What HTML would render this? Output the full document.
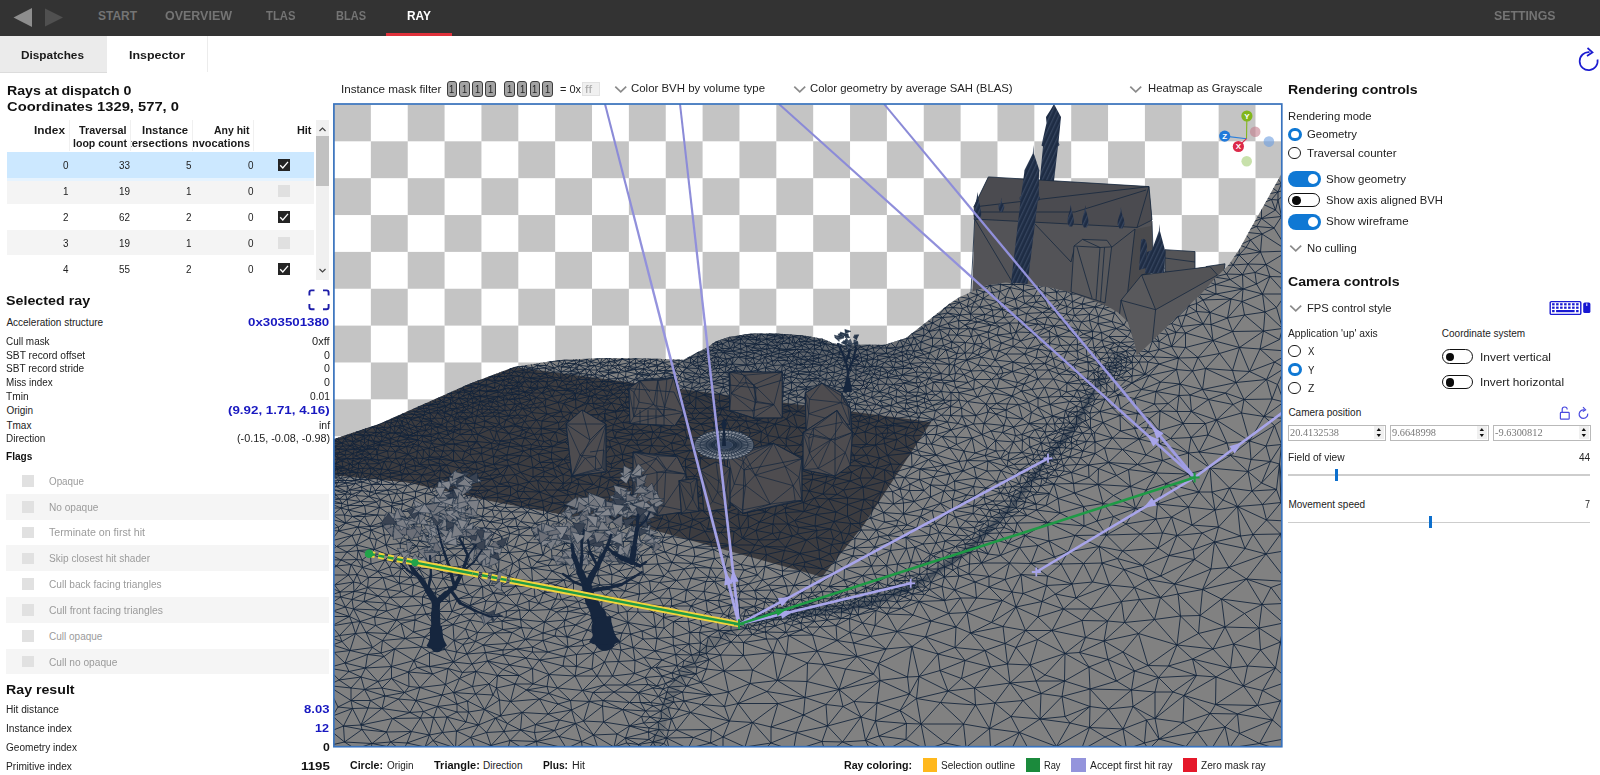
<!DOCTYPE html>
<html><head><meta charset="utf-8"><title>Radeon Raytracing Analyzer</title>
<style>
html,body{margin:0;padding:0;background:#fff;}
body{width:1600px;height:775px;position:relative;overflow:hidden;font-family:"Liberation Sans",sans-serif;}
.t{position:absolute;white-space:pre;line-height:1;transform-origin:0 50%;}
.r{position:absolute;}
</style></head><body>
<div class="r" style="left:0px;top:0px;width:1600px;height:35.5px;background:#333333;"></div>
<svg class="r" style="left:0;top:0" width="80" height="36"><polygon points="13.5,17.5 32,8 32,27" fill="#8e8e8e"/><polygon points="63,17.5 45,8.5 45,26.5" fill="#505050"/></svg>
<span class="t" style="left:98.0px;top:10px;font-size:12px;color:#747474;font-weight:bold;">START</span>
<span class="t" style="left:164.5px;top:10px;font-size:12px;color:#747474;transform:scaleX(1.0393);font-weight:bold;">OVERVIEW</span>
<span class="t" style="left:265.6px;top:10px;font-size:12px;color:#747474;transform:scaleX(0.9380);font-weight:bold;">TLAS</span>
<span class="t" style="left:336.0px;top:10px;font-size:12px;color:#747474;transform:scaleX(0.9182);font-weight:bold;">BLAS</span>
<span class="t" style="left:406.6px;top:10px;font-size:12px;color:#ffffff;transform:scaleX(0.9903);font-weight:bold;">RAY</span>
<span class="t" style="left:1493.5px;top:10px;font-size:12px;color:#747474;transform:scaleX(1.0247);font-weight:bold;">SETTINGS</span>
<div class="r" style="left:386px;top:32.5px;width:66px;height:3.0px;background:#e0313b;"></div>
<div class="r" style="left:0px;top:36px;width:107px;height:36px;background:#ebebeb;"></div>
<div class="r" style="left:0px;top:71.5px;width:107px;height:1.0px;background:#dcdcdc;"></div>
<div class="r" style="left:207px;top:36px;width:1px;height:36px;background:#ececec;"></div>
<span class="t" style="left:21.0px;top:50px;font-size:11.5px;color:#1a1a1a;transform:scaleX(1.0267);font-weight:bold;">Dispatches</span>
<span class="t" style="left:128.5px;top:50px;font-size:11.5px;color:#1a1a1a;transform:scaleX(1.0818);font-weight:bold;">Inspector</span>
<svg class="r" style="left:1576px;top:44px" width="24" height="30" viewBox="0 0 24 30"><path d="M13.5 8.2 A9 9 0 1 0 21.5 15.5" fill="none" stroke="#1c1cd0" stroke-width="1.7"/><path d="M11.5 4 L16.5 8.3 L11 12" fill="none" stroke="#1c1cd0" stroke-width="1.7" stroke-linejoin="miter"/></svg>
<span class="t" style="left:7.0px;top:84px;font-size:13.5px;color:#111;transform:scaleX(1.0502);font-weight:bold;">Rays at dispatch 0</span>
<span class="t" style="left:7.0px;top:100px;font-size:13.5px;color:#111;transform:scaleX(1.0915);font-weight:bold;">Coordinates 1329, 577, 0</span>
<span class="t" style="left:34.0px;top:126px;font-size:10px;color:#1a1a1a;transform:scaleX(1.1866);font-weight:bold;">Index</span>
<span class="t" style="left:79.0px;top:126px;font-size:10px;color:#1a1a1a;transform:scaleX(1.0811);font-weight:bold;">Traversal</span>
<span class="t" style="left:72.5px;top:139px;font-size:10px;color:#1a1a1a;transform:scaleX(1.0566);font-weight:bold;">loop count</span>
<span class="t" style="left:142.0px;top:126px;font-size:10px;color:#1a1a1a;transform:scaleX(1.1336);font-weight:bold;">Instance</span>
<div class="r" style="left:130.5px;top:138px;width:58.5px;height:12px;overflow:hidden"><span class="t" style="left:-12.5px;top:1px;font-size:10px;color:#1a1a1a;transform:scaleX(1.1245);font-weight:bold;">intersections</span></div>
<span class="t" style="left:214.0px;top:126px;font-size:10px;color:#1a1a1a;transform:scaleX(1.0475);font-weight:bold;">Any hit</span>
<div class="r" style="left:193px;top:138px;width:57px;height:12px;overflow:hidden"><span class="t" style="left:-4.5px;top:1px;font-size:10px;color:#1a1a1a;transform:scaleX(1.0976);font-weight:bold;">invocations</span></div>
<span class="t" style="left:296.5px;top:126px;font-size:10px;color:#1a1a1a;transform:scaleX(1.0867);font-weight:bold;">Hit</span>
<div class="r" style="left:68.6px;top:120px;width:1.0px;height:31px;background:#f0f0f0;"></div>
<div class="r" style="left:129.6px;top:120px;width:1.0px;height:31px;background:#f0f0f0;"></div>
<div class="r" style="left:191.5px;top:120px;width:1.0px;height:31px;background:#f0f0f0;"></div>
<div class="r" style="left:252.6px;top:120px;width:1.0px;height:31px;background:#f0f0f0;"></div>
<div class="r" style="left:6.5px;top:152.1px;width:307.5px;height:25.849999999999994px;background:#cce8ff;"></div>
<span class="t" style="left:62.9px;top:161px;font-size:10px;color:#222;transform:scaleX(0.9888);">0</span>
<span class="t" style="left:118.8px;top:161px;font-size:10px;color:#222;transform:scaleX(0.9888);">33</span>
<span class="t" style="left:186.0px;top:161px;font-size:10px;color:#222;transform:scaleX(0.9888);">5</span>
<span class="t" style="left:247.5px;top:161px;font-size:10px;color:#222;transform:scaleX(0.9888);">0</span>
<svg class="r" style="left:278px;top:159.1px" width="12" height="12"><rect width="12" height="12" fill="#242424"/><path d="M2.2 6.3 L4.8 9 L10 2.8" fill="none" stroke="#fff" stroke-width="1.3"/></svg>
<div class="r" style="left:6.5px;top:177.95px;width:307.5px;height:25.850000000000023px;background:#f4f4f4;"></div>
<div class="r" style="left:6.5px;top:177.95px;width:307.5px;height:2.5999999999999943px;background:#e6f3fe;"></div>
<span class="t" style="left:62.9px;top:187px;font-size:10px;color:#222;transform:scaleX(0.9888);">1</span>
<span class="t" style="left:118.8px;top:187px;font-size:10px;color:#222;transform:scaleX(0.9888);">19</span>
<span class="t" style="left:186.0px;top:187px;font-size:10px;color:#222;transform:scaleX(0.9888);">1</span>
<span class="t" style="left:247.5px;top:187px;font-size:10px;color:#222;transform:scaleX(0.9888);">0</span>
<div class="r" style="left:278px;top:184.95px;width:12px;height:12.0px;background:#e0e0e0;"></div>
<div class="r" style="left:6.5px;top:203.8px;width:307.5px;height:25.849999999999994px;background:#ffffff;"></div>
<span class="t" style="left:62.9px;top:213px;font-size:10px;color:#222;transform:scaleX(0.9888);">2</span>
<span class="t" style="left:118.8px;top:213px;font-size:10px;color:#222;transform:scaleX(0.9888);">62</span>
<span class="t" style="left:186.0px;top:213px;font-size:10px;color:#222;transform:scaleX(0.9888);">2</span>
<span class="t" style="left:247.5px;top:213px;font-size:10px;color:#222;transform:scaleX(0.9888);">0</span>
<svg class="r" style="left:278px;top:210.8px" width="12" height="12"><rect width="12" height="12" fill="#242424"/><path d="M2.2 6.3 L4.8 9 L10 2.8" fill="none" stroke="#fff" stroke-width="1.3"/></svg>
<div class="r" style="left:6.5px;top:229.65px;width:307.5px;height:25.849999999999994px;background:#f4f4f4;"></div>
<span class="t" style="left:62.9px;top:239px;font-size:10px;color:#222;transform:scaleX(0.9888);">3</span>
<span class="t" style="left:118.8px;top:239px;font-size:10px;color:#222;transform:scaleX(0.9888);">19</span>
<span class="t" style="left:186.0px;top:239px;font-size:10px;color:#222;transform:scaleX(0.9888);">1</span>
<span class="t" style="left:247.5px;top:239px;font-size:10px;color:#222;transform:scaleX(0.9888);">0</span>
<div class="r" style="left:278px;top:236.65px;width:12px;height:12.0px;background:#e0e0e0;"></div>
<div class="r" style="left:6.5px;top:255.5px;width:307.5px;height:24.5px;background:#ffffff;"></div>
<span class="t" style="left:62.9px;top:265px;font-size:10px;color:#222;transform:scaleX(0.9888);">4</span>
<span class="t" style="left:118.8px;top:265px;font-size:10px;color:#222;transform:scaleX(0.9888);">55</span>
<span class="t" style="left:186.0px;top:265px;font-size:10px;color:#222;transform:scaleX(0.9888);">2</span>
<span class="t" style="left:247.5px;top:265px;font-size:10px;color:#222;transform:scaleX(0.9888);">0</span>
<svg class="r" style="left:278px;top:262.5px" width="12" height="12"><rect width="12" height="12" fill="#242424"/><path d="M2.2 6.3 L4.8 9 L10 2.8" fill="none" stroke="#fff" stroke-width="1.3"/></svg>
<div class="r" style="left:316px;top:120px;width:13px;height:160px;background:#f0f0f0;"></div>
<div class="r" style="left:316px;top:135.5px;width:13px;height:50.19999999999999px;background:#c1c1c1;"></div>
<svg class="r" style="left:316px;top:120px" width="13" height="160"><path d="M3.5 11 L6.5 8 L9.5 11" fill="none" stroke="#444" stroke-width="1.2"/><path d="M3.5 149 L6.5 152 L9.5 149" fill="none" stroke="#444" stroke-width="1.2"/></svg>
<span class="t" style="left:6.4px;top:294px;font-size:13.5px;color:#111;transform:scaleX(1.0570);font-weight:bold;">Selected ray</span>
<svg class="r" style="left:307px;top:288px" width="24" height="24" viewBox="0 0 24 24"><g fill="none" stroke="#1d1da8" stroke-width="1.9"><path d="M2.4 7.5 V4.4 Q2.4 2.4 4.4 2.4 H7.5"/><path d="M16 2.4 H19.6 Q21.6 2.4 21.6 4.4 V7.5"/><path d="M2.4 16 V19.2 Q2.4 21.2 4.4 21.2 H7.5"/><path d="M16 21.2 H19.6 Q21.6 21.2 21.6 19.2 V16"/></g></svg>
<span class="t" style="left:6.4px;top:318px;font-size:10px;color:#222;">Acceleration structure</span>
<span class="t" style="left:248.4px;top:317px;font-size:11px;color:#1818c0;transform:scaleX(1.2066);font-weight:bold;">0x303501380</span>
<span class="t" style="left:6.4px;top:337px;font-size:10px;color:#222;transform:scaleX(0.9930);">Cull mask</span>
<span class="t" style="left:312.0px;top:337px;font-size:10px;color:#222;transform:scaleX(1.1043);">0xff</span>
<span class="t" style="left:6.4px;top:351px;font-size:10px;color:#222;transform:scaleX(1.0226);">SBT record offset</span>
<span class="t" style="left:323.7px;top:351px;font-size:10px;color:#222;transform:scaleX(1.0607);">0</span>
<span class="t" style="left:6.4px;top:364px;font-size:10px;color:#222;transform:scaleX(1.0074);">SBT record stride</span>
<span class="t" style="left:323.7px;top:364px;font-size:10px;color:#222;transform:scaleX(1.0607);">0</span>
<span class="t" style="left:6.4px;top:378px;font-size:10px;color:#222;transform:scaleX(0.9862);">Miss index</span>
<span class="t" style="left:323.7px;top:378px;font-size:10px;color:#222;transform:scaleX(1.0607);">0</span>
<span class="t" style="left:6.4px;top:392px;font-size:10px;color:#222;transform:scaleX(1.0164);">Tmin</span>
<span class="t" style="left:309.7px;top:392px;font-size:10px;color:#222;transform:scaleX(1.0222);">0.01</span>
<span class="t" style="left:6.4px;top:406px;font-size:10px;color:#222;">Origin</span>
<span class="t" style="left:228.0px;top:405px;font-size:11px;color:#1818c0;transform:scaleX(1.2127);font-weight:bold;">(9.92, 1.71, 4.16)</span>
<span class="t" style="left:6.4px;top:421px;font-size:10px;color:#222;">Tmax</span>
<span class="t" style="left:318.5px;top:421px;font-size:10px;color:#222;transform:scaleX(1.0509);">inf</span>
<span class="t" style="left:6.4px;top:434px;font-size:10px;color:#222;transform:scaleX(0.9957);">Direction</span>
<span class="t" style="left:236.5px;top:434px;font-size:10px;color:#222;transform:scaleX(1.0806);">(-0.15, -0.08, -0.98)</span>
<span class="t" style="left:6.4px;top:452px;font-size:10px;color:#111;transform:scaleX(1.0067);font-weight:bold;">Flags</span>
<div class="r" style="left:22px;top:475.2px;width:12px;height:11.600000000000023px;background:#e1e1e1;"></div>
<span class="t" style="left:49.0px;top:477px;font-size:10px;color:#9b9b9b;transform:scaleX(0.9833);">Opaque</span>
<div class="r" style="left:6.4px;top:493.8px;width:323.1px;height:25.80000000000001px;background:#f5f5f5;"></div>
<div class="r" style="left:22px;top:501.0px;width:12px;height:11.600000000000023px;background:#e1e1e1;"></div>
<span class="t" style="left:49.0px;top:503px;font-size:10px;color:#9b9b9b;transform:scaleX(1.0095);">No opaque</span>
<div class="r" style="left:22px;top:526.8px;width:12px;height:11.600000000000023px;background:#e1e1e1;"></div>
<span class="t" style="left:49.0px;top:528px;font-size:10px;color:#9b9b9b;transform:scaleX(1.0661);">Terminate on first hit</span>
<div class="r" style="left:6.4px;top:545.4px;width:323.1px;height:25.800000000000068px;background:#f5f5f5;"></div>
<div class="r" style="left:22px;top:552.6px;width:12px;height:11.600000000000023px;background:#e1e1e1;"></div>
<span class="t" style="left:49.0px;top:554px;font-size:10px;color:#9b9b9b;transform:scaleX(1.0094);">Skip closest hit shader</span>
<div class="r" style="left:22px;top:578.4px;width:12px;height:11.600000000000023px;background:#e1e1e1;"></div>
<span class="t" style="left:49.0px;top:580px;font-size:10px;color:#9b9b9b;transform:scaleX(1.0137);">Cull back facing triangles</span>
<div class="r" style="left:6.4px;top:597.0px;width:323.1px;height:25.799999999999955px;background:#f5f5f5;"></div>
<div class="r" style="left:22px;top:604.2px;width:12px;height:11.599999999999909px;background:#e1e1e1;"></div>
<span class="t" style="left:49.0px;top:606px;font-size:10px;color:#9b9b9b;transform:scaleX(1.0358);">Cull front facing triangles</span>
<div class="r" style="left:22px;top:630.0px;width:12px;height:11.600000000000023px;background:#e1e1e1;"></div>
<span class="t" style="left:49.0px;top:632px;font-size:10px;color:#9b9b9b;">Cull opaque</span>
<div class="r" style="left:6.4px;top:648.6px;width:323.1px;height:25.799999999999955px;background:#f5f5f5;"></div>
<div class="r" style="left:22px;top:655.8px;width:12px;height:11.600000000000023px;background:#e1e1e1;"></div>
<span class="t" style="left:49.0px;top:658px;font-size:10px;color:#9b9b9b;transform:scaleX(1.0166);">Cull no opaque</span>
<span class="t" style="left:6.4px;top:683px;font-size:13.5px;color:#111;transform:scaleX(1.0508);font-weight:bold;">Ray result</span>
<span class="t" style="left:6.4px;top:705px;font-size:10px;color:#222;transform:scaleX(1.0144);">Hit distance</span>
<span class="t" style="left:304.0px;top:704px;font-size:11px;color:#1818c0;transform:scaleX(1.1857);font-weight:bold;">8.03</span>
<span class="t" style="left:6.4px;top:724px;font-size:10px;color:#222;transform:scaleX(1.0217);">Instance index</span>
<span class="t" style="left:315.4px;top:723px;font-size:11px;color:#1818c0;transform:scaleX(1.1429);font-weight:bold;">12</span>
<span class="t" style="left:6.4px;top:743px;font-size:10px;color:#222;transform:scaleX(1.0058);">Geometry index</span>
<span class="t" style="left:322.6px;top:742px;font-size:11px;color:#111;transform:scaleX(1.1102);font-weight:bold;">0</span>
<span class="t" style="left:6.4px;top:762px;font-size:10px;color:#222;transform:scaleX(1.0134);">Primitive index</span>
<span class="t" style="left:300.5px;top:761px;font-size:11px;color:#111;transform:scaleX(1.2105);font-weight:bold;">1195</span>
<span class="t" style="left:340.5px;top:84px;font-size:11px;color:#222;transform:scaleX(1.0605);">Instance mask filter</span>
<div class="r" style="left:446.6px;top:81px;width:8.9px;height:14.2px;background:#a3a3a3;border:1px solid #3c3c3c;border-radius:3px"></div>
<span class="t" style="left:449.4px;top:85px;font-size:10px;color:#222;transform:scaleX(0.9348);">1</span>
<div class="r" style="left:459.4px;top:81px;width:8.9px;height:14.2px;background:#a3a3a3;border:1px solid #3c3c3c;border-radius:3px"></div>
<span class="t" style="left:462.2px;top:85px;font-size:10px;color:#222;transform:scaleX(0.9348);">1</span>
<div class="r" style="left:472px;top:81px;width:8.8px;height:14.2px;background:#a3a3a3;border:1px solid #3c3c3c;border-radius:3px"></div>
<span class="t" style="left:474.8px;top:85px;font-size:10px;color:#222;transform:scaleX(0.9348);">1</span>
<div class="r" style="left:484.9px;top:81px;width:9.1px;height:14.2px;background:#a3a3a3;border:1px solid #3c3c3c;border-radius:3px"></div>
<span class="t" style="left:487.8px;top:85px;font-size:10px;color:#222;transform:scaleX(0.9348);">1</span>
<div class="r" style="left:504px;top:81px;width:8.7px;height:14.2px;background:#a3a3a3;border:1px solid #3c3c3c;border-radius:3px"></div>
<span class="t" style="left:506.8px;top:85px;font-size:10px;color:#222;transform:scaleX(0.9348);">1</span>
<div class="r" style="left:516.8px;top:81px;width:8.6px;height:14.2px;background:#a3a3a3;border:1px solid #3c3c3c;border-radius:3px"></div>
<span class="t" style="left:519.5px;top:85px;font-size:10px;color:#222;transform:scaleX(0.9348);">1</span>
<div class="r" style="left:529.5px;top:81px;width:8.9px;height:14.2px;background:#a3a3a3;border:1px solid #3c3c3c;border-radius:3px"></div>
<span class="t" style="left:532.4px;top:85px;font-size:10px;color:#222;transform:scaleX(0.9348);">1</span>
<div class="r" style="left:542.3px;top:81px;width:9.2px;height:14.2px;background:#a3a3a3;border:1px solid #3c3c3c;border-radius:3px"></div>
<span class="t" style="left:545.3px;top:85px;font-size:10px;color:#222;transform:scaleX(0.9348);">1</span>
<span class="t" style="left:559.6px;top:84px;font-size:11px;color:#222;transform:scaleX(0.9948);">= 0x</span>
<div class="r" style="left:582px;top:82.2px;width:18px;height:14.099999999999994px;background:#f0f0f0;border:1px solid #e2e2e2;box-sizing:border-box;"></div>
<span class="t" style="left:584.5px;top:84px;font-size:11px;color:#aaa;transform:scaleX(1.1821);">ff</span>
<svg class="r" style="left:613.5px;top:84.5px" width="13.5" height="9.2"><path d="M1.3 1.6 L6.75 6.8 L12.2 1.6" fill="none" stroke="#8a8a8a" stroke-width="1.7"/></svg>
<span class="t" style="left:631.4px;top:83px;font-size:11px;color:#222;transform:scaleX(1.0388);">Color BVH by volume type</span>
<svg class="r" style="left:792.5px;top:84.5px" width="13.5" height="9.2"><path d="M1.3 1.6 L6.75 6.8 L12.2 1.6" fill="none" stroke="#8a8a8a" stroke-width="1.7"/></svg>
<span class="t" style="left:810.4px;top:83px;font-size:11px;color:#222;transform:scaleX(1.0291);">Color geometry by average SAH (BLAS)</span>
<svg class="r" style="left:1128.7px;top:84.5px" width="13.5" height="9.2"><path d="M1.3 1.6 L6.75 6.8 L12.2 1.6" fill="none" stroke="#8a8a8a" stroke-width="1.7"/></svg>
<span class="t" style="left:1147.5px;top:83px;font-size:11px;color:#222;transform:scaleX(1.0233);">Heatmap as Grayscale</span>
<span class="t" style="left:350.0px;top:761px;font-size:10px;color:#111;transform:scaleX(1.0602);font-weight:bold;">Circle:</span>
<span class="t" style="left:386.5px;top:761px;font-size:10px;color:#222;transform:scaleX(0.9930);">Origin</span>
<span class="t" style="left:433.7px;top:761px;font-size:10px;color:#111;transform:scaleX(1.1010);font-weight:bold;">Triangle:</span>
<span class="t" style="left:483.0px;top:761px;font-size:10px;color:#222;">Direction</span>
<span class="t" style="left:543.0px;top:761px;font-size:10px;color:#111;transform:scaleX(1.0224);font-weight:bold;">Plus:</span>
<span class="t" style="left:571.5px;top:761px;font-size:10px;color:#222;transform:scaleX(1.0626);">Hit</span>
<span class="t" style="left:844.0px;top:761px;font-size:10px;color:#111;transform:scaleX(1.0641);font-weight:bold;">Ray coloring:</span>
<div class="r" style="left:922.6px;top:757.8px;width:14.899999999999977px;height:13.800000000000068px;background:#ffb81c;"></div>
<span class="t" style="left:941.0px;top:761px;font-size:10px;color:#222;transform:scaleX(1.0083);">Selection outline</span>
<div class="r" style="left:1025.5px;top:757.8px;width:14.5px;height:13.800000000000068px;background:#1b8a3c;"></div>
<span class="t" style="left:1044.0px;top:761px;font-size:10px;color:#222;transform:scaleX(0.9271);">Ray</span>
<div class="r" style="left:1070.7px;top:757.8px;width:14.899999999999864px;height:13.800000000000068px;background:#9494dc;"></div>
<span class="t" style="left:1089.5px;top:761px;font-size:10px;color:#222;transform:scaleX(1.0381);">Accept first hit ray</span>
<div class="r" style="left:1182.5px;top:757.8px;width:14.5px;height:13.800000000000068px;background:#e5182a;"></div>
<span class="t" style="left:1201.0px;top:761px;font-size:10px;color:#222;transform:scaleX(1.0109);">Zero mask ray</span>
<span class="t" style="left:1288.4px;top:83px;font-size:13.5px;color:#111;transform:scaleX(1.0471);font-weight:bold;">Rendering controls</span>
<span class="t" style="left:1288.4px;top:111px;font-size:11px;color:#222;transform:scaleX(1.0277);">Rendering mode</span>
<div class="r" style="left:1288.3px;top:127.49999999999999px;width:7.4px;height:7.4px;border:3px solid #0f78d4;border-radius:50%;background:#fff"></div>
<span class="t" style="left:1307.0px;top:129px;font-size:11px;color:#222;transform:scaleX(1.0353);">Geometry</span>
<div class="r" style="left:1288.3px;top:146.5px;width:10.8px;height:10.8px;border:1.3px solid #1a1a1a;border-radius:50%;background:#fff"></div>
<span class="t" style="left:1307.0px;top:148px;font-size:11px;color:#222;transform:scaleX(1.0506);">Traversal counter</span>
<div class="r" style="left:1288.4px;top:171.2px;width:32.2px;height:15.4px;border-radius:8px;background:#0f78d4"></div><div class="r" style="left:1307.7px;top:173.89999999999998px;width:10px;height:10px;border-radius:50%;background:#fff"></div>
<span class="t" style="left:1326.0px;top:174px;font-size:11px;color:#222;transform:scaleX(1.0466);">Show geometry</span>
<div class="r" style="left:1288.4px;top:193px;width:29.4px;height:12.4px;border-radius:8px;background:#fff;border:1.5px solid #111"></div><div class="r" style="left:1292.1000000000001px;top:196.4px;width:8.6px;height:8.6px;border-radius:50%;background:#0a0a0a"></div>
<span class="t" style="left:1326.0px;top:195px;font-size:11px;color:#222;transform:scaleX(1.0232);">Show axis aligned BVH</span>
<div class="r" style="left:1288.4px;top:214.4px;width:32.2px;height:15.4px;border-radius:8px;background:#0f78d4"></div><div class="r" style="left:1307.7px;top:217.1px;width:10px;height:10px;border-radius:50%;background:#fff"></div>
<span class="t" style="left:1326.0px;top:216px;font-size:11px;color:#222;transform:scaleX(1.0474);">Show wireframe</span>
<svg class="r" style="left:1289px;top:244px" width="13.5" height="9.2"><path d="M1.3 1.6 L6.75 6.8 L12.2 1.6" fill="none" stroke="#8a8a8a" stroke-width="1.7"/></svg>
<span class="t" style="left:1307.0px;top:243px;font-size:11px;color:#222;transform:scaleX(1.0287);">No culling</span>
<span class="t" style="left:1288.4px;top:275px;font-size:13.5px;color:#111;transform:scaleX(1.0474);font-weight:bold;">Camera controls</span>
<svg class="r" style="left:1289px;top:304px" width="13.5" height="9.2"><path d="M1.3 1.6 L6.75 6.8 L12.2 1.6" fill="none" stroke="#8a8a8a" stroke-width="1.7"/></svg>
<span class="t" style="left:1307.0px;top:303px;font-size:11px;color:#222;transform:scaleX(1.0164);">FPS control style</span>
<svg class="r" style="left:1549px;top:300px" width="44" height="17" viewBox="0 0 44 17"><rect x="1.2" y="1.6" width="30.6" height="12.8" rx="1.2" fill="#fff" stroke="#1818d2" stroke-width="1.4"/><rect x="3.1" y="3.2" width="2.5" height="2.2" fill="#1818d2"/><rect x="7.1" y="3.2" width="2.5" height="2.2" fill="#1818d2"/><rect x="11.1" y="3.2" width="2.5" height="2.2" fill="#1818d2"/><rect x="15.1" y="3.2" width="2.5" height="2.2" fill="#1818d2"/><rect x="19.1" y="3.2" width="2.5" height="2.2" fill="#1818d2"/><rect x="23.1" y="3.2" width="2.5" height="2.2" fill="#1818d2"/><rect x="27.1" y="3.2" width="2.5" height="2.2" fill="#1818d2"/><rect x="3.1" y="6.6" width="2.5" height="2.2" fill="#1818d2"/><rect x="7.1" y="6.6" width="2.5" height="2.2" fill="#1818d2"/><rect x="11.1" y="6.6" width="2.5" height="2.2" fill="#1818d2"/><rect x="15.1" y="6.6" width="2.5" height="2.2" fill="#1818d2"/><rect x="19.1" y="6.6" width="2.5" height="2.2" fill="#1818d2"/><rect x="23.1" y="6.6" width="2.5" height="2.2" fill="#1818d2"/><rect x="27.1" y="6.6" width="2.5" height="2.2" fill="#1818d2"/><rect x="3.1" y="10" width="2.5" height="2.2" fill="#1818d2"/><rect x="7.1" y="10" width="18.5" height="2.2" fill="#1818d2"/><rect x="27.1" y="10" width="2.5" height="2.2" fill="#1818d2"/><rect x="34.2" y="2.4" width="7.2" height="10.6" rx="1.6" fill="#1818d2"/><rect x="37.3" y="3.4" width="1" height="2.6" fill="#fff"/></svg>
<span class="t" style="left:1288.4px;top:329px;font-size:10px;color:#222;transform:scaleX(1.0275);">Application 'up' axis</span>
<span class="t" style="left:1441.8px;top:329px;font-size:10px;color:#222;">Coordinate system</span>
<div class="r" style="left:1288.3px;top:344.7px;width:10.8px;height:10.8px;border:1.3px solid #1a1a1a;border-radius:50%;background:#fff"></div>
<span class="t" style="left:1307.6px;top:347px;font-size:10px;color:#222;transform:scaleX(0.9593);">X</span>
<div class="r" style="left:1288.3px;top:362.90000000000003px;width:7.4px;height:7.4px;border:3px solid #0f78d4;border-radius:50%;background:#fff"></div>
<span class="t" style="left:1307.6px;top:366px;font-size:10px;color:#222;transform:scaleX(0.9593);">Y</span>
<div class="r" style="left:1288.3px;top:381.5px;width:10.8px;height:10.8px;border:1.3px solid #1a1a1a;border-radius:50%;background:#fff"></div>
<span class="t" style="left:1307.6px;top:384px;font-size:10px;color:#222;transform:scaleX(1.0476);">Z</span>
<div class="r" style="left:1441.8px;top:349.4px;width:29.4px;height:12.4px;border-radius:8px;background:#fff;border:1.5px solid #111"></div><div class="r" style="left:1445.5px;top:352.79999999999995px;width:8.6px;height:8.6px;border-radius:50%;background:#0a0a0a"></div>
<span class="t" style="left:1480.0px;top:352px;font-size:11px;color:#222;transform:scaleX(1.0853);">Invert vertical</span>
<div class="r" style="left:1441.8px;top:375px;width:29.4px;height:12.4px;border-radius:8px;background:#fff;border:1.5px solid #111"></div><div class="r" style="left:1445.5px;top:378.4px;width:8.6px;height:8.6px;border-radius:50%;background:#0a0a0a"></div>
<span class="t" style="left:1480.0px;top:377px;font-size:11px;color:#222;transform:scaleX(1.0733);">Invert horizontal</span>
<span class="t" style="left:1288.4px;top:408px;font-size:10px;color:#222;">Camera position</span>
<svg class="r" style="left:1558px;top:405px" width="34" height="17" viewBox="0 0 34 17"><g fill="none" stroke="#4b4be0" stroke-width="1.2"><rect x="2.4" y="7.4" width="8.8" height="6.8" rx="0.8"/><path d="M4.2 7.2 V4.6 A2.5 2.5 0 0 1 9.2 4.4"/><path d="M26.3 4.9 A4.3 4.3 0 1 0 29.7 8.6"/><path d="M25 2.2 L27.6 4.8 L24.8 6.6"/></g></svg>
<div class="r" style="left:1288px;top:425.3px;width:95.6px;height:13.4px;border:1px solid #b9b9b9;background:#fff"></div>
<div class="r" style="left:1374.0px;top:426.3px;width:9.599999999999909px;height:12.399999999999977px;background:#f0f0f0;"></div>
<svg class="r" style="left:1374.0px;top:426.3px" width="10" height="13"><polygon points="2.6,5 4.8,2 7,5" fill="#111"/><polygon points="2.6,8 4.8,11 7,8" fill="#111"/></svg>
<span class="t" style="left:1290.0px;top:427px;font-size:11px;color:#777;transform:scaleX(0.9378);font-family:'Liberation Serif',serif;">20.4132538</span>
<div class="r" style="left:1390.2px;top:425.3px;width:96.5px;height:13.4px;border:1px solid #b9b9b9;background:#fff"></div>
<div class="r" style="left:1477.1000000000001px;top:426.3px;width:9.599999999999909px;height:12.399999999999977px;background:#f0f0f0;"></div>
<svg class="r" style="left:1477.1000000000001px;top:426.3px" width="10" height="13"><polygon points="2.6,5 4.8,2 7,5" fill="#111"/><polygon points="2.6,8 4.8,11 7,8" fill="#111"/></svg>
<span class="t" style="left:1392.0px;top:427px;font-size:11px;color:#777;transform:scaleX(0.9412);font-family:'Liberation Serif',serif;">9.6648998</span>
<div class="r" style="left:1493.3px;top:425.3px;width:95.7px;height:13.4px;border:1px solid #b9b9b9;background:#fff"></div>
<div class="r" style="left:1579.4px;top:426.3px;width:9.599999999999909px;height:12.399999999999977px;background:#f0f0f0;"></div>
<svg class="r" style="left:1579.4px;top:426.3px" width="10" height="13"><polygon points="2.6,5 4.8,2 7,5" fill="#111"/><polygon points="2.6,8 4.8,11 7,8" fill="#111"/></svg>
<span class="t" style="left:1495.4px;top:427px;font-size:11px;color:#777;transform:scaleX(0.9440);font-family:'Liberation Serif',serif;">-9.6300812</span>
<span class="t" style="left:1288.4px;top:453px;font-size:10px;color:#222;transform:scaleX(1.0184);">Field of view</span>
<span class="t" style="left:1578.8px;top:453px;font-size:10px;color:#222;transform:scaleX(1.0067);">44</span>
<div class="r" style="left:1288px;top:474.2px;width:302px;height:1.400000000000034px;background:#cdcdcd;"></div>
<div class="r" style="left:1334.5px;top:469px;width:3.5px;height:12px;background:#0d6fcd;"></div>
<span class="t" style="left:1288.4px;top:500px;font-size:10px;color:#222;">Movement speed</span>
<span class="t" style="left:1585.0px;top:500px;font-size:10px;color:#222;transform:scaleX(0.8989);">7</span>
<div class="r" style="left:1288px;top:521.7px;width:302px;height:1.3999999999999773px;background:#cdcdcd;"></div>
<div class="r" style="left:1429px;top:516px;width:3.400000000000091px;height:12px;background:#0d6fcd;"></div>
<svg class="r" style="left:333px;top:103px" width="950" height="645" viewBox="333 103 950 645">
<defs><pattern id="ck" x="334" y="104.45" width="73.72" height="73.72" patternUnits="userSpaceOnUse"><rect width="73.72" height="73.72" fill="#fff"/><rect width="36.86" height="36.86" fill="#c4c4c4"/><rect x="36.86" y="36.86" width="36.86" height="36.86" fill="#c4c4c4"/></pattern>
<clipPath id="cT"><polygon points="500.0,378.0 514.0,367.0 559.0,360.0 604.0,358.0 649.0,358.5 683.5,359.8 696.0,353.0 708.0,347.0 715.6,341.6 728.8,336.9 751.0,333.5 777.0,333.4 803.8,335.4 822.5,338.8 833.8,343.4 842.6,344.8 885.0,344.8 906.0,338.0 927.7,321.0 949.0,304.0 958.8,297.5 971.0,292.0 986.9,285.3 1005.6,282.5 1030.0,284.4 1052.5,288.0 1071.0,292.8 1090.0,299.4 1108.8,306.9 1118.0,312.5 1128.0,322.0 1135.0,345.0 1140.0,375.0 1110.0,400.0 1080.0,440.0 1048.0,458.0 1013.0,505.0 970.0,548.0 928.0,578.0 885.0,599.0 842.0,610.0 800.0,612.0 740.0,624.0 600.0,560.0 500.0,440.0"/><polygon points="334.0,439.0 379.0,424.0 424.0,404.0 469.0,384.0 514.0,367.0 931.2,422.0 863.7,525.0 822.0,577.0 648.0,528.4 568.0,516.0 484.0,500.0 409.0,483.0 334.0,475.6"/><polygon points="1283.0,170.0 1281.3,174.0 1263.9,205.3 1250.0,229.7 1239.5,248.9 1229.0,264.6 1215.0,278.5 1201.0,294.0 1183.7,310.0 1166.0,327.4 1145.0,348.0 1121.0,369.0 1098.0,386.0 1072.5,429.0 1047.0,458.0 1013.0,505.0 970.0,547.7 931.2,423.0 863.7,525.0 822.0,577.0 648.0,528.4 568.0,516.0 484.0,500.0 409.0,483.0 334.0,475.6 334.0,748.0 1283.0,748.0"/></clipPath>
<clipPath id="cV"><rect x="334" y="104" width="948" height="643"/></clipPath></defs>
<g clip-path="url(#cV)">
<rect x="333" y="103" width="950" height="645" fill="url(#ck)"/>
<defs><pattern id="ht" width="4" height="4" patternUnits="userSpaceOnUse" patternTransform="rotate(-65)"><rect width="4" height="4" fill="#1e2c44"/><rect width="4" height="1.3" fill="#35445e"/></pattern></defs>
<polygon points="1054.0,104.0 1050.5,110.0 1046.0,117.0 1046.5,123.0 1042.2,142.2 1041.5,145.5 1043.0,146.5 1039.4,184.0 1053.4,186.0 1058.0,146.5 1059.5,145.0 1058.5,142.2 1061.0,117.0 1057.2,110.0" fill="url(#ht)"/>
<polygon points="1128.0,228.5 1152.0,221.0 1153.0,250.0 1150.0,276.0 1150.0,335.0 1118.0,335.0" fill="#4a4a4d"/>
<path d="M1152 221L1153 250L1150 276" stroke="#15273d" stroke-width="0.7" fill="none"/>
<polygon points="988.4,176.9 1022.5,180.6 1149.0,186.6 1152.0,220.0 1151.0,226.0 1135.0,229.0 1127.5,294.0 1127.0,330.0 971.0,330.0 974.7,218.8 973.8,207.0" fill="#535357"/>
<polygon points="988.4,176.9 1149.0,186.6 1152.0,220.0 1137.0,227.5 973.8,219.0 973.8,207.0" fill="#4b4b50"/>
<path d="M988.4 176.9L1149 186.6L1152 220L1137 227.5L973.75 219M973.75 207L988.4 176.9M1149 186.6L1137 227.5M973.75 207L1149 186.6M980 212L1075 212L1146 190M974.7 219L971 292M1135 229L1127.5 294M974.7 219L1017 290M1033 222L1071 262M1071 262L1075 246M1135 229L1112 247" stroke="#15273d" stroke-width="0.8" fill="none"/>
<polygon points="1074.0,246.0 1082.5,239.4 1106.9,240.3 1111.6,246.9 1105.0,303.0 1071.0,292.0" fill="#59595c" stroke="#15273d" stroke-width="0.8"/>
<path d="M1074 246L1100 247.5L1111.6 246.9M1100 247.5L1082.5 239.4M1100 247.5L1096 300M1104.5 247.5L1100.5 302M1077 247L1092 298" stroke="#15273d" stroke-width="0.8" fill="none"/>
<path d="M977.5 192L978.3 198Q981.7 212 981.3000000000001 216L979.0 220L976.0 220L973.6999999999999 216Q973.3 212 976.7 198Z" fill="url(#ht)"/>
<path d="M1001.3 197.5L1002.0999999999999 203.5Q1004.5999999999999 204 1004.1999999999999 208L1002.8 212L999.8 212L998.4 208Q998.0 204 1000.5 203.5Z" fill="url(#ht)"/>
<path d="M1070.7 204L1071.5 210Q1074.3 218.5 1073.8999999999999 222.5L1072.2 226.5L1069.2 226.5L1067.5000000000002 222.5Q1067.1000000000001 218.5 1069.9 210Z" fill="url(#ht)"/>
<path d="M1085.3 205L1086.1 211Q1088.8999999999999 219.4 1088.4999999999998 223.4L1086.8 227.4L1083.8 227.4L1082.1000000000001 223.4Q1081.7 219.4 1084.5 211Z" fill="url(#ht)"/>
<path d="M1121 207L1121.8 213Q1124.8 220.4 1124.3999999999999 224.4L1122.5 228.4L1119.5 228.4L1117.6000000000001 224.4Q1117.2 220.4 1120.2 213Z" fill="url(#ht)"/>
<polygon points="1033.5,145.0 1033.8,153.4 1039.4,170.3 1039.0,173.0 1038.8,196.0 1040.0,197.5 1039.6,200.0 1037.8,201.0 1027.5,284.0 1011.0,283.0 1020.5,200.5 1019.4,199.5 1019.8,197.0 1021.0,196.0 1024.2,173.0 1024.4,170.3 1032.8,153.4" fill="url(#ht)"/>
<polygon points="1165.0,249.7 1195.0,251.6 1195.0,270.3 1165.0,272.0" fill="#545457" stroke="#15273d" stroke-width="0.8"/>
<polygon points="1206.0,266.6 1225.0,263.8 1222.0,285.0 1206.0,290.0" fill="#545457" stroke="#15273d" stroke-width="0.8"/>
<polygon points="1141.6,275.0 1210.0,266.6 1217.5,275.0 1230.0,290.0 1200.0,340.0 1152.0,365.0 1116.0,368.0 1121.0,300.3" fill="#59595c"/>
<polygon points="1141.6,275.0 1210.0,266.6 1217.5,275.0 1155.6,309.7" fill="#535356"/>
<path d="M1121 300.3L1141.6 275L1210 266.6L1217.5 275L1155.6 309.7L1141.6 275M1121 300.3L1116 348M1155.6 309.7L1152 345M1121 300.3L1155.6 309.7M1121 300.3L1133 340M1165 258L1195 262M1141.6 275L1165 268" stroke="#15273d" stroke-width="0.8" fill="none"/>
<polygon points="1159.6,224.0 1159.9,231.0 1165.5,252.0 1164.0,273.0 1145.0,273.0 1147.0,252.0 1152.0,250.0 1158.9,231.0" fill="url(#ht)"/>
<path d="M1141 240Q1146 236 1147 246L1146 268L1139 270Z" fill="url(#ht)"/>
<polygon points="500.0,378.0 514.0,367.0 559.0,360.0 604.0,358.0 649.0,358.5 683.5,359.8 696.0,353.0 708.0,347.0 715.6,341.6 728.8,336.9 751.0,333.5 777.0,333.4 803.8,335.4 822.5,338.8 833.8,343.4 842.6,344.8 885.0,344.8 906.0,338.0 927.7,321.0 949.0,304.0 958.8,297.5 971.0,292.0 986.9,285.3 1005.6,282.5 1030.0,284.4 1052.5,288.0 1071.0,292.8 1090.0,299.4 1108.8,306.9 1118.0,312.5 1128.0,322.0 1135.0,345.0 1140.0,375.0 1110.0,400.0 1080.0,440.0 1048.0,458.0 1013.0,505.0 970.0,548.0 928.0,578.0 885.0,599.0 842.0,610.0 800.0,612.0 740.0,624.0 600.0,560.0 500.0,440.0" fill="#818181"/>
<polygon points="1283.0,170.0 1281.3,174.0 1263.9,205.3 1250.0,229.7 1239.5,248.9 1229.0,264.6 1215.0,278.5 1201.0,294.0 1183.7,310.0 1166.0,327.4 1145.0,348.0 1121.0,369.0 1098.0,386.0 1072.5,429.0 1047.0,458.0 1013.0,505.0 970.0,547.7 931.2,423.0 863.7,525.0 822.0,577.0 648.0,528.4 568.0,516.0 484.0,500.0 409.0,483.0 334.0,475.6 334.0,748.0 1283.0,748.0" fill="#818181"/>
<polygon points="334.0,439.0 379.0,424.0 424.0,404.0 469.0,384.0 514.0,367.0 931.2,422.0 863.7,525.0 822.0,577.0 648.0,528.4 568.0,516.0 484.0,500.0 409.0,483.0 334.0,475.6" fill="#3d3c3f"/>
<g clip-path="url(#cT)"><path transform="scale(.5)" d="M1854 817l-5-12 16 6-11 6-19-5-14 4 12 10-14 7-30 4-8-15 1-11 3-14-25 5 22 9-16 1-6-10-17-7 16-11 13-16 8 6-21 10-14-1-18 7 16 5 2-12-13-7-5 14-8-11-16-8 8-11 7-6 19-6 7 6-1 11 14-7-13-4 4-6-11 0-10 14 17-8-8 11 7 0-11 11-13 3-9 5 17 6 4 12 12-7 24-3-8-8 17 3 9 10 8 9-11 5-17 4 1-3-13-3 7-7 7-10 18 5 7-4 18-1 22 0 21-4-16-14 6-10-8-11-3-9-7-7-17-4-4-10 2-12-20-2 17-5 3 7 7-3-10-4 11-3 8-11-7-13-15 2-14-5-5 11-8 11 0 11 13 2 6-10-19-3-12 0 12 11-18 4-8 7-4 13 9 2 17-8 12-3 6 13-18-10-6 9-3 8 1 9-13-3 12-6-9-3-3 9 9 10 15 10 15 1-7 5 14 5 16 13 5-7 17 7 4-8 17 4 11-6 3-18 21 2 24 9 24-10 13-6-2 20 8 15 17 14 21-1 31-15 7-18-32-17 7-11-12 3 5 8 36 8-4 9-38 4 6-21-16 2-34 0 17-18 28 8-11 10-17-18-24 1 7 17 18 13-12 22-20 9 37 5-20 23 16 16-4 22-20 7-16 26-29-6 19 27 8 19 22-8 26 8 2-20 38 11 16 18 9 17 15-4 9-3 7-5 9-5 18-5-6-9 12-4-4-12-17-2-16 1-8 8-19 12-25-7-13-16-9-15-17-5-11-28-31-17 11 24 31 21-5 14 22-9 18-1 8 5-17 11-25 5-28 12 5 22-27-14-37-12-20 4-29 4-1 21-19 9-20 10-15 5 2 25-31-3 11 20 2 19-16 16-30 0-26 8-10 18 22 10 40-2 32 7-8 30 22-3 27-3 8-31 16-6 26-2 18-4 36-2 17-1 12 6 10-1 26-4 10 31 38-16 23 32 60 1-13-14-11-32-3-37 55 26-52 11-48-11 45-26 73 7-18 19 48 22 47 9 40 29 31-35-71 6-10 15 50 14 53-20 51 8 40-35 52-12-44-18-7-34-6-36 35-8-39-40 41-25 38-29-16-56 5-27-37-13-34 13-37-9-22 1-22 16-27 1-34 19-35 4 1 31-35-17-6-22 40 8-34 14 19 31 16-14 28-5-29-26-15-15-25 7-15-12 6-12-6-11-15-7-6-13-10 12 16 1 21-6-6 13 16-1-10 12-13-3 7-8-12 1-3-8 9-9-15-4 11-10 15 1 8-3 4-8 10-9-13-7-7-11-18-8-2-19 16 2 3 8 1 17 9-3-2 14-23-8 16-3M1854 817l17 4-4 18 28 5-20 7-8-12-20 13 5 17-26 3 6 12 20-15 20 0 3-18-23 18 1 19-21-4-22-14 16 2 8-13 18 10 11 19 9-19 30-9-7-16 21 3 17 5-31 8-27-9-28 1-10-7 30-6-29-4-5-9-21-4 9-6-11 2-28-7 13 14-6 12-19-2 5 16-25 2 3 16-20 20-38 1-16-14 15-7 6-11-25 11 4 7-14 7-15 6-36-6 1 17-28 8 8 24-17 4-15 13-9 20 33-3 20 3 18-10 29-6-16-18 25 11 9 10 28 6 26 12-39 6 13-18-35 9 22 9-13 9-17 9-17 16 32 10-15-26 38 11 28 11-28 13 0-24-23 15-4 19-7 15-31-6-41-11 19-18 32-9-11-18 28 2-11-10 19-17 7-15-18-3 9-7 30-15 17-10 30 7 19-12-7 20 17 3-23 17-20 18 2 25-33 10 0-13-38 2M1854 817l-12 9 25 13 16-9 12 14 6-13 15 16-14 13-18 13-12-4M2393 1351l-56-19 17-42-58 41 41 1 48-14 8 33 39 3-47-36-31-28 72 8-41 20 76 18-29 18 55 18 64-36-26 45 54-19-28-26 10-52-43-28-29-29-46-29 50-40 82 5-43-55-39 50-88 21 38 19-43 33-39 1-7 58-45-51-60 6 30-46 30 40 52-7-5-44 44 43 5-52-49 9-7-20 40-49 33 19-17 41 53-44 35 23 49 17 33-12-7-61 5-60-14-114-6 51-28 30-50 4 6 59 25-3 26 39 29-40 12-26-11-37-37 4 8 31 40 2M2393 1351l-25 40 64-37-1 55 44 19 70 12-66 27-4-39-55-1-54 18-48 33-29 8-36 12-43-24-31-19-66 38 49 8 17-46 1-42-50 20-50 5 33 55-74-28 41-27-34-37-56 5-41-30 32-42 34-6 45 2 70-23-1 55-47 25-36 14-24 32 17 32-16 34 37 5 53-11 27-47 39 9 38-37-37-5-40 33-10-13-6-40 56 20 0-35 53-16 30 18 47 4 0 53 8 41 54 15 49 8 38-5 20-29 40 20 26-47 40 35-66 12-60 9 96 2-36-11M2393 1351l-76 4 20-23M2393 1351l-47 33-36 0-44 29 44 24 56 8 2-54 52 36 11-18 56-37 38 9 36 21-16 38-30-29-40 17-25 26-29 47-27-37 26-37 30 27 9 42M2146 617l-1-14 19 5-18 9-13 11-24-4-14 10-25 4 6 10-29 6 15 11 9 9-30 8-15 11 23 15-23 16 21 11 23 5 6 18-12 21 12 17 24 13 22-16-3-14-12-21-31 0-17-8-12-15 14-7-12-20-37 0 14 16 35 4 11-12-23-8 27-10-4 18 24-3 10 4 28-14-13-12-22-4 16-15 24-10-8-12 26 10 6-16 22 19-28-3-18 2 15 13-39-3 6 19 19-1-6 13 23 16 17-6 17-9-19-10-18 8-20 1-33 0-2-16 1-13-29 0 17-17-12-9-14 17-21 17-15-5-23 9 23 7-29 9 6-16-22 13-18-5-18 12-12 14-3-14-11-13-15-9 27 1-12 8-5 14 16-1 1-21 12-12 14-3 19-6 6-14-28-6-12-3-22-11-9 3-15 14 5 10 17 1 19-1 6 16-29-3 23-13 8 1 12 12 8 17-2 7-7 16-23 10-14 17-8 10-13 3 1-21-26-10-17-2-25-3 18 11 7-8 13 10 4-8 7-22-21 9-3 11-8-8-17 5-11 13 5 10-21 13 28-6 18 1 9-10 10-8 30 2 13-11 21 2 30-6 18-15 16 3 15 6 14-15 0-16-32-7 9 16-25-9-21-7-8 18 14 6M2146 617l3 14-16-3 10 13 20 3 16-3 18-8 27 10 5-17-32 7-7-19-26-6 7-19-26 14-17-5 15-10 11-12M2146 617l20 0-2-9 33-7 15 5-22 8 16 3 6-11M2146 617l-12-4-25 11-11-6-26-14-22 3-20-9 17-17-21-12-25 0 19 6 27 6 0-12 12-6 18 13-30 5-1 11 4 15-15 10-5-19-19-4 9-19 6-6 21 0-4-13-17 13-22-14-3 14-21 2-22-9M1087 1059l-25-4 7 17 18-13-17-12-8 8-24 15-25 19 5 16-20 14-1 25-13 13 15 16 32-1 11 15-9 24 26 10-18 18 48 5-30-23 42-2 22-20 34 4-10-12 29-17-10-15 29-8 2-12-31 5 29 7 5 19-24 4 19 0 29 7 26 1 4-15-2-11 35-7 29-21 20 15 32-5 16-11 37 9-4 18 12 9 12 26-33-6-35-3-20-19 15-23 14 19-9 23 21 17 14-14 21-20 4-8-12-19 28 1 29 21-1 14 4 11 33 15 18-1 11-17 34 12 11-21 35-14 22-19-37-5 15 24 15 12 20 4 37 0 17 13-18 2 1-15-8 10 7 5 9 15-3 7-14 0-15 3-14-5-8-1 12-9 16-4 17-6-6 12 15 3 8-5 1-12 20-11 24-11 1 13-13-1 12-12-31-13 7 24 12 1 2 5 11-4 0 11-4 5-4 10 12-1 12-1 21 3 9 13-29 11 20 35 68-21 50 12 29 12 29 35 45 27-5-41-69-21 65-13 4 34-40 14-40 20-54-13-38 45-5 44 9 51-30 31 1-32 29 1 49 38 41 9-80 4-40-20-54-7 55-25-13-26 42 27 10 51 39-13 36-38-85 0 39-43-48-8 63-15-58-29-14-60-52 5-31-25-34 13 65 12-58 15-7-27-33-5-40 21-61 7 4-38 57 31 14 27 66-16-80-11-9-32-48 1-5-6-22-13-4-12-6-8-10-2-3-12-18-5-30 2-23 17-9-4-7-14-3-13 4-12 28 7 12-13 28-2 16-21 5-27-21 1-8-29-36-15-38 9-4-6 42-3 20-13 27-16 5 19 39-1 5-15-15-16-34 13 7-17 13-20 23-21 25-7 27 9-36 11-16-13-26-7-30-8 4-16-20 12-24 3-33 8-23-4-18 11 19 19 29 1-13 13-16-14-18 18-5 15-18-5 23-10 34-4 30 19 30 3-4-28-20-5-23-2-7-8-22 7-24 2 5-21 41 12 0-19 15 7-8 20 23 18 20-11 1-13-21 8-15-22 18-15-6-15-26-18-15 4-22-6-19-18 1 20-28-2 16 17 12-15 18-2 10-14-29-4 19-9 11-9-6-15 29 4 33 7-9 6-16 21-5 15-27-16 12 20 15 8 0-12 24-14-19-1-31-23 23-11 24 13-47-2-1 22 32 1M1087 1059l3 12 28-2 20-13-20-11 0 24 12 18 33-1 5-20 9-17-15-11-6-16-26-11 19 2 7 9 25-7-8-20 18 11-10 9-32-2 0-11 24-7-22-7-14 2-33 3 11-13 22 10-11 15-22-12-19 8 2 14-27 3-17-4-28-12 6-11-25 4 19 7-5 13 33-1 12 10 5-6 27 12-17 17-15-23-14 19 21 12-24 4-24-6 6 14-7 22-10-16 17-6 18 3 31 2-13 13-5 17-33 3-28 0 8 14-11-1 10 26-24 3 11 10-30-6-27 18 11 20-23 9 25 13-36 12-11 18-16-18 27 0 11-25-16 5 5 20 17 6 19-18 26-15-1-23-27 16-41-15-11-17 41 12 38 4 22 13 12-13 19-21-21-8-35-15-28-1-17 6 32 10-15-16 9-16-15-15 19-9 30 6 13 11-26 6-21 1 9-16-5-8-21 1-38-1 4-16 3-17 25-3 16-3 10 10 25-3-26-1-9-6 7-13-25-11-31-4-13-17 21-8 19 7 20-11-9-10-11 21-13-21-6 14-22-4 16-18 9-8-19-4 0-6-25 6-14 2-9 19-16-12-12-11 16-12 11 13-27-1-14 9 26 2 25-7-10-3 14-11-25-2-15 2-1 10-24-6 3-8-6-6-8-17 16 1-8 16 25-10-9-13 16 1 18 0 13 11 15 6-10 15-4 14 18 11-27 8 0 12-27 6-11-14-15 2 7 17 8-19 13-1 25-3 19 4 23 5 1 12-18 13-27 6-27 0-19-11 0 19-17 13 16-2 28 4 11 14 14 11 4 11 18 12 24 17-1 14-18 11-24 2 11 19-22 13-28-3-33-12 7 24 26-12 0-14 22 2-22 12-14-15-19 3-31 20-4 11-27 13-13 15-10-20 23 5 24 4 28 17 15-14 31 8 43-4 32 13-25 5 41 13 28-12 19 11 15 25 18-19-33-6-9 18 24 7 34 1 35-1-9 22-9 13-35 5 35 5 13 20 19 21-43 0-43-8-7 30-38 12 44 3-6-15-26-16-12 28 28 17 16-14 35 2 13 10 22 3 23 22-29 22-24-11-34 14-20-26-23 0-20 10-27 1-8 35-9 24 38 12-22-25-16 13-45 9-24-19-37 3 30 6 7-9 33 2 36 8M1087 1059l12-4 19 14 36 0-16-13 20-4 10 14 27 6 19-10-24-1-22 5-14 3-24 18-7 14-19 18-30 5 12-14 5-18-10-6-30 16 35 8 18 9 26 0-7-18 19-5-12-9-25-4-14 9 12 5 27-10M1087 1059l4-7-21-5-29-4-10-7-17 17-20 6-23-3 9-12 9-10-25-1-21 3-8-17-17 6-22 10-9-14-12 11-12 3-19 11 24 9-12 17-17 10 32 5 17 1 8 10-15 13 28-1 8 24 6 15-37 8-13 21-3 8 29 17-22 20-2-20-30 7 7 18-22 12-37 0-44-6 7-14-49-2-16-4 8 19-42 0M1230 725l14-7-8-8-7 12 1 3-6 7 6 3-13 6-20 2 20 2 0-4-2-10-9-1-6-3 13-10 3-8 3 7-6 1-8-2 11-6M1230 725l6 5-6 5 12 5 10 3-1 11 18 5 4-1 2-10-6 11-4 10-5 1-7 9 23 1 6-4 4-6 12-1-3 6-13 1 8 7-14-3 9 9 16-1-2 12 1 8 2 18-5 12 3 11-31-1 12 12-16 9-3 10-32-3 35-7-15-11 19-10 2-6 29 7-19 11 25 4 10 11-14 3 4-14-6-15 7-14-10 3-20-9 25-3 11-9-13-9-5-2 4-6 12 1-11 7-19 11 21 7 5 9 22 6 12-15 26 5 6 13 29 4 7 14-24-4-12-14 15-6 14 10 18-12-32 2-21-7 1-15 23 1 1-22 36 14 11-7 23-6-23-8 0 14 2 15-13-8-14 7-23 1 9 9-12 12-5-11-15-11-8-10 5-8-17 3 12 5-22 3-19-11-3-9-15-1 7-8 8 9-5 12 8-3 19-4-3-11 13-2 6-7 15 0 16-9 3-5-16-2 13 7 14 2-11-7-3-7-13 5-13-6 6-8 8-8 8-10 7-4 8-9 0-9 18 0 8-3 7-5-18-3-2-3 16-3 4 9 8 4-15 1-11-8 3 11 3 5 5-8 10 5 15-1 19 10-6 3 5 10 1-13 5-6-6-7 4-8 13 4-17 4-18 3 24 4 6 5-11 1-14 3 8 0-7 10 12 0 28 2 17-2-4-12 18-6-3-9-18 0-10-9-11 6 0 8-11 3M1230 725l-12-2-5-6M2241 862l37 16-33 21 30 30 50-8 52 27-45 19-40 13 23 28 17-41-20-21-20 34-21 37 41 21-60 10-25-15-21-26 21-16-31-22 10 38 65 10-19 31 29 20 31-30 3-30-44 9-44-26 34-18 31 7M2185 1164l34 6-37 48-55 0-23 43 26 46-55-28 29-18-53 0-41 26 22 8-17 33 5 38 26 35M2185 1164l-41 4-22-40 45-1 18 37-33 32 67-26 29-31 37-8 11 28-48-20-13-22-37-24-31 34-23 41-51 3-47 16-4-38 20-22 47-13 27-10-38-22-22 9-14 36-43-1-41 27-40-5-23-13 8-22-19 15 11 7 24-7-1 20 25-22 15 27 32 6 32-10 51 22-9 32-38-16-14 27 19 47-45-8-23-8-42 21-31 29-34 13-52-15-30-30-22 35-15 29-43-14-23 25-43-9 30 50-26 30 3 43 30 32-41-1-57 18-45-15 0-32-37-9-59 29 13-32-78-17 42 34 23 15 44 20 15-49-46-3-36 17-2 27 25-12 0 23 44-3 52-8-37-41 51-38-14 47 51 11-6 36M2185 1164l19-38 15 44 50 5 10 24 42-4 40 37 36 35-43 23-77-23-28-22-34-3-33-24-18 23-60 20-28-27 51-16 37 23 51 1-7 40 41-37-6-42-24-33M1228 1384l-42 1-21-4-24 20-25 7 27 12-2-19 38 2 26 9 40 7 14 33-52-8 38-25 46 3-32-17-31-21-20-14-22 15-7 18-14-22-15-29 34-14 25-14 28-1 5-23-21-3 16 26-12 29-16-28 12-27-16-22 5-15 46-15 5 23-22 17 3 15 28 21 33 15 21-16-36-5 15 21 9-1 32 11 3 12 4 2-14 14 28 10 58 6 34-6 43-17 34 16 21-22-55 6-52-25-30-23-29 8-24 7 27 14-31 3-17-5 10-15 11 3 3-13 21 6-6-17-32-1-27 11-12 15 42-4-30-11-14-18-22 13-18 6-33 2 32 24 34-11-13 19 6 14 18 3-24-17-39 15-23 14 49 1 19-16-45 1-26-18-17 18-43 11-50-5 26 25-43-14 18 21-37-10-58 5-28-27 6 24-30 19 22 17-18 29-16-15-44 12-19-28-19-21-8 22-26 1 18 34-45 16-9 17-31-10-34 16 4-22-55-3 22 14 33-11 29-23 8 20 42-21 36 7 7 11 45 15-23 10M1228 1384l-22 17 39 18 14-14 22 0 10 17 15-10 21-3 21-5 20-2 55-12-20 19 56 33 17-35 24-40 5-27 41-35 27 4-18 52-9-56-59 6-39 31 9 42 19 23 58-24 22 24 54-12 42 14-45 21-65 24M1142 747l3 3-3 13-10 6 2 9 0 3-17-7 17 4 17-8-19-1-15 5-5-14-18 4-15-6 18-3 15 5-7-6-15-6 9-8 9-4 7-3 7 11-14-8-8-13-15-1-11 1-13 2-8-3-9 11-8 0 0-11 8 11 3 8-11-8-15 5-3 9-7 6 11-2-4-4 10-4 8-10-14-1-1 6-3-8 4 2M1142 747l16-2-13 5-10 6 7-9 0-5-20 2 1-10-8-1-15-10 9-4-19-4 10 8-7 8-8-9-11 9 0-8M1142 747l-15 3-5-6-1 12-9 4-16 11 21 3-7 7 24 0 17 6 0 12 1 18-10 8-6 16 21 12 11 16 0 15-28-10 28-5-21-2 10-14-39 5 29 9-7 7-22-16 18-17-19 4-13-13-10-4-31-3-8 6-20-1 8 6 12-5-6 12-6-7-13 13-23 6 23-3 16 8-7 12 10 4-6 16 18 6 16 10 26-3 24 14 20-11 12-9 25-2 37-3-26-8-27-2 17-18-17 3 8-11-19-5 19-5-9-16 30-3-8-12-14-10-23 10 13 13-23-5-20-2-18 9-20 10 10-14-21 12-10-15-3-9-8-5 15-3 5-13-14-6 5-3 9 9 20 3 12-5 6-12-16-5 5 6 5 11 12 12 6 18-28 5-4-15 32 10 5-16 25 10 18-11-19-7 9-11-9-1 13-6-4 7 18 5-27 6-15-2 15-10-5 10 5 2-24 8 15 18-15 9-23-2M1512 811l-13-9-5-8 22 0 15-3 3-10-12 5 9 5-3 10-12-7-17 8-14 3-2 13 9 4 13 3 17 5 13 1 2 14-7 12 5 14 23 4 23-22 14 2 38 0 16-18-22-1-32 19-23 22-14-2 15 17 14 16 14-18 14 10 23 18 0 17-21-2-22-1 3 7-20-3-15-18-17-13-18-1 10-17 8 18-7 14-11-15-7-20 14-13 3 16 20-12-8-27 31 5-9 24 1 15 28-2 13-7 42-14-6 20 17 7 28-6-1-21-19 0-19 0 9 14 30 7 28 5 10-6-3-25 20-11 7-11-18-7 5-14 21-6 16 7-24 7-18 6-1 12 12 6 14 14-11 2-23-5-20 4 23 21 18 1 2-21 15 8 8-11-12 1 4 10 26 2-6 20 35 7-23 23-13 16-18-6 19 17 12 22 9-23 11 13 28 13-9-22 28-5 26 17 16-9 17-20-26 6-7 23 17 10 24 9-10 14-19-5 29-9 16 2-26 12-19 16-9 7-32-6-23 12-27 17-21 2-24-8-28-8-18-16 5-21 18 16-23 5-4 27 4 13 14 20 12 14-13 16-30 2 3-16 27 14 19 3 26-12 14 27-2 20-20-17-24 17 7 16 19 7 17 0 11-6-1 9 13 8 10 6 4-12-14 6 1 3 9 3-17 6-14 10 28-4 3-12 13 15 24 39-11 32 25 34 4 33-42 12-23 1 9-61-67 34 58 27 4 34 19-35M1512 811l15 4-9-10-6 6 3 7 7 12-5 11 18-10 24-2-22 16 13 3-20 9-7 6-22 3-4-10-17-5-20 7-25-4 17-14 8 18-12 13 9 12-4 14 4 15 35 0-24-20-11-9 22-7-31-5-13-17-7 2-26-8-17 10-11 18-5 15-23 11-14-9-16-18 27 11 3 16 4 7-32 12-21-9-15-10-30-11 10-12 13 11 27-12 1 13-6 21 18 15-1 13-30 5-8-13-23 6 31 7-29 9-2-16-36 6-15 9-15 16-11-20-36-9-7-14 21-4-7-14-2-9 14 0 8-10 1-5M1512 811l-19 0-10 7-20-7-19 7-4 11 12 11-25 5 8 9M1626 786l7-8-20 0 13 8 27-2 1 8 0 7-17 3 8 18 4 17 17-5 17-8 14-7-17-5 3 12 3 18-20-10 14-20 8-12 17-2-5 6-3 13 14 1-13 10-1-11 14-9-6-10-7-6-10 8-7-7 6-10-1-7 17-5-1 7 17 1 8-8-24 0-6-6-16 1 14-11 7-15-17-1 2-7 15 8 10 0 0-8 18 2 6 3 4-4 3-2 13-11-9-2-12 0-12-3-9 5-14-4-16-12 7-6 6-4 0-13-17 11 4 12-4 0-14-7-16-10-6 13 9 11-14-2 5-9-15-2 0-8-16-7-14 0 0-6 14 6 3-6 13-7 9 10 7 4 5 3 7-6-12 3 0-8 0-8M1626 786l10 8 1 8-8 17-2 17 6 19 35-10-19-8M1626 786l-17 10 28 6-25 5 17 12 16 1 35-8 20-8-12-4-15 2 7 10M2575 1163l-8 83-49 10-68-2-7-56 81 11-31-51M2575 1163l-9 44-24-32-18 34-6 47-51 32-41 10 24-44-50-23-3 36 29 31 35 38 26 36 8-40 56 4-30-36-3-44M2179 1455l67 3 43 28 4-46 25 38-21 21-8-13M1059 1221l-1-19-16-15 26-13-3-12-25-24-22 14-34 5-7 13 22 3 32-15 34 4-34 10 37 2 31-8 29-6-24-18-12 16-27 4-2-26-23 2-3-18-19-15-14-12-14 12-3 13-23-7 13-17-25 2-24 1-2-8-34-17 35 3 20 13-11-21 10-8-1-4 19-15-28 9-17-1-24 7-10-14-10-9-8 9-4-6-24-7 17-11-4-8-23 14-6-8-21 8 12 14-4 9-17 11-11 12-10 21-23 9-33 2 8 19 1 15-23-6-5 21 10 14 15 3 13 8 38 4 7 16-9 11-43-3 3-17 25 6 17-13 30 4-4-16M1059 1221l-20-1 2 19 25 18 23-13 24 14 17-18 43-12-37-5-6 17-41 4 12-25 11-21 11 1-6-17-5 16-25-12 30-4 30 9-24 8 12 14 22-10 32 10 15-11 31 1-25-12-6 11-1 15 32-14 40 4 52 5 16 0 32 17-28 14 33 22-34 9 1-31-20-8 0-23-20 13-32-18 44-11 8 16 16-15 30-17-35-4-19 20 24 1 0 15-16 23 48-6 7-17-39 0 27-8 3-24 39-17 17 0 26-3 22 12 20-4 28-8 40-8 0-10-2-19-33 10 35 9 35 0 23 15 46-11-11 27 29 10-10 11 1 11 8 5 9 9-12 5-1 13-28 3-14 14 34 27 40 32 33 35-56-10-13 41 30 24 46 3-32 28-37 50 60 25-14-28-46 3-33 25-8-26 11-31-62 13 51 18M1059 1221l19-14 23 12 12 5 17 16 21 10 22-22 16 6 14-17 19 17 34 11-2-22-19-20 2 23 19 19 55 9-4-29 20 10-16 19 3 23 32-3 1 17 4 18 3 22 14-10-17-12 12-10-16-8-33-14-28 1-25-10-17-2 12-21 20-21-1-17-21 16-17 3-34-9-14-4-16 15-12-11-4-14 16-8 31 7M731 864l9 6-3 10-8 7 7 5 1-12 10 2-7-12-12 2-19-3-6 2-13 6-6 9 2 6-9 6-14 6 11 4-5 2-6-6 17 1-3-7 16 0-7-6 14 0-16-6-13-4-5-10 9 7 9 7 8-4-2-5-11-7 16-7 8 8 8 8-2-10-5-8-1 10 3 12-16-6-15 2 4-9-11 0 7 9-4 3-10 2 4 3 19-1-17 7 19-1M731 864l0-7 1-8 14 5-15 10 21 1-12 5 11 2 8-6 5 7-1 10-5 2-11-3 16 1-12-11 13 1 12-6-7-7-16-4 4-7-4-5-7 10 7 2 15-1 1 5-6 4-4 2-7-1 1-9 10 8 1 9 6 2 12 2 18-5 1-5 3-3 5-5 11-2 16 6-9 4-9 4-14-7-6-9-9-3-7-6-9-3-16 6 11 6 5-12 1-9 10 0 11 2 9 6-3 9-12 1-8 2-12 6 11 5-4 2 6 10-1 10 18 6 9-7 7-8 21 2 1 11-13 4 11 7-19 7-16-10-1-6-18 0-6 9-19-2-4-2-20 1-12 1-3-4-10-9-1-4 5-4 17-7-7 9 8 6 0-10 11-7-13 0 4-6-18 0-4 5 18 1 1 2 1 5 8 3 13 7 8-2 1 5 16 12-21 7-10 8-5 2 20 8 9-4 9-7-2-14 16 1 9-4 13-6-5-7 13-2 15-4-8 8-4 7-8 14-24 8-8 7 17 6 7-12 8-9 10 9 5 14 23 3 14 8-24 7 10 12 4 13 5 10 26-11 12 8-28 10-21 17 22-5 23 4-2-12M731 864l-4-5 4-2-7-4 3 6-12-5-2 10-9-3-9 2-1 7-15 0M1640 1014l-8 15-2 23 38-9 14 22-21-7-28 17 5 25-25-20-18-12 39-7 27-3 6 20 20 8-5-21-15 13-34-3-20 5-42 14-15-15-27 14-28 12-46 8-28-14-40-4-32-5-25 14-28-10-20 17-6 8-25-10-21 11-32-5-1 24 21-9 12-10 3-16-30-5-5 16-20-11-15-18 28 2 12 11-25 5 13-16 4-16-5-11-13-12-19 3 4-14-31-3 7 21M1640 1014l-23-5-10-4 1 18-37-7 9-20-22-14-4-13-14-6-37 9-2-25 38-2 24 4-9-15-19-6 4 17-31-6-7 8-14-6-36-1-3-22 16-1-7-5 11-20-15 5-29 8 20-13 13-9 22 6 0-13-14-13-5-5 13-17-21-1 4-8-12-14-16 9-8 9 20-7-12-2-14-11-22-21 1-13-10-5-14-3-14-6-10-4 2-14-15-6-3 2 1 7 17-3-18-4-17 2-13 3-14-2 1-4-8 1 7 3-10-1-23-5-3-9-7 6-5 5-7-10M1551 771l-2 6-15 4 13 5-16 5 16 3 21-2-2-8 12 3-10 5-21-6 19-2-17-7 18-4-16-2 5-7 14-8 13 9 9-9 4-8-11-4-5-10 11 3-6 7-13-5 8-5-15-4-10-9 2-6 19-1 9 9-11-2-19 0-10 1 12-7 1-8-17 5 16 3 17 6 2-7 11-1-2 10 10 6-15 5-2-7 7-4 7-4 10-1 15 1 8-7 14-3-3 7 17-5-1 11-9 8 10 6 16 9-4 10-14 4 4-14 10 10 18-6 2-10-16 6-14 0-2-9 15-5 17 8-7-11 9 4 3-12-16 1 4-6 22 1-10 4-12-5 0-7 6-4 13-1-6-5-11-6 0 12-2 4 22 8 2 11-15 5 18-1-3 9-19 9-14-4-1-14 6-10-10-5-11-5 5-7-14-4-3-8-12-2-1-8 10-2 7-4 12 5 15-2-6 11-16-3-9 5-12 6 10 11-12-2-2 5 11 4 16 6 12-6 14-1-12-7-13 3M1551 771l-11-3-6 13-6-3-6 8-6 8-2-14-20 14-7 7 12 1 19 3-2-11M1551 771l15-4 4-11-2-6 17-6 13-2-2 6 22 2 0 7 6 4-20 5-12-10-11-2 4-10M1862 1242l-36-12-32 33-53 10-16-27-9-16 25-12-23-4-1-13 13-7-18-8-4-20-13 7-7-13-30 13-13 10-7-14-14 16 21-2 1 14 3 10-12-7-17 7 13 6-3 5-12 2-3-8-7 3 0-5 12-3-18-8 6 11-19 0 13-11-16 0-9-7-1 12-5 9-17 4-6-11-16-9-23-16 34-1 13 19 21-7 27-6 20-1-3-14 2-14M1862 1242l35-15-8-26-5-28 5-19-16-9-19 3-15 1-19 2-10 2-17-5 23-8 6-15 18 6-1 18-23-9-21-12 18-31 9 28 22-2-14-29-18-19 34 13 15 21-31-15-17 3-32 4 3-19-35 12 9-21-5-13 40-8-17 19-23-11-12-24 26-11 20-17 20-2 21-3 33-9 20 13-17 14-18-3 15-24-13-13-20 22-21 25 7 22-11 11-10-9 3-11-27 3M1638 935l-13 14 0 10-7 23-11 23 22-9 17-8 28 1-9-18-14-6-26-6-45-3-26 13 34 11 19 25M1638 935l23-10-23-7-21 15-19 6 27 10-8-16-14-20 12-13 30 8 5-19-16 5-19 6M1638 935l27-2-2 13 40-2-3 18 20-6 6 18 37 10 24 24 20 20 0-22-2-9-18 11M1118 1473l-45 10-53-2-6 23-32-13 38-10 21-21-26-13-14-15-2-32M1118 1473l-9-12-38-12-27-24 35-27-26-18-32 23 9-35-35-17-2 25-7 14-17 29-12 31-16 25-30 21 2-34 28 13 32-10 9 26-4 13M1118 1473l45 10 3 25 62-14 49 12 0-17 29-5 5-14 7-11 15 17-22-6-14-6-38-12-25 16-27-24-2-32-38 30 40 2-20 26 47-2-6 26-33 0-29 14M1118 1473l33-26 16-5-24-22 36-17-12 39 20 28-24 13 32 11-8-24 41 24 23-18 26 13 19 11 10-16 27-8 5 20-11 9 119-8-25-11-45 11-49 8-14-9 25 0 38 1-43-21 20-16 28-35-38 13 10 22 70-1-36 16 34 11M1118 1473l15 24-60-14 36-22 42-14 12 36-30 14M665 1290l35 11-10 25 41 10 52-3 6-35 21-21-45 4 24 17 54-4-33-17-35-10-10 14-20 14-45 6 11-34 9-24-21-10 5 12 7 22 34 28-10 14-4 27 37-23 15 20 34 11 23 31 25-27-6-15 48-9-48-19 0 28 37 4 11-13 27-16 37-3-4-15 39 10 0 10 46 6-33 14-44-8 20 29 11-12 13-9 46 7-27 14-32-12-31-17-4-17-27 23-37-4 18 21 27-2 23-21 31-12 27-12-27 2M665 1290l19-7 16 18 35 8-45 17-35 10 23 24-23 11 47 30 3 16 17 33 42-33 21 20-63 13-35 2 18-35 31-1 28 1-23-16-39 0 27-22 35-3 6 16-6 25 56 8-35 12-12 27-51-14 14-34-34-15-26 13 29 3-40 15-3 30 27 22-2-32-25 10M665 1290l3 15 32-4M665 1290l-3-14 17-5 32-4 21-2-12-22 29-9-42-16-3-19 4-16-1-19-38 6 28-20-24-18 29-3-20-9-9 12-21 18 45 0 17-1-7 15-27 20 1 10-28-1 27-9-11-14-12 3 23 11 28-1 23 3M1018 1105l11-11 22 8-14 18 19-7-5-11M1018 1105l8 22-29 17M1992 902l-1-21 14-16 22 19-9 22 26-1 16-11 7 15 7-9-14-6 23-8 18 9 13-10 9 3 7-4 6-8-16 7-6 2-15 1 2 9-16 8-11-3 9-14 2 17 12 0 4-8 17 0-4-10-9-5-6 6-6-13 18-11-2-14 8-11-12-5-16 4-13-21 24-6 5 23-29-17 0-19 21-2 3 15 39-6-17-10 26 0 6-13-21 4-11 9-25 1 22-15 14 5 15 9-9 10 14 9 2 11 10-7 20-5-5 15 20-3-19 14 25 8-17 20 36 11 20 23-28 26 58 4-18 10-40-14-27-18-29 9-7 13-11 16 35 10 18 14 65 4 10 44-44 16-33 9 12-35-39 6-51-16-17-10-7 24 24-14 4 29-25 19-41-14-20 15 61-1-22-25-19 11-9-14-13-1-19 10-14-7-7-9-6-8-18-7-18-3 21-16 26 1-4-14-19-21-21 14-44 6 1 19-5 18-24 8 15 20-4 25 27 4 30-1 1 11-31-10-9 14-20 12 21 11 20 4-10 8 2 8 16 15 24-2 38-15 15-24-25-7-19-13 19-10 17-2 4-8 22-1 16 25-11 24-23-8 34-16 26 20 33 23M1036 733l-15-9M945 1373l33-5 17-17M2358 791l25 32-3-33-20-22-2 23-4 32 12 24-48 14-40 17-53-2-16 20 36 3 47 11-17 19 37 17 13-25-6-33-1-27 23 16 25-30 17-24 34-24 16 41-17 30-34 5-16-28-46-25-2 39-23-6-26 2 9 21 41 10 22-11 41-2-5 31-52 15-33-11-14-32 17-23 4-18 19 24M2358 791l-46-8 9-19 32-25-35-11 39-12-14-23 28 2 55-14 39-18 62-1 38-5-12-42-28-27-41 15-22-5-42 27-27-2 13 25 20 33-30 34-25-20-14 21 39-1-11 27-32-3 4-23-39-17 25-6-25-10 0 16-21 5-13 8 12 12 22 4-28 21 6-25-18 0 6-12 24 2 10 14-20 23 23 13-38 15-19-13-35 18 1-24-17 7 16 17 7 6-11 26-15-18-10 25M1638 1100l25-11 24-3-8 18 27 8-35 13-26 13-35-14-2 9-8 9-12 29-23-19 35-10-15-13-22-6-30-14-24 25-27-5 19-24 32 4-3 24 35 19-28 18-12-10-10-10-6-16-21 6-39-3-16 18-16-1-35 3-29 4-17-18 8-18 24 13 24-3-8-8-32-17-22-6-6-20-22 10-21-11-4-21-14 10-16 11-1 19 5 7-18-5-35 11-21-7 1-4-36-8 21-10-9-17 4-17-27-17-1-24-4-6 23-3-19 9-15 21 3 13-19 10-9 16-21 1 12 14 5 24-30 3 18 11 22 7 8 11 27-13-27-10-8 12 35-2-1-10 23-5-30-13-20-4 1 22M1638 1100l1 18 6 20 24 8-31 23-17 2-33 0 16 15-2 13 14-4 4 12-5 5 18 1 8 7 10 0-8 7 7 3 4 10 18 11-32 3-15 16 49 11-2-30 10-14 17 0 26 9-25 19 41 8 9-22 44 12 57 11 61-20-2 41 20 26 51 13-11-33-60-6-59-21-27 19M1638 1100l-38 7-37 16 6-22-40-8-12-13-32-3-5-20-24-17-6 14-9 11 24 25-10 23-6 24 33-8-27-16-26 4-45 10 6-14 37-14 2 18-8 19-29-1 25 19-5 9-4 20 4 18 28 13-25 10 32 4-12 14 27 4 0 15 13 10-13 13-20-8-25-3-4 19-14 12-21-16 2-23 24-13 31-10 21-10 6 14 30 11-30 4-14 5-6 10-13 18-12-21-18-8-19 0 21 21 16-13 20-12 5 15M1638 1100l22 8 11 17 8-21 30-8 28-16 16-20-34-13-24-14-23-9-40 5-43 12-13 7-15 16-16 3 11 12 29-7-24-8M1889 1154l29-2 20-4 12 16 3 32-32 0-32 5-51 2-35 14 19-17-14-6 8-9-17 6-5 13-8-15-13 12-14 14-10-12-6 1-13-10 4-7-2-12-24-9 17-15 24-3 27 4-20 12 13 12-12 1M1889 1154l-13-16-3 7-11 20 27-11 20 26-25-7-22-8-8-17-9 12-6-11-7 6-12-4-4-11 24-9 17-9 4-13 11-23-13-16-13 18M1889 1154l0-20-2-16 12-12 22-1-10-12-12 13 7 10 17-3 17-8-9-8 23-3 1-9 6-13-18 7 7-13-13 6-18-16 12-14 18 13 8-11-11-17-41-7 0-21-17-17 5-11-32-1-22-11-30-4 31-17 27 16 33-6-11-18 29-7 10-21-15-13-14 7-27 14 17 20-14 12-8 12-6 16 0 24 27-12-7 25 24 13 42-8-23-8M1889 1154l17-14 9-5 3 17 32 12 28-11 0 21-25 22 52 5-22 44 49-31-26 39M2089 836l-26-11-18 13-8-29-13-17-40-6 9 21 22 1 9-16-31-14-9 8-29 8-37-9 17 18 17 28-28 1 9 20-21 22 32 2-31 13-29-16 15 23-36-8 9 22 46 13 16-2-8 21M2089 836l5 12 11-16 4 16 18-2-10-9 11-1 8-2 4 12-9 8-4-8 1-10-23-4 26-11-31-12M2089 836l-31 11-13-9-32-3-21-7-24 19 14 15 23 3 3-14-40-4 8-23-4-16 12-22-17-14-20 7-11-14-8-16 21 10M819 948l-8-13 20-3 8-3 20 1-5 5-24 7-11 6-14-1-1 3-22-4 18-3-24-3-12-2 4-15-12-3-12-3-14-3-6-6 0 9-7 9 0 11-15 5 13 3-15 8 0-8 2-3 4-8 11-8 17 2 12 8 13-9-25 1 5-9-9-5-6 3-18 0-13 0-9 5-12 5-15 2M2332 967l26 26-43 15 28 26-31 4 13 28-9 30 22 15 16-40-38 25-35-28-36 34-32-32 39-22M2332 967l66 17 32 36 45-7-16-37 37-33-35-32-7-25-38-16-18 34 63 7 41 8-3-37-66-42 50-14 45 7-40-34 45-40 16-35-50 19-34-2 14-46-53-14-4-32 43 14 14 32 48-33 3-38-5-36 47 0-7 69-35-33-46-21-29 33 10 27 24-33-5-27 2-25 39 10 15-35-30-8-14-17 25-24-20-24-14-16 37 4-3 36 56-2-29-46-25-19 0-30 28 13 5-20 29-25-29 9 0 16 7 33 14 69-45 27-11-25-29-9 9-15 23-12 53 34M1812 1479l-39 21 79-1M766 1155l-10-12-31-8-11 14-12-20 12-10 2-18 25 6 8-8-10-23 14 3-4 20 30 12-38-4-17 13 18 8-17 7-11-16 10 1M766 1155l-29 0-12-20M1276 932l-7-18 28-2-6 20-15 0-31-12-23 8-17-12 16-22 24 15 37-7-13 12-24 6 8 18-29-2-2-8-18 0-16-10-16 10-32 12 4 13 32-4-4-21-18-6-14 18-25-8 18-6-6-7-21 6-26 0-14 10-31-7 27-15 4 22 0 19 9 7 11-8-20 1 23-11-23-8-25 10-6-17-21-8 0-10-27 3-24-6-23 2 11 15 12-17 1-12 19-9-27-17 23-10-11-5 2-12 19-10 9-6-4-6-17-1-13-1-6-9 2-6-4-4-12-2-5-9-13 4 9 6 4-10 3-5 1-8-15-4-1 9 16-5-2-4-13 0-4 6 3 3 15 3 16-2 3 11 13-9 21-2 1 3-22-1-16-2 4-10-4-3 16-9-8-5-15 5-5 2-10 0 7 5-15 5-1-7 16 2 3-5 10 0 10-7 0-5-15 10 5 2 18-2 16 2-1-7 8-2 14 1-4-7-7-5-3 11-7-8 10-3 5-6 16 3 7 5-6 8 16 1 9 2 6-9 13-5-10-3-3 8-6-4 9-4 9-1 1 4 10-3 14 11 7 7-3 9 2 7 14 10-11 1-15 4-12 9-10 5-10 11-7 6 18 8 11-10 20 13M940 1211l27 12 6 23 16 20 26 21-48 3-33 18-8-19 12-13 17-11-4 18-25 6-18-8-30-17 12 35 17 25 6-20 13-15M940 1211l32-9 15-16-21 10 6 6-5 21 28-19 18 18 20-11 25-9 12-8-28-7-29 4 18-19 0-14 9-20-14-11-28-8M940 1211l11 16-11 13-34 9-13-8-22 13-41-14-3 24-17 13 39-3 29-10-7-10-19-26-22 2 0 10-28 7 8 30M940 1211l5-17-7-5M1381 1054l29 9-32 16 3-25-23 7 5-12-26 6 8 18 10 17-3 20 35-15 36-2-1-9 43 6 45 0-9 15M1381 1054l19-9-14-6-30-13 7 23-25-6-10-21 28 4-18 17-1 12 21 6-13 12-21 11 31 6 23-11-33-6-18 2 10-20-23 2-21-8-1-15-31-2-11 11 16-5 26-4-14-18-17 16 5 6 27 11-16 13-13-12-14-7-27-4-3-5-23-11-16-8 27-2-17-7 25-2 27 0 18 4 0-18-18 14 5 11 13 17-20 2-21 0-12-21-11 10 9 23 14-12 7-20 16-10-2-15 20 1 26-7 11-19 1-5 15-19 13 14 17-2-5-6-25-6-23-8-7 13 15 14 28-5 12-8 22-14 10 2 0-16 30-2-20-15 14 0 9-13-35 3-26-5-11 7-29-2 13-16 5-10 18-6 14 9-37 7M2549 724l-29-26 7-36 32 17 6-22M2549 724l37-21-66-5-21 45 34 16 22 10 13 35-24-6-56 1-22 10 17 17M2549 724l21 12-37 23 11 39 11-29 15-33-2 68-40 29-29 49 33 10 9 31-45 20-76-7-43 12-65-2-51 27-4-34 55 7M1788 899l-13 12 25 18 24 5-1-28-48 5-16 5-8-26-28 5 10 15 26 6 23 12 18 1M1788 899l-19-12 25-8 16-9 6-15 18 4 13-7M1788 899l25-5 10 12 19 6 30-2-19-22 10 0 21-15 28 1-10-14M1820 968l-1 13 9 22 18 15-39 10-40-3-21-10 10-10 7-21 22-1-15-20-1-24 13-11 5 17 22 10-21 1-1-11 37-11 16 4 35 4-6-8-12-15-17 19M1884 1173l-25 6 30 22 20-21 44 16-19 29 7 41M940 909l-10-6-23-2 2-13-4-9-14 8 18 1 30 5-9 10-21-15 25-5-29-4-9-9 3-8 11-9 10 6 12-12-1-9-12-5-9 2 4-9 5 7-3 5-6-3-1 6 1 12 12-7 10 1 16 9 20-2-12 15-2 14 10 12 20 2 3 16 7-13 20 10 33-8-4-10-23-7-20-3-7-19-14-4 12-6-21-11-2-9 21-1-4-7 13 1 20 6 17-2 10-13 10 14 18 9-24 3 11 13-14 4-3-6 6-11-19 6 0 3 13 2 17 2 13-16 10 17 35 1-7 6-11 16 16 5 24-11-10 10-14 1-5-21 29 10 27 15 17 8 11-11 9-14 26 4 3-12 32 5 23-3 14 12-28 3-12-2-23 8-18 7 10 17-9 17M940 909l2-11 22-3-12-10-13 8-5-10-14-14-15 10-21-3 7 11-2 3 18 11 0 21-11-11 11-10-21 1-17 0-11-5 5-10 26 3 20-2M940 909l-16 11-17-19M1423 1390l-50-18-22-12 10-9-14 7-16 9 20-7M1423 1390l26 23 10 29M1423 1390l-21-25 55 19-8 29-46-4-22 16-13-23-3-18-31 0 3-10 36-2-8 12-19 9 22 9 35 7M2521 504l-43 6-12 20-11-13 23-7 18 18-30 2-25 2 12 16-25 6 32 5 26 19-24 20-56 2 14 25 2 24 33-13 7-38-30-10-34 1 10-11-17 11 7 0 8 11-15-11-14 23 16 11-22 7-15 3-13 14-16 6 29-20 21-21-6 18 35 18 14-23 35 11 34-6 38 32M1931 1097l-1-9 25-3M2481 1072l9 25 42 11-74 27-29-51-25-18 33-12-8 30-7 54 36-3 32-38-61-13-43 15 3 20-68 33-36-21M1750 853l24 3 1-5-18-9 0-13-13-8-7-10-6-9-20 6 0 10 11 13-5 12-8-9-11-6-15-4M932 847l10 13-22-1 0 10 22-9 14 9 33 12 11 1 18-15-11-12-8-6-29-7-17-10 15 1 17-8-8-6-13 8 0-9-8 2 2-11-12 6-13 4-9 3-10 4-9-6-5-3 14 0-4-11 14 1 14 4 8 4 0-9 14-3 17-6 19-4 11 2 3-4 5-5 7-8 15-2 1 6-16-4 5-7-18 0 13 7-12-1-15 4-6-5 1-11 0-4-6-8-10-9M932 847l18 0 20-5M1015 1447l-7 16 12 18 23 14-29 9M1749 1203l-6-10 0 11-15-1-10 11-2 16-17 7-27 14 28 14 7 21M1749 1203l-4 6-4 9 18-3 15 13-24 23-25-5 27-25-11-3-8-6-15 2-11 0 9 16-14-2-19-4 0-8 3-6 2-10 12 10-5 9-12-3-12-3 7-8 10-5-11-6-9 7 3 12-8 6-12 1-1 10-18 0 22 10-25 3-27 3-19 5-11 14-41-1 19-12 19-6 3 19-17 13 18 31 42 17-60 35 59 2 34-34-33-3 19-24M1373 844l-19-3 13-10-17-13 18-2 13-9 10 10-8 10-16 4M1373 844l-3 6 15 8 21 17 3-13 19-6 20 15 17-8 15-12 12-9 5 14 26 7 12 8 15-23 9-19 22-7 6 7 8 26 13 15 6 13 16-22-35-6-22-17 8 15M1104 993l-25-9-29-10-16 9-13 8 0-18-22-5-15-10-24-2-2 6-29-1-16 1-17-7-17 1 2-16-13 3-9-13 19-3 1-9 28 4-14 8-15-3 2 5-12 11 1 7 10 6M1104 993l-14-13 25 0-16-15 15-11-25-11-3 10 28 1-7-17-1-12-3-7-26-10 3 17-18-12 15-5 9-9 17 6 42-6-18 20 27 3 7-11-14-3M1104 993l1 13 25 5-36 14-7-10 0 15-32-6-32 0-13-9-20-3 25-10 28 2 0 10-20 10-18 15-16-5-5-14-20 13 16 11 25-5 0 8 9 6 20 0 28 2M1269 759l-12 6-6-11-5 4 1 9 13 3-3-5-11-7-11-1 16-3 24-6 3-2-8-7 3-4 16-7 11-1 14 3-20 5-5-7-19-1 3 8-7 3-14 5 18-4-4-1-8-5 15 2 14 3 2-10-11-5 14-8 7-7M1269 759l15 7 14 3 7-7-1-5-5-6 0-3-14 1-1 3-11 6 11 8 2 4 9 5 13 5 11-4 6-8 7-9 13 5 9-4 5-8-12-2 3-9-18 3-2-3-1 5-14-5-8 2-13-8 6-8 12-7 2 10 1 2-21 3-7 3 20 5 8-11 11-7-12 5M2525 1009l-21-27-45-6-13 24-16 20-53-6-62-6M1476 1029l16-16 40 11 17 5 6-26-26 8 3 13-36 8-20-3M1314 940l17-15-13-4-3 6-24 5-22-18-24-5 7-18 23-1 7 12 21-11-28-1-1-9-9-12-1-10 5-11-24-3 5 13-17 6-8-4 5 16 9 11 13 4M1794 1204l-13 12-8-15-3-12-9 13-2 13-14-6-2-5-10 8-5-9-11-2-6-3-17-10M1651 759l-11 4-16-2 12-4 15 2-11-7 15-7-15-3 3-12-18-2-18 1 6 6-22 2 7 5 15-7 12-7 13-3 5 5-9 12 6 10 0-10 13-6 6-7 15-8 4 7 12-8 12 7 12-7 9 3 12-5 0-8 12 8 2-12 24 1 19-8 11 5 3-11-6-14-19 6 10 10-18 1-3-6 11-5 7-6 12 0 11 6 4-8 8-10 24-10 11 6-7-12-4 6-23-3-1 13 25 4-6 13-1 16 18 6 14 13 19-19 22 7-2 11 18-12 15 0 11 4 25-11-16-12 13-10 3 22 9 21 36 4-24 10 4 12 19-3 1-19M1651 759l9 11-7 14-20-6 16-6 2-13 12 3 2-7 8 6 8 5 5 10-14 6 15 1 15-5 8 6-12 8-11-9M2465 741l-26-34-13-26-55-15-28 27 9-28-9-18 20 6-7-20M2465 741l-54-4-15-22 43-8 40-12 20 48-27 22-7-24M2233 1362l-17-43 30-15 50 27 21 24-7 29M2233 1362l-55-28-49 28-57 0-12-32-28-35 19-34 25-27 8-31 43 15 25-22 30 22 61-15 36-4M2233 1362l36-20 27-11-19-64-31 37-38-22 8 37-38 15-48-27 41-32-67-14M672 973l-6 6 25 9 3 11 27 4 32 1-24 7-8-8-10-12-17 8 9-10 21-8-13 10-8-2-12-1-12 10 15 1 2 12 25-8 17-10 15 11 8-5 22 13 2-6 19-5 2-15 9-15 15-10M672 973l20-7-13-5-4 4-3 8-8-2 2 8 6 11 19-2 3-4-22-11 23-1-3-6-17-1-14 1 3 5 11-6-15-3 19-1 2-4 19-4 11 6 4-14 5 14 16 0 19-3-13-8-6 11 18 7 1-10 8 4 26 9-26 0-9-3-11 3-7-10-6-5 12-6-18-2-9-1-15 0-11 2 11 6 10 8 10-2 4-13 6 8-10 5-9 0-1 2-18 5 19 1 12 7 1 7-25-1 4 9-9-5-28-5-6 6 4-14M2046 1187l-22-3 18-35-23-23-18-15-25-3 15-28 8-14-8-9-14-4-1-12-19 3 15-12-26-5-15 15 26 2 12 3-20 8 8 6-7 5 11 6 11-5 27-1 17 21 14-23-18-17 12-15 30-1-15-8-7-7-10-14 11 0-1 14 19-12-6 13 27-9 27-21-24-2-15-2-8 13-10-12 1-10 11-10 9 9 12 12-9 5 33-3 9-19 8 29 33-11 57 21M1029 799l1 9 4 3 11 6 15-1 7-8 7 7-14 1M1029 799l9-2-9-1 0 3 13 8-8 4-12 9 8-12-20 2 12 10 8 1 4-10M1029 799l-12 0-10-4 0 5-11-7 14-2 15-2-10-3-12 0 7 5 7 8 13 9 12-1 10 4M1173 995l-4-14 18-12-29-1-7 20 18-7-11-13-3-10 32 11 11 5 21-15 17 11-23 7 6-18-17-6-26-4 28-21-32 0-11-17 27 7-1-5-3-16 21 19-17 2M1173 995l19 0-1 11M2488 799l-16-34-21 21 15 23-49-10-12-20-25 11M1503 972l-35-7 15 19-30-12 15-7-5-13-36 2M1503 972l-23-13 21-12 39 16 23-14 17 7 7 10 1 14-8 16M1503 972l25 7 26-10M1652 1409l34 4 22-10 14 31-67 18-48-22-51-23-80 0 29 38M1477 1172l-24 7-24-16M776 940l-16 9-5 7M1477 778l-4 10-11 8-11-13-12 5-16-9 1-11 22-1 1 7-8 14-30 2 19 19M1477 778l-19-7 15-8 11-5 15-9 17-1-6 9-11-8 3-6 14 5 15 0 9 6-14 5-10-11-1-8-5-12-3 6-14-4 9 13 5-9 8 6 16 8-5 11-16-2-4 4 2 11 6 8 8 6M1477 778l15 3 2 13-10-5-7-11-17 3 2 15-4 8-19-2-30-12-16-8 19-3 11 0-14 11-17 5-14-5-9-16-16 12-18-3-14 0-5 6 16 1-13 8M1477 778l15-7 16 1 11 0-5 8-22 1 16-9 12-8-10-7M1477 778l1-8-5-7 15 3-4-8 22 3-7-12-13-6 7-13-22 3-6-5-5 9 11-4 15 10 16 0 13-3 10-14-15 2 9-8-13-4-13-4-16 2-12 14-13 4-14-2-2-7 10-1-8 8 2 7-5 8-21 1-11 3 7-7 4 4 6-11-6-8-6-5-12-9-1 12-7-3-7-7 0 11-16-3 8 13-17-3 9 11-15-3-8-8 7 1 7-1-6 8 9 11 6-8 8-8-15-8-16 5-16-8-5-9-6 0 6-6 0 6 7-8M2525 588l-12-20-3-23-25 4-19-19-13 18 7 11-29 10-3-15M1292 1034l32 3 4-15-2-12-16-6-27 7-22-3-13 7 30 1-17-8 31-10-31-8-2-16-23-4 1-8-18-3 2-4 32-17M1292 1034l15-14-24-9-5 5 29 4 3-16 2-10 27 3 17-9 40-1-36-18-4 19 25 8 4 6-30 12-27 8-21-2 17 17-31 12-29 1-1 22-29 7-20-17 2 17-21-7-13 9-14-15M749 1099l-36-9 3 11-22 3-21-11 40-3 26-14 3-16-26-6-39 8 0-8 14-8 25 8 24-1 2 7 11 19 19 11 7 21-9 9-29-13 1 21 28-8-14 23-14-15M2416 870l-5-23-45 0M864 857l10-3 18 0 18-1-15-10-3 11 7 8-5-1-20-7-13-3 3 6-12 4-13-2 5-6 8 8-16 2 3-4-9-6-8-14 0-3 7-7 1-6 9-5-3-5 11-2 11 0 0 8 2 7 15 0-1-5-16-2 19-4 14-4-5-7 5-9-7-9 13 1-6 8 10 3-15 6 15 3 9-1-4-3-5-5 0 9-10 4 1 2 8 4 1-10 5-4-1-8-14 0-15-1 8-8M864 857l-3 12 2 4-1 9 1 5-18-4-9-3 8-8 19 1-19-2-8-8-6-10 14 0-2-10 21-1-17-5 15 1 2 4 0 5 11 7 9-4-20-8 6-6-9-10 14-5 3-6-19-4 2-2 11-4-1-10 6-1-4-6M864 857l13 9-3-12M1245 1419l38 14-24 19 28-6 29-2 2 15-20-3-39-4-8 24-17-8M764 1417l33-19 23 27 12-24 8-26 51-6 16 16-23 5-44-15-31 10-45-9 19-19 0-24 45-12 31-16-16-11 47 5-31 6M1447 1228l16-18 16 5 13 4 17-6 5-15-5-17 28-11 6 10 30-8 4 20M2122 1128l14-24 14-33 63-1-45-18-48-26-28-15-20-3-20-12-14 0 4-12-10-4-15 7 8 5 7-12 11-6-4-6-25-9 16-8 9-11 17 5 7-11-5-6 16 0 8-9 3 9 6 9-11 4 17 5-4 11-1 8 16 3-15-11 9-7-5-4 13-6-19-3M2122 1128l-27 24-53-3M863 842l-13 8-6 3M731 1336l-9 18 7 25 12 22-5 15M731 1336l25 27 27-30M731 1336l-33 7-8-17-22-21M702 942l-6-3-14-3-7 2 1 9-11-1 10-8-3-5 10 3 0 6-6 5 1 5 4 5 8-10-13 0-11 6 14 8 12 0 9-8M1789 837l34 8-4-12 19 2-1 10-3 14-24 11 3 24 19-10 3 17-12 5M1789 837l-2 10-12 4 12 0 29 4 7-10 15-10 4-9-9 0 2-14 14-7 0-9 4-8 5 13-9 4-15-2-2-11 17 4 9 5 7 10 24-5 12 7-18 17 18 1 0-18 1-12-13 5-1-6-23 11 6 10 18-15M691 1214l-26-9 16-11 27-11 14-16-8-18 23 6-15 12M691 1214l-25 8 33 11 8-15 13 25-16 2-25 26-16-19 36-19M2217 673l38 0 7-11 11 21-18-10-23-16-15 16 12 13-9 12 7 8-9 9-17 3-10-14 23 2 13 0 3 11 5 7 10-5-15-2-12-2-3 10-16 7 11-1 2 8 2 9-12 0-7-4 4-12-10 8-13-16-2-11-20-11 3 17 19 5-29 5 10-10-32 5 9-21M2217 673l-13 8-16 15-3-20-13 18-17-5-1-14 3-15-14-19-12 9-23 2 7 20 25 18 14-15 31 1 0-13-6-22 17 6 28-4 8 14 30 5 0-38-14 26-24-7M2217 673l24 12 14-12M2217 673l-14-8 29-8 16-7 14 12M1021 991l-26-4 1 8-29 1 1 20-4 17-29-14 33-3 22-4 6-17M1021 991l17 6-23 5M720 900l-5 4 9 4 16 0 4 9M720 900l-11-2-16 0-1 3-15-3-18 0 6-11 6-5-13-4M720 900l8 2-4 6-13 4 13 5 6 3-13 6 9 11-2 9-7-9-2 8M720 900l3-7 6-6M744 1487l-20-28-2-9M1302 1094l10 14 18-4 14 21 40 2M1302 1094l2-23-27-9M1302 1094l-29 13 9 4 30-3 4 20 28-3 8-15 38 3-3-18-9-16-20-18M867 1435l18 30 9-31 38 10-18-20-39-11-43-12-35-3-27-6-29 9M867 1435l-20-12-27 2 21 11-56 1 38 26-9 23M1864 1021l6 26 26-20 15 7 8 22M2129 1362l-5 31-42-6-2 51 60 8M2129 1362l-39-12 40-43 29-2 49-23-37-7 44-33 28-39 26-28-21-36-44-13-6-33-62 11 31 23 37-1 31-9M2129 1362l51 16 83 2 3 33-49 5 46-38 54-25 29 29-36 53 58-46 63 18 84 2 10-30M1928 902l6 19 14 13M1928 902l22 4-6-30M2206 845l-25 12 8 8-5 3-11 15-8-17 19 2-3-11-10-15 10-5 0 20-16 9-16-3-21-3 3-6 18 1 0 8-6 11-7 2 7 10-13-2-10-1 3 5-5 7 4 14-16-1-9-5-6 8-6-8-8 7-10-1-1 11 8 8 11 0 14-7 17 6 11 4 16 14 34-15 40-5-20 12-1 32-49-2-4-22-26 8-9 15 39-1 31-12-1-25-16-14-22-2 15 15 23 1 13-23-24-5 7-19-20-2 12-15-22 8 10 7-10 5 1 11-22 12 17 5-12 17 27-2M1277 1489l21-10 13-9M1277 1489l-24-3 24 20M1919 693l-17 4 2-13-20-7-19-1-23 8 23 9-24 7-7-12 8-4-14-9-13 2-15-11M1289 728l0-6 11 5 1-8 14-3-16-4-7 3-20 2-6-7-5 5 11 2-2 10-10-2-16-7 9-7 8 4-3 4-14-1 7-9M905 879l2-15 13-5 2-13 9-8 13-4 9-2 11-5 21-2 9-5 5-7-14-9 4-6 7-5 0-9-23 8-12 0 1 1-2 10 15 4 10-3 8-1 3-10-23-1 1-9 0-1 21-1 6-12 8 2 10-5 8 5 10-6 10-11 2 9 11 13 14 2-11 8 21 0 20 7 22-4 8-8 12 1-12-4 21-1-4 10-25 2-16-8M1242 1300l24-5-5-27 23-6-28-17M1007 855l-3 2-11 6-2-10-23 1-18-7-19-9-15 0 6 8-13-5 7-3M1007 855l5-15 18 9 13 5M2058 928l-30 1-14 4-12 8-28 1M2058 928l-6-15 15-4-23-4-17-21-17 17-9 16-31-6 6 11-42-1 36-10-20-5 25-9 16-16-27-12 18-7 26-11-16-23-12-12 13-9 19 13 33 18-18 16-22 11 26 6-4 13-36-3-9-19M2099 687l-17 2-11-15 27-12 17 10-15 2-2-12-10-5-26 8-30-1-13-18 15-14 1-15 18 10-19 5-19-7 20-8 29-4-14-6 18-15-21-11M1890 1082l-11-17-7 21 13 15 5-19M1380 1265l-3-22-2-14 24 7 36 6 2 19 25-15 9-5-15-9 23 0 0-17-2-17 4-15 16-15-19-10-23 2-6-23-20-20-39-4M1462 1246l24-2 9 2 21-2-11-6-10 8-3 11-17 14 12 14 59 20 9-27 22-7 26-11-1-14 4-12 23 9 11 11-27 0-11-8-9-8 13-4 8-3-7-6 11-5 5 7-9 4 8 2 7 10 3-13 11-3-2-7-11-2-15-6-7-2-15 5 15 0-8 5-5 4-14-2-4 3-7 8-4-1-9-6-2 9-9 5-13-2-3-8-11-7 8-5 12 6-9 6-18 1 7-8-10-10 21-9 18 2 8 1 15 6 10-6 8 3-3-11-10 5-20 3-2 10 3 9 8-2 1 8-11 3-4-10 6 1M716 1054l-12 17-27-9 14-16-26-16 17-14 14-5 33 0 3 17-27 5-14 13-35-9 21 17-19 6 19 2-15 20 11 11-19 13 28 14 32-1-20-15 19-14-9-19-31 22M716 1054l6 14 17 8M716 1054l5-12-30 4-2-16-24 0M1395 901l21-10 8 14M2049 708l6-11 16-23M1381 1425l-23-6-15 19-27 6-16-10-9-12 31 0 5-13 9 6 7 23-21-16-16-10-25-7-4-20-18 20-53-4-1 11M936 1049l-18-12 25-1 21 4 7 16 18 10 14 7-21 7-5 14-3-16-3-22M2026 569l-7-16M821 1060l-16 15-23-6 18 18-28 3 30 16-23 5 7 12 31-2 19-3 3-16 18-8 14-7 10 24-25 0 1-17-24-2 6-10-22-2 4-20-17-3 6-11-14-17-13 2-1 11 11 15 12 18-5 12 2 19-16 17-16-3 9 14 24 3-4 16-14-1 18-15 14-16 9 16 12 1-17 17 6 15-3 23 21 17-15 20-37 10-18 27-43-2 33 16-3 25 27-8-21 15-33-4 27-3-17-11-13-30 19-14-2-17 24-12-17-2M821 1060l7-11-18-3M821 1060l20 2 3-16 23-5 1 14 8 0 19 0 32 20-7-23 26 7 28 19-27 10M2556 400l-13-1-20 8M1250 1182l29 6-4 19-37-9 12-16-27-13-28-18 29-2-27-10-20-16-11 21 0 15 34 11 24 11-14 10-15-17 5-4 23-1 1 12 14 17-3 5M1250 1182l28-16 9-17 12 13 20 3 34-4-15 15 5 21 27 7 24-7-12 15 17 24 5 16-5 13 2 21-2 18-16 6-5-22-32-14-18-18 19-13 30 0 27 9 33 9 25 0M1534 1383l76 12-55-34-50-21-57 2-7-32-23 9-5 19 35 4-46 23-10-17-9 8-22-5 12 21 10-16 19 9-29 7M2430 1020l-46 30 20 16-50 5-11-37 34-20-19-21 40-9 22-48 4 48-26 0-21-36 0-42 43 30-22-32-16-29 29-28 22-7-50-17-29 0-18-16-16 15-45 5-6 30 30-20-24-10-6-30 14-18 15-28 55-12 7 29-39-4M1409 690l-7 8-6 6-15 11 15-2 6-1-6-8-27 4 12 7-16 8-7-3-8-4-6 7-2 10-11 1-16-2 0 9-3 7-8 9 18-1 7-10M886 1157l-2-13-22-8-12-11-12 13 22 16 26 3 12-9 19-14-28-2-27 4-2 18 13 24 24-4 18 24 30-4 20-21-11-22 19-4-24-3 5 7-31-2 4 20-30 5-27 12 5 17 24 0-2-29M2343 693l-7-24-23-4 5 18-13-1-8 22-15-10 23-12 13 17-10 15-11-10-25-3-20 1 5 12 7 11 2 12-12 5-12 13-12 5 8-9-6-8 1-7-14-3-7 6 7 0 13 4 10-2-9-5 10-3-1 8 12 1-16 9 4 4 22-3 0 14 26-17-24-12-2 15-10-10-5-7 17 2 12-13 12 25 8 2-34 15-28 24 47-11 29 4 24 24M1546 905l22-7 19 10-24 10 32 14 8-19-16-5M2127 1218l-16-30-27 15-52 11-27-13-27-27 32-15 14 25-19 17-71 24-13-29-12-16 9-28-12-12-2-12-17-10-11 6-19-2 10-10 20 6 19-2-2 12-15 6-13-10-9-12-6-3 24-8 14 5M1232 822l-9-16-9-7 12-10 21-4 7 9-4 11 6 11 9 8 12 5-6 13 26-4M1232 822l-19-3 10-13 14-11 17-1 11-3 11-11-2 10 11-1 3 7 11 4-17 5 13 1-19 6-20 4-12-6-12 12-1 2-18-5-24-2-3-10-11 0 3-14 3-11 9-4 8-4-12-10-3 7 7 7-17 0 10-7 15 3 6-11 12 0 2-5-14 5-18 1-12 1-1-6-7-6 7-5 6-8-2-7-20-3-5-3-14 5-6-5-7 1-10 5 4-11-10-3 10-4 0 7-19 1M1232 822l15-1 9-5-10-2-14 8M1759 784l-4-15 17-1 3-13 8-7-5-5 9-8 3 4-7 9 12 4 5 6 18 5 17-10 15-8-13-12-5 11M1759 784l-11-8-3 7M2210 1474l-48 27 91-3-7-40-36 16M1457 883l-30-11-18-10M1303 1336l21 16 20-6 13-5 8-7 29 0 24-15-6-12-13-3 0 6 19 9M1708 1403l52-42-6 45 65-18 14 9-33 24-46-15-3 36 62 5M2060 894l-15-13-18 3M2060 894l-2-20 12-15 13-3 7 8-20-5-26 10-13 2-4-17-19-3 5-16 14 19 17 15 14-22 12 12 10 18 13-4 24-8 11-5 21-5 4-6-13-3-13 0-7 12 11-4M2501 480l-22 10 13 5-14 15-20-8M1717 843l21 4 19-5 13-7 11-13 14 3 24 8-7-11-17 3 15-7-17-12-1-13 2-14-18 8 4-13M1717 843l-1 12-16 3-9-11-5-5-18 3-2-13-21-12-18 16-40-7 9-6 31 13M1717 843l13-5 9-3-17-4-24-3-12 14 11 0 20 1M1071 1449l-30 11 3-35-43 7 20-29M1071 1449l48-9-10 21-40 4 2-16 25-21-52-3M1035 928l-18 3 14 18-16 15-16 4-6 5 28 0 13 10 13 0 3-9-13-5-6-20 10-4 25 9-8 10-27-15-24 2-8 17M1035 928l6-17-27-1-13 7-14-4 0 16 8 9-24-6-16 7-4-15 20 8 16-3 27-9 3 11-22 7 5 10 17-17-30-2-21-6 21-10M2014 933l2-12 2-15M1718 687l3 7 12 6-13 7 3 8 12-5-15-3-5-9 6-4 18-4-21-3-8 7 11 0M1718 687l-8-2 0 9 5 4 18 2 6-10 6-3 13 5-2-12 14 10-12 2 3 4-12 10 6 5 1 9 13 5 10-11 2 8 10 2 13-1 16 4 29-2 10 10 23 12 17-18-2-13 17-9-12-10-10 3-12-3 7-6 17-7 10-14 17 15 18 3-19 18M1718 687l18-5 3 8 7 6 12-4M2212 739l-17 5 3 12-2 4-6-1 12 11 11-3 8-12-7-7 14 3 4-8-11 2-9-6M2240 831l1-14-16-1M1389 1327l5 7-2 14 21-10-19-4M1389 1327l10-17-16 0-20-11 15-11-31 3-37 11 41 7M2173 883l-19 7-1-9M2173 883l17 1 35-8M1516 1244l4 5 6-8-10 3-11 8-10-6 3 11-6 0 13 12-30 2-27-5 14 18 25 27 0-26-25-1-21 26 46 1 18 29M1516 1244l1-6-12 0 3-6 9 6 9 3 7-3 7-6-1-8 12 1-11 7 9 3-3 5-12 5 16 7-20 2 1 10-26 5-18 16 46-7 13 27M1931 582l24 8-6 14 17-7-11-7-3-11-21 3-16 11 24 4-8-15M1216 763l-1 9-17 2 8 6-16-2 0 11-9-7-8-4-9 3-3-13 12-9 4 0 9 5 8-9 10 8 3 5 9-5 12 0-10-5-1-10 0-3 20 0-20-4 7-9-9-1-12 4 14 6M1216 763l13 4-8 13-2 4 7 5-5-9-6-8-9 8 15 0 19 0 7 5 6-6 12 12-18-6-10 10-23 4-18-2-6-8-12 4-8 13 5 1-10 23 2 2 27 13 18-4-12 18 4 13-19-6 15-7 25 1 25-2-23-9-15-8-3-14 4-8-16 10 12-2 0 12 3 2 22-4-25-10 22-3 3 13 11 8 26-3-13-12 7-6 11-12 6-7 6-9 13-8 10 13 2 16 18 2 10 7 13 15-25 0 18 7-8 11-17-6-22-4M1163 1086l19-5 9 7 25-9 18 0 13 4 34 0-18-11-24-9 11-20-9-9 7-19-21-1-11-10-8 9 19 1 14 20-18 5-9 23-8-16-29 3-1-16-20-11-25 13-13 10-23-5-25 7M1602 1246l-15-5-4 10 20 9-31 5M1568 792l9 5 15-3 5-3-5-10 21-3-16 13-19-4 14-6 3-8-12-8 21 1-9 7 18 5-4 18-12-5M1568 792l-12 15 4 9 21 6 15 1 33-4M1041 1239l2 16-19 10 27 14-36 8 18 11 19 18 27 4 16-16 34 9-3 19 24 20-52-3-4 24 21 3 35-24 44 0-10-14 3-32 18-31-41 6-30-7-21-16-3 14-24-6 27-8 15-5 2-13M1041 1239l-37 3-31 4 32 13 19 6M1041 1239l-29-4 1-13-25 8-15 16-22-19-30 2-15 20-28 15M2143 945l-15-3-1-11-4-13-1-9-8 11-15 1-3-4-14 2 9-8 15-3 8 12 2 7-13 6-18-5-5 13-6-13-11 6-24 6-11-11 24-16 14 7 11-10 5 9M753 844l9-4 11 3 10-4-1 7-1 8-8-11M2060 1330l15-51-24-18M2060 1330l-40 36-71 10 2 34-55-28 53-6-26-19 7-36-50 20 16 41-15 23 70 5 39-4-11 51-47 38-5-47 24-38 28 47 60 8 21 39-79-8-49-1M2060 1330l30 20-18 12 10 25-62-21-39-32-58 23-27 25M1118 1069l-13 14-15-12-9 15-25-1-18-15 0-11-18 8-26-8-14-15-16-4 0-7M910 835l-7-4 11-5 0-9 10 5 5-8-5-7-3 3-11-4 8-10 6 11 10-4 1-5 9-1 2 9 10-7 6-6 15 4-4-5-11 1-15 1 14-2-13-5 10-6 16 1 15-6-17-6 2-11 10-6 5 1 1-10-6 9-18 1M991 1436l10-4-32-13-18-31 27-20 8 22M991 1436l17 27 33-3 32 23 4 28M2510 545l22-16 41 25-33-1 32 35-19 27-23 9-41 6M677 898l-10-5-2-6M1937 657l-7-7 24-6-9 14 37-8 8-4 29 0 3 21-28 3-18-6 23-11-17-3-15-9-13 3-5-9-7 6-1-13-21 2 5-13-19-2 14 15-25-4 16 7-26 2 11 12 22 11-4 12-13-13-22 2-21 4 7-17-14 5-6-15 20 10 20-11-19-1-1 12 13 7-20 10 7 13 14-17 5 18 3 14 5 9 5 16-24 3M1933 720l9 22-23-5 9 12-17-2-3 15 28 3M1933 720l23 10 10 11 14-9 14 17 8-15-12-14 7-18M1933 720l-25 10 11 7M1964 869l-17-21 21-1M1297 912l21-7 28-3 35-1-12-10-2-10-24 5 10-18-32-3-15-1-18 2-7-6-17-1-14-1M999 1173l9 13 23-14M2451 786l-46-7-20-37-28-26-49-2-12 10M2030 951l-28-10-26-19M2030 951l13-2 11 15 2-9 7 6 0 12-20 1 17 9-18 1-17 8 13 4-5 6 18 2 1-8 14-6 6 18 1 12 47 6 47-13 1 39 26-10-27-29-18-27 47-17 37-18-16-26-8-29-19 11 0-23-1-19M2062 1127l33 25 49 16 8 28-41-8 33-20M1555 721l-9 10 7 10-7 7-15 0 0-13 22 6 12-11 9-9 4 6-13 3-19 1-1-9-4-10-6-4-14-7 12-3 2-9 15 7 9 1 14 2 20 0 12 0 9 5 11 8-17 1 9 6 11-2-3-5M1512 1061l33 6-28 13-7 10-25-13-17-14-3 27M1512 1061l-15-6-17 2 16-25-4-19-15 3 2-21 4-11 16 4-20 7-20-8-34-4 1 12M1550 1252l10-13-14 1M1184 1338l-31-5-24-20-50 7 47 12-28 17-19-29-14 17-13-21 13-12 30 0-30-10-14-15 35-13 3-22 24-20 23-1 25-6 28-4 0 21 21 26 12-26 15-8M1629 690l-18-2 2-5 15-1-12-5 11-8 2 1 16 6M1629 690l-10 8-14 1-7 5-10 7-1 2-3-5-8 6-7-4-12 5M1629 690l12-4 9 1 9 14-15-1M2318 1478l76-14-28-19M1166 1144l-7-12-28-3 7 23 28-8M943 775l10 1 5 5 13-8 18 3 12-7-11-4-16-6M1904 684l-8-14 5-13-23-4 18-6 21-6-6-8M1712 1186l15-1 5-10 14 6-12 6 9 6-13 1-2 9M1847 657l1 14 10-8M1847 657l-14-12 18 6M910 853l0 6 10 0M1176 1174l-29-9-19-5-36-2-24 16 19 12 12-20-7-8-29-22 41 6 34 10-10 8 5 16-16 6-6-12 17-10M1176 1174l-3 21 37-4 28 7 41-10-1-22-24 1-31 2 29-13-14-14-20-12-20-15-21 8-18 9-21 20 28 7-19 6 0 26 26 4 22-21M1726 974l-31 22-8-16M1726 974l44-11-24-7-19-24-17-11-28-6 5-14 8-11 15-22-16 1M1014 910l4-17 25-1 20-3 18 4-20 5 1 15-15-11 14-4 25 1-5-6 24 0-5-13-18-12 1-11-23-1 8 13 15-12 28 7-29 4-7 12 6 13 7-10 12-3M1658 1173l10 11 19-1-15 7-11 8-4 10 11-7-7-3-15-1-9 3 1 11-18-4M2099 987l-18-15 11-7-8-8 9 0-14-6-8-5-1 10-14-1 0-10 15 1-8-12 17 7-1 10 5 6-21 4 18 11-6 13M1186 1385l20 16-27 2M1282 1111l3 18 2 20 41 3 8-9M2106 717l5 18-14 5-21 18 13 17-13 21-33-14-12-8 17-6 28-10M2106 717l-5-14 20-12M2106 717l19 7-14 11 7 13 30 2-14 16-15 13-30-4-25 4-21 3-19 10 33 13 19-9M2106 717l-16 10 21 8 22 6 15 9 7-4 20 12 2-16-1-18M1814 1050l19 6-21 19 47-5 2-18-20-19-34-5-11 13 18 9M2030 598l-10-23-20 8 1-14-17-8-4 10 5 14-19 12 13 13 6 10-26-6-10-10-10-7 16-7 13-6 17 1 15-2 11 11-1 13 20-9 16-6 22 0 4 12-8 9-11 14 17 11-19 7 25 3 14 1 5-15-10-9 24-1 11-15 8-11 6-15 9 5 2 15-11 10-1 15-13 11-11-15M2532 1108l36-6-7-34-55 1-31-56-38 41-53-4-30 21-29-5 18-32 41 16-7-36 21-30M840 1375l-22-2-1-29 48 4 26 21 5-32-31 11-31-13 25-2-31-12-39-23M1165 1381l29-29 31 0 44-5 1-26-4-26 22 20M1372 954l-11-22-17 20-13 17 29 0 23-7-11-8M1483 818l-5 17 14-13 0 9 13-6 12 16 20 4-25 2 18 10M1483 818l-18 6-21-6-3-1 22-6 22-6 2-4-3-12-11-1-13-7-9 2-4-9-24 5M764 1376l-8-13-27 16 41 13 39-7 23 16 52-11-9 23-28 10-15-22M1889 1201l-40-12-24-1 19-5-15-7 7-2-8-4 1 6-7-3-7 9-4-12-8-5-15-4-13 10 1-19-3-21-18-18-6-19M1223 806l-18 7-16 4-24 13 32-1 12 10-15 6-18 3-26-6-8-17M1223 806l21 4 6-5-13-10-11-6 14-9 13-1 16-5 13 2M1223 806l-14 0 5-7 0-7-24-3 16-9 13 4-5 8 12-3M2579 1362l-18-78 6-38-43-37-35 18-39 27-53 13M2579 1362l-18 40-46 9-28-39M1815 1182l-12-1-1-7-10-3-4-10 5-13-17 4 12 9 22-8 6-13M1298 964l-15-3 1-16M1298 964l12 7 17-17 4 15-2 11 10 17 1 3 16-12-10-7 14-12M702 1401l0-25-47-5 21 43-11 18 22 20 37 7-35 25-36 8 58 6M2499 882l-45 4-21-46 33-31M2499 882l50-31-21-18 16-35M1254 794l14 5-18 6 16 2-10 9M1773 1131l-30 1-18 19-37 9-19-14 2-21-32-7-29 6-25 5 23 4M1630 1052l4 9-21 19-13 27 10 17M1630 1052l-33 3-8-14-18-16 0-9-22 13-3 19-27-4 30-15 27 19 19 20-10 4 28 8M2479 1467l-29-13-56 10-22 29-75 6-44-1M2227 1033l-14 37-15 23M1921 1196l-24 31 15 27 22-29 49 20M2405 1179l-56-11-53-9-27 16 52 20-12 44-32 28-69 15M1203 1099l17-9-29-2M753 1004l6 11 24 16-28-1 11 14-26 9 15-23-23-2-3 5-24 0-8-13-15-4-24-10 26 1 10-8M2214 748l-5 10 4 9-17-7 6 10-1 17-10-12-1-16-11 13 12 3 11-5 12 13 15 1 23-23 12 5M2214 748l7-3-2-6 0-6-9-2 5-6 4 8 11-2 3 5-14 3M2533 759l-61 6-61-28-26 5-25 26 45 11 6-42 28-30M1037 776l6-4 17 4 3-12-14-1 3-4-5-5 14 2-8-11 14 1 23 2-9 5-2 5-18-2 2 8-11-5 9-3 20-3 16 2 8-1 16 2 3 6-12-2M1037 776l12 8-11-2 0 7 0 8 4 10 3 10-15 4 5 9-12 6 20 0M1037 776l-5-3-5-2M887 1021l10-13 17-5 23-1-3-10 13-4 8-7-30 1 1-6 29 5 6 6 6 9 28-9 26-14-6-9 22 5-3 14 4 14 24 0 23 4-6-17-4-23 24 4-13-12M887 1021l22-8 5-10 15 14-11 8-9-12-12-5M887 1021l-21 1-10-5M914 1424l0-16-7-23M1949 604l-15 9-9 4 16 11 18-14 20-4 25 9 31-2-25-10-6 12-19 1 1 12 4 14 9 7 20-7-11-11 26-3 17 13 2-18 32-2-21-12 34 5-7-16-19 2 10-13-5-15 14-6-1 16-13-10-30-7M1949 604l-5 10 15 0 7-17 29 6-10-18M2561 1284l-40 16-54-12-17-34M859 1470l26-5-19 16M1402 848l25-3-7-9-20-10 14-10 27 1-13 10-28-1-17 1M869 902l0-8-6-7 12-10 16 10M869 902l-10 12 20 4 14 12 9 19 24-4 10-10 19 4-7 10 12 7 19-5 16-13-27 6-8 12-22 0-12-11 22 4 20-5-13-5-15 1-14 5-7-9-12-14 23 6 21-4-15 11-17 1-17 13-21-9-1-8 13-2 26 6 11-8 6 7 4 5 8 9-10 7 20 6 26-4 16-10-21 3 5 7 9 15 2 14-18-7-22 1 8-9-5-10-32 14 3-15-19 3 3-2 4-8 9-9M869 902l13 12 25 8 17-2 27 4 15-1-3-16 21-10-1-11-29-3-20 0 11-14-25 0-13-5-8-2 11-3-3 5-11 6-12 6-7-10 19 4-2-9-2-7-9-4 12-7 14-2-6-10-8 12-5-9-15-8 13 0 2 8-4 3 9 6M2164 1241l7 34-12 30 57 14 53 23-23-38M2479 695l41 3 39-19M1000 882l-1 7-16-3 6-5-10-22M1000 882l23-3 16-7 14-8-7-4-28 7 21 5M1221 894l-2-13 11-5M808 886l-14-4 6-10 18-1-17-4-11-1 14-2M1532 1024l-31-17 28-11 0 15-28-4-22-12-38 7-15 12-23-23-7-4-15 9 22-5 22-8 28-11 10-20-12-12 13-23 28-5 21 9 15-17-29-5-7 13 3 10-8 19-24 11 17 7-12 6M2496 943l6-24 30-27 31-3-4 39-18-5 22-34 5-52 0-33M2496 943l27 23 36-38 3 77-9-26-30-13 18-43-39-4M2496 943l8 39 49-3M2012 1047l-5-11 6-10 11 6 10 14-4 18 20 7M2012 1047l-12-2-9 12-20 5 6-9 23-8 8 10-9 11 31-2-22-9M888 1088l0-12 4-4-14-8 17-9M2338 1111l-17 41 28 16-28 27 35-7M2338 1111l48-12 18-33M1236 970l5 19-28-12-21 18 24 9 4-10 23 10M1236 970l20-10-1-6-18 8 19-2 3 14 28 9 25 11 17-14-19-9-23 12-4-22-28-7-34 1-19-2-4 21 15 3 7 17 21-5 18-15 24-13 16-2 11 12 2 23-20 4-9 13M1573 699l6-12-1-11 8-3 16-2-3 6-13-4 16-4 10-5-1 11 2 8M1573 699l17-5 3 5 5 5 16 0-6 9-6 5 13 4 2-3 10 3 9-6-8 1-1 5-2 6-10-6-8 7-12 0 18 6 6 9-1 6 18 7-18 0-10 2-16-3M1573 699l-10-12-9-2 13-2 11-7-12 0-12 9-5-6-16-1 2-8 4-3 14-2 11 5 3-10-14 5-4 5-14 0-14-2 12 10-11 5-11 5-15-10-14 0-14 7 1 9-8 3-16-9-10-4-6-10 9 4 1-6 9 4-10 2 7 10-10 2-6 6M1573 699l1 3-16 5 11 3 5-8 19-3 11-8 1 8M1573 699l-14 1-9-4 4-4 0-7-12-2-9-5 2 11-13-6-6 6-5-1-22-2 7-8 3-4 4-5-14-1-10 2 8-9 2 7 10-7 4 8 10 6 8-7-4-3-14 4M817 1121l-4-12 26-7 17 9-20 7 14 7 30 0 29-15 25 18M817 1121l19 7 2 10M2420 625l-27-18 0 16M1157 853l-7-11-14-1-9-7-5-11M2026 693l29 4-14-15-9-18 15-10 4-9-13 1-19 0M2460 559l25-10 11-21 36 1 8 24-27 15-27 10-55-9-23 9 24 10-26 12-13 7-2-18M2424 984l22 16 29 13 58 27 28 28M2523 437l28-17 12 13-40 4-18-7M2523 437l-27 11 17 5 10-16M2310 1437l-17 3-27-27-20 45-29-40-37-40-2-44-19-29M845 1210l0-16-21-1-22 21-9 26-20-18-2-16-15-14-21-17 2-20 19-12 29 9-6-18-23 9M1396 987l8-9 8-20-29 4 13 25M1205 1275l-30-15 35 0 4 13-9 2-37 16-4-10 11-21-41 14-24-2-24 9 9 23 41-10-7 19 24-4 34-3 34-9 18-12-25-12 7 24M1810 792l4 7-21 7 19 0 9 10M2039 1465l-58 31 42 3M793 987l-18-7 14-11-10-15 25-4-4-7 1-13 10-3-3-9M793 987l2-8 20-8M1542 1486l51-21 14-35 3-35 68-16-64-16-4 32M1542 1486l-26 25M1655 1452l31-39 36 21 9 47 27-9-7-30-29-8M1116 1408l-20 20 47-8 8 27 36 23M1843 764l-11 2-14-3-14-13-4 8-13 11 7 10 21 6 22-11-1 10-21 1-13-13-8 7M1843 764l8 7 2 17 18 2 12-7-16-19 16-4 5 6-5 17 5 17-30 1 13-11 17 10 14 1 0-16-14-19 20-4 4 13 35 4-29 6-6-10-10 10 16 0 0 15 17 3-12 13 29 15 24-7 16 4 20-8 25-11-22-1-3 12 1 15M1843 764l15-7 9 7-16 7-14 3-5-8 3-13-31-3-14-11-12 4-3 2-15-3M1347 1358l-23-6-12-17M1506 716l3-10 12-5-16-6 6-7-18 4-4-6-7-8-18 3 4 4-12-3-11 6-1 9-7 3 10 5 2-3 16 0-4-5 7-12 12 2 2-9-4-3 1-5-6-4-10 2 15 7-14 6-8 1-18-4-3 6-17-5 7 8-14 6-9 5 12 6-12 8 15-3 12 3-8 7-7 8 14 4 10-1 15-2-7-6 6-4-5-13-8 10-3 8-8 2-14 2-17 5-2-7 13-3-6-10 8 4 7-7 4 10-13 3-11 10 13 10 10-7 8-4 3 6-17 9 7 11 14-12 6 7 18 2-4-9 5-8-10 8-15 0-4-8 7-7-10-5 0 6M1506 716l-15 1 2 13-16-16 14 3 2-5 16-6 15 4-5 10 6 6 10 0 10-4-15-8 11-2 4-7 5-9-12 1-3-8 19 3 5 5 4-10 16 0-12-4-4 4-9 5-12-9 7-4 17-3-2-6 5 0-2-10M1506 716l-6 7 10 5M2188 696l20-3 21-7-25-5-19-5-30 13-15 1 14 12 1-13M2148 750l10 10 6 8-30-2-27-8-18 17 8 19M1990 1406l32 27 58 5 44-45 56-15M1990 1406l30-40 52-4M1318 1459l-21 5-46 12 47 3 8 5 22 3 10 9M1318 1459l19 2 6-23-20-1-7 7-18 12-11-10 13-12 22-12 14-7 12-11-2-11-12-9-4 14-3 11-10-16 17-9-8-6 11-4-6-7-17 5-8 4-10-7M1739 835l-9-16 14 2 9-12-10-14M2548 456l15-23M2548 456l-24 12-11-15 35 3M1013 1222l26-2-6-9-38-7-8-18 26 5 20 20M1548 1206l8-7-24-2-2 7-3 14 18 0 3-12M1106 925l9 7 12-13-24-1 0-13 2-12 11-8M1106 925l-21 10-19 0M1011 753l4 5 7-7 4 4 12-3-10-9 19-2-2 5 2 8M1011 753l-14 0-8 1M1011 753l-4 7 2 11 1 6 5 9 9-1 14-3M1654 1240l6-10-9-10 16 5 16-1M957 1450l-25-6 5-20-2-22 34 17-32 5-23-16 21-6M1327 1409l-26-4 5 7M1244 718l-15 4-10-6-1 7-12 7-3 5-6 8-3-3-15 0 11-9-13 2 2-2 2-8-7-4-15-4-15 0-13-2-12 2 10 5 15-5 5 6 10-6 0 7 15-3 10-5 8-4 13 5-10 3-3-8M1244 718l-8 12 13 4 11-9 12-8 3-5 17 3 9 4-2-7M1298 769l-9-11-16 0M1298 769l12 6-15 0 3 9 3 4-11-5-5 6M1480 1057l-12 6-18-9-35 4 5-23-20 10 10 18 31 2-19 19-35 11M1440 1214l23-4 6-14-32 5-25 0 29-12 12-10 28 4M1608 1215l7 4 3 1M1999 757l26-14 22-8M998 826l0 8-9-2 10 17-8 4 13 4-5-8-1-15 20-2 4-12-12 1-12 5M1013 1089l-9 4-27 1M1013 1089l16 5 27-9M1854 1148l0-10-15 11M1555 1003l3-21-29 14-1-17-29 9 2 19-9 6-13-18M804 842l2 10 3 7 9 12 8-4 1 0 7 4 2 9-20-5-16-3 15 6 6 6 7 4 9 3-2 11 12-3 11-2-21-6 10 8-1 18-7 12 17-10 22 8M804 842l7-6 11 3 20 4 4-6 2-7 12-4 1 12-13-8-18-7-22-2 21 8-24-1-7 5-3 3-7-7 10 4-3-10 10 5 17 8-11 0-13-3M804 842l12 5 6-8 16-5 8 3M804 842l-9 0-6 10 1 14 10 6M1073 1483l-4-18-28-5M1073 1483l-30 12M1275 1207l27-22 17 11M1592 781l-9-1 0-15-16 8-1 11 17-4-5 7 14 7 17 2 3 11-16 16-20-12-16 5-26-9-6-6 19-7 0-8 2-9-9-9 0-14 16 10-16 4-14-9-6 5-1 8 21-4-20-4-14-3-18 5 4 5 0 10-8 8-13 7-9 0M1369 774l-4-11 7-5-7-14 0 0M1381 726l4 3-12 7 24 1 6 12 18 8 20-5-13 11-4 5-7-5-18 4-16 10 2-12-20-2-6-11M1140 940l-14 9 18 4 11 5 21-9M1927 1448l52 9 43-24M1927 1448l-46-43M783 1012l13 17 6-6 3-15-22 4-24 3-30-4-32 9 35 8 27-13 2-16 17-10-3-9-12-11-20 0-20 5-24 6 12-13 13-3 12-5M1210 1260l34 6-5 19 27 10 20-17 24 24 4-25 14-21-1-21M2163 644l-14-13-6 10-23-2 11 11M2163 644l16-16 18 5 9-16 23 9 19 24M1094 1373l-41 7-23-12 8-17 28 17 28 5 4 14-19 11 17 30 23 12 24-20M952 1343l-8-15-10-20 17-25 16 7 22-24 16-7 38-4 23 2 20 9 0 15-21 13 0 10 14 16M952 1343l-33 14 6-12 19-17 31-6M952 1343l26 25 15 8 37-8 36 0 32-19 17 27-17 11-45-7 13-12-1-31 33 12M960 803l18-1 7 2-2 10-6 5-10-8-7-8M2161 916l5-14-27 12 5-17 22 5-12-12-10 7-12-1-2-12M1252 743l-15 2 14 9M1252 743l5-5-8-4 9-1 12-6 8-4-6-6-14 2-5-8M1934 990l13-17 6-17 18 20-3 19-21 17-1 15 13-11 13 16 11 2 24 2 17-4 15-9 6-6 28 3 19-9M827 1170l28 8-31 15-44 2 22 19 28 16M827 1170l-24 13 21 10M2371 695l0-29 35-18 16 1M1413 1292l-12-6-23 2M1413 1292l16 2 33-10M1413 1292l-1 15 29 3-12-16-17 13-13 3M1522 830l13-7 0 8 21-8 4-7-25 7-8-8-12 3-23 4 1-11 6-9M1101 1219l34-6 1 10M1074 1124l-11 12-26-16-11 7-8 25 13 6M1318 921l0-16 14-12M2275 827l-34-10 28-20 40 11 11 14 34 1M2155 823l-2 9 18 10-6 2-12 5 0-17-17 2-5-13 22-9 12 4-3-13-14-10 13 3-7-16-20-14-1 18M2155 823l-16 1-3 10 9-7 10-4 15 3 1 16M682 1016l2-9-22-6 17-3-7-8-4 5-6 6M682 1016l7 14 16 3 16 9 19 11-11-20 26-3 4-15M682 1016l-28 0M1291 1422l-8 11 4 13M2101 895l7 4 14 10 10-13-9-8M1672 956l31-12 24-12 13-4 12 8-25-4-34-1-32-6 21-10 11 16 10 13 17 12 7-24M1672 956l-21 9-5 23-28-6 11 14-12 13-9 14 24 6 36 14 27-10 7 14 21 13-13 17-23 9M1820 1151l0 10-10-8 0 8-7 4M1287 1149l-20-14-15 21-28-7 14-7 29-7 9-16-3-12-22 2-1 18-20-7M1747 718l-14 4 10 9M1889 930l-32-11 15-9-37-9 18-13M1122 744l-14 0-9-4-8-4-1 12 18-4-3 10M1122 744l18-9-2-3-15 2 9-7 20 0-3-6-17 6-3-7-4 8-6-6 10-2 2-7M1725 1151l-36-14 17-25 37 20-7-22M2091 570l22 14 15 14-14 3-24-15 23-2 21-1-13-6-8 7-9-16-13 2M1236 710l-9 0-8 6M2093 1171l18 17M2093 1171l2-19M1614 883l20 11 11 14-7 10-35-5M1608 1023l-37 2-22 4M2551 420l-8-21 13-15-35 7 22 8M1803 1217l23 13-52-2 7-12 22 1M1112 1198l-34 9-20-5M773 1464l50-1 18-27 6-13M773 1464l-49-5M729 1379l-27-3 20-22-44 6 24 16M1705 798l12-3 10-5M1341 826l9-8-19 1 7-10-25 8 2 7 26 2M1573 892l-35-5-17-3-24-8 4-10-22-1 18-9 15-9 5-6-25-10-14 4-13-11-2-13-5-7-17 13M1573 892l-5 6-30-11M1173 759l2-9-9 3-11 6 18 0M1774 1228l-22-7-36 9M1668 1043l34 4-20 18 15 3 13 9-1 19M1060 1018l-4-8-13 4M844 950l25 0-15 12 25 0 10 12-19-5-16-7M844 950l-14-8 1-10-20-5 15-9 7-2 6 13M2039 1095l37-4M2039 1095l-20 31-9 33M2076 815l-19-10-20 4 26 16 13-10M1700 858l10 10 6-13 14 9 8-17-22 8-19-13 3 16M2076 1234l-44-20-8-30-46-10-28-10-41 16M919 833l18 1-6 4M919 833l7-8-12 1M1756 1005l-10-4-18-2 35-15 7-21 30 15 19 3 29 0 13-11 27 12 22-1 37-8-38-11-9-14-25-6M2319 888l-27 22M2319 888l58 18-36-29M965 1173l12-3 10 16 21 0 5 5-18 13-7 26-21-7-16 4M1943 1079l-6-7-11 8-16-10-18-18-22-5-9 5-28 4 8-23 5-15 35-11M1943 1079l-13 9-4-8-15 13 19-5 24 6 0 8 9 24 13-18-22-6-14 3 23 21 56 0M1595 1068l2-13 37 6-1 14 30 14 4-11M2035 765l24-15 11-10-9-12 29-1-18-11M2035 765l-10-22 34 7-11 18-13-3M1831 714l-8-4-9-9-1 7 10 2 4-8 4 12-14 5-11-8-14 4-11 7M2095 634l13 18 31 10M2095 634l25 5-12 13-20 5 2-8-20-11 15-13 13-7 22-9-6-8-1-17M1310 1004l-18-6-5-15M1602 718l-6-3-8-4-4-3 9-9M1602 718l0 10 5 1M836 813l-6-3 16-5-10 8 11 4 0-6-1-6 12 6-3 6 3 2-8 5 10 2M836 813l-13 3 7-6M1972 808l8 8-4 8M2556 384l-16-12 23-5-7 17M2252 702l7-8 14-11-32 2-12 1 8 6 15 10-10 5 15 7 9-2-14-10-19 3-6 1 10 6 8 7 7-3 5-2M1841 700l-14 2-13-1-8-8 16-3-11-5-5 8-14 6-1-4 9-16M1841 700l7 9 11-3 6-13 15 4M1920 630l-3 11 1 17 12-8 12-9-25 0 13 9 15 8 31 6 2 13 16-7 5-17 23 14 4 10 6-13-10 3M1159 899l2 12 23-14M911 1496l41 5-11-26 41 16-30 10M911 1496l-26-31 28-3 19-18M1164 1281l-28 13-26-22M1710 921l23-11 7 18M1710 921l-2-10-13-21M1714 720l-7-9 13-4M1714 720l4 8-6 4-7-1 7 9 18-6 10-1 11 6 1-6-12 0-7-11 2-4M1565 1142l20-13 15-22-29-13-42-1 4 16 36-8 2-7 14-22-9-24-30 0-1 19M956 799l-9-5-8-6-9-4-4 8-9-7 10-5 3 4 12-1 11-7 5-8-17 3 2-5 15 2 14 2-10 1 9 2 1-3 18-5 17-5 12 6 5-6-9-2 4 8 18-1 12-2-6 9-1-5 7-4M2012 708l-22 12-27-6-7 16-14 12-14 7-20 13-10-12-16-3-13-20-20-2-12 8-12 4-19 0-19-2 21-2 12-6 17 6 22 2 4 11 19 1 1 13 15-10 10-20 3 17M1818 763l-11 3 30 8M711 1267l-27 16-5-12M1840 1131l14 7 3-16-13 1-4 8M1126 1332l27 1-3 19M2467 1288l28 44-34 4 6-48M1118 858l-1-13-34 12 1-15-11-2M1997 977l4 9 16 1 7-14 19 1M1997 977l12-2 8 12 1 6 4 9-13 0-23 0 15-16-30-10 22-13-40-7M2263 1380l6-38 48 13M1072 795l13 9-18 4-5-8-4-11-6 4-14 4 24 3-20 7M1453 972l-26-6-2 17-21-5-1 13M2229 626l4-15-27 6M2219 733l6-8 10-1-5 7 13 2-2-6-6-3M1633 1213l5-2 11-4 5 5-3 8M2528 833l40 4-19 14-17 41M2164 768l11-2 15-7-3-14-12 13 0 8 4 6M1571 1213l2 4-19 0 11 7 12 1-11 7-6 7 10-6 14-4-7-4-4-8-8 7M1571 1213l11 2 7-5 4 5-12 7 3 7 11-5 12 1-1 9-11-4-2 8-4-4-5-5-4 8-10-4M934 1308l-21-4-23-5-41-25-6 20-15 27-11 23-34 13 26 28-12 13M1160 788l12-1 9-5M1307 1225l-31-1-22-1M2284 712l-18 0 12 12-14 1 2-13 6-11 12 11M2261 973l-28-22 24-12M1979 1457l2 39M1933 852l14-4 5-17M943 1112l-34-2 19-13-32 1 30-9 1-14 9-8-16-15-1-4-34-7-18 0 9 14 9-14 11-6-21-3-9-10-3 13M943 1112l19 17 2-18-12-15M1436 723l-5-9-2-2 10 3 7 7M1167 832l-17 10 15-12M1147 1191l-14-15 14-11-9-13M1043 892l-20-13 26-3 26 4-7-11-19 7 4-12 7-8M1386 1039l-6-16-24 3-1-12 25 9M753 1079l16-9-27-10-20 8-9 22M2178 955l19-18-20-7M1528 801l-10 4 16 2-7 8M742 1060l23-8 1-8M2585 1475l-30 23M1786 709l6 6 12 8 13-4 3 8M1786 709l-7 5-6-7M1718 1214l-9-8 8-5M2229 784l-19 14-25 13-8-4 14-8 19-1 26-8 33 7 43-14-3 25M1678 1379l69-31 13 13-82 18 8 34M875 1413l39-5-30-18 7-21 28-12-23-20 29 8M1671 1125l18 12-20 9M720 1243l31 8 42-11 9 7-27 20-24-16M1353 1460l34 15-54 1 4-15 16-1M1113 1224l22-11 26 4M817 1344l17-9-6-14M1177 733l-6 5 8 2 11 9 7-6 12 9-5 11M1177 733l-5-8 2-6 0-5-15 1M2487 464l26-11M1198 774l9-6 8 4 14-5 18 0-10 7-16 6M1420 1035l36 5 0-16M2032 1016l-13-2-6 12-14 0 0-7-20 1-7 12 4 9 7-7 17 11 7-9-8-10-16 8-4-14 13-10 17-8-8-16-33 9 3 13 15-6M1252 1156l26 10 21-4 29-10-12-24-31 1-9-10-26 8-12 15M1601 890l-29-13 36-7-7 20M746 936l-6 0 2 12 8-7-4-5 18 2-5-11-3-7-17-1-9 1 0-6 10-6 12-10 2 11 2-9 3-10 4-7 18 4 0 6 10 10 1 14-15-1 7 8M1393 782l10-9 21-5 23 6 11-3-12-4 12-6 1-7-9-9-10-8 12-5 8 5 9 5 4-1 13 2-4 9 2 6-20-5-5 1-13 4-5-6 9-7 5 0 9 8 9 10-15-2 0 10 2 10-13-7M1393 782l-15 8-13 8-12-12-5-5-14-6 1 8-3 7 6 4 0 15-27-8M1614 1363l1-37M1496 678l17 2-2 8M1496 678l-10-5-4 5M1392 1348l-35-7 4 10M914 1003l-4-23-21-6M1624 1185l-8 10 21 5-7-9-6-6M2197 633l-1 14 36 10M2383 823l28 24M1916 847l8-15-23-1 22-15-22-3-30 8 12 9M2349 1168l73-30M1050 974l8-10 17-3 15 19-11 4-17 13-15-14 32 1-21-20-21 5-16 4M1737 748l3-7-4-4-11 8 12 3M1633 855l28 5-5 9-26-8 3-6M2368 1391l-22-7M1390 952l-7 10 21 16 23-12M1767 1025l29 16M2475 1013l29-31 19-16M1761 1202l-8-9 17-4 16 0-6-6-10 6-13-1-14 5 10 0M2034 632l4 14 9 8M1654 792l-18 2 17-10 19-2 9 11-8 9-28 18 9-21-18-5-27 2-14 9-3-11M1654 792l8-2-9-6 16-11 12-7M1151 988l-2 14 32 13-5 18 21-10M1151 988l-17-7-19-1 10-4 18-11 1-12-17 14-12 13M2099 886l-16 0 10-13-3-9 21-2 6 3-12 15-12-7M1588 1171l-15 1-8-20M2011 594l-16 9-16 7M1828 1003l-23-6-20-14M1815 1354l-55 7 59 27-19 33-49 21-20 39 42 19-15-28M1178 1104l-25 10 6 18M1315 716l-3 4 9-4 15-3-10 12-14-5-11-1-12 3 3-7M1068 1174l2 20 17-8-9 21-8-13M1638 680l3 6 4-2M1176 848l0 10 9 8 10 20-28 3-37-5 15 15-40-6 25-9M693 898l7-6-8-10 14 1-6 9 7-5 14-6-10-2M1086 1110l17-13 2-14-24 3M2495 1332l26-32M1514 1198l16 6 15 14 9-1-3 8-6-7-6 6M1514 1198l-37 0-8-2-16-17 2-19-22-5M1228 1494l25-8-2-10M1723 895l-15 16-21-10-20-5-2-13 10-14 16-22-23-2-7 15 14 9M2108 968l41 18-2-19-30-14-24 4M2108 968l-27 4-18 1-3 10 6 7M804 1001l1 7 26-13 21 14-29 6 8-20-25-9-11-7-6-10M1535 670l15 3-17 5-14 0 3 5-9-3 0-5 4-10-18-4M1535 670l-3-7 7 4-4-10M1702 740l10 9-1 11-16-5-12-6-10 12 22-6 2 10 14-5 16 2-9-8-6-5 0-9 13 5-7 9M1315 927l16-2 8 21M1478 1158l37-8 15-17M1478 1158l10-18-6-11M839 1102l-6-10-31 14 11 3 23 9 0 10 14-3 6-14 24 14 9 7-5 12 14 4 25 1 26-5 13-15 11 18M1448 871l-21 1 17 20 9 5M1990 646l18-11 7-10-11-6 4 16-22-3 18-13-9-16 15 4M1990 646l-23-5 19-9-16-3 15-9M1010 1015l-9 7-12 12M1132 769l-8-7-7 12M1812 1075l-36-4-18 2-21 7-27-3M1812 1075l-9-14-27 10 8 11 28-7 1 22-29-15-26-9M1493 730l7-7-9-6M2001 917l15 4 12 8M717 926l-13 4-4-2-16-6-3-2-9 7 0 6-8 1 11 4 7 4 7 5-12 5-12 1 0-7-4-6 14-2M717 926l-11-5 18-4M2128 598l6 15-14-4M939 893l3 5 21 9M1741 1036l-22 11-17 0-5 21M1741 1036l5-21 0-14 17-17M964 818l3-7-9-2-12-3-8 5-5 8 11 7 2-11 10 5-3 12-9-6 0 8-7 0 7-8-18-1-2-3M772 1090l-3-20 13-1-17-17 28 5 11 0 1 18 12 5-17 7 33 5-16-12 18-9 21 1 15 15 25 11 13 12-20 22 9 16M829 1023l-15 14-18-8-14 13-17 10-25 1M829 1023l10 5 5 18-16 3-14-12 25-9-11 21 13 13 27-7 10 9-22 8 32 4-17 11M1314 1372l10-20-34 3-21-8-18 23-43 0-14-18 15-28-22-18-34 27 0-24-17-15-2-20 17-24 24 10 14-26 33 0M1314 1372l12 6 5-11-7-15M2567 1246l-1-39-42 2M1183 771l-9-6-1 13-12-10-10 2-9-7-18-1 11-6 7 7 13-4-4 11 4 7 9 4 8 6 1-9M1368 1402l-10 17-10-15-18-6 16-5M1682 1237l20-9-3 9 1 28-26 16M1682 1237l-15-12 16-9-20 3 4 6-7 5 22 7M1353 1161l-25-9-9 13 19 11-36 9-3-23M1276 780l-7-6 17-4M1832 792l-18 7 20 4 15-7M1711 818l19 1 7-8-26-3-11-4M1861 1052l18 13 31 5 27 2M1618 750l8-3 14 5-4 5 4 6 9 9 4 12M1618 750l-10 9 16 2-12 13 21 4 2-7-11-10M1065 1294l-32 4 18-19 15-22M1266 1038l-2 12-25 13-25-1M918 1025l0 12-22-2 23 13-1-11M2064 779l-16-11-5 14 14 23 6 20-5 22 25 9 11-8 15 0 11 10 8 2-1 8 9 8M1126 1005l-21 1-18 9-31-5 29-9 20 5-11 19 21 7 16 3M2154 675l13-7 18-5 11-16 7 18-18-2M1394 1197l18 4-30 11 33 12 20 18M1281 1405l20 0-24-20-26-15M1465 702l17 4-5 8M1564 670l-10 0-1-5M1058 789l-9-5 11-8 10-9-7-3 13-2 3-4M1530 1230l-5 4 1 7 8 4-14 4 10 5 4-9-1-7-8-4-8 4-5-7-4 1 5-7-4-12-32-15-14 12-26-9M1952 579l28-8 20 12-5 20M1952 579l16 5-2 13M2354 1071l32 28M782 846l13-4 6 9 5 1 14 5 10-4 12-10-4-9-16 2M1333 1476l-5 11-15 9-7-12M1202 953l2-25 13 16 7-8 21-16 0-11-6-22-20-6-15-9 21-12 2-11-27 10-6-14 3-16M1810 870l-21-4-13 0-2-10 13-5 0-4 29 8-27 11 5 13 19 15 22 7 7 11-18 22-15 21M1747 1348l10-21 3 34M1302 826l13-2 16-5M873 1178l-18 0 15 8-25 8 30 9M1321 865l1-12 7-12-14-17-8 11 15 18-16 11M1887 1118l-2-17-18 11M1746 956l6-20 30-8-7-17-24-21 17-13 1 10 6 24M1746 956l-26 0M1485 1077l12-22 22-11-23-12 1 23M2070 740l27 0 10 18 11-10 16 18 24-6 17-2M2070 740l20-13 6-14 5-10-25-5 20 15M980 1044l25 3-11 12 9 14 1 20-22-13 7-14-15 12-38-11M1373 736l19 11 11 2-3 5-12 6M1509 1181l-12-13 18-18-27-10M674 908l16 2 2-9-12 4-6 3 3 8-8-6-12-2M1587 829l-14 9-14-9-3-6 25-1-5-11 1-14 1-10M2506 1069l-16 28M2506 1069l27-29 29-35M742 948l18 1 22-3M2077 576l-1-17M2077 576l-9 16 14-1 8-5 1 16-9-11M2313 665l14-12 25 12 19 1-8-13 43-5M2313 665l-8 8 0 9M973 1465l35-2-26 28M1339 859l31 1 15-2M1492 1257l-6-13 19-6-17-6 4-13-13 13 9 0-2 12-7-12-8 9 15 3M1400 938l-10-13-19-7-21-9 11 23 10-14 10-17 23-13-30-12-21-8 14 13 7-5 32-1-2 13 12 3 28 1M1137 990l12 12M1137 990l-3-9 24-13-15-3 12-7M782 877l12 5 5 11-8 10 25 6 17 7 2-14 11 15 10 2 23-1 3-4 14-3-10-9 3-12-20 4 17 8-4 12-23 0-12-15M782 877l-3 2-16 4 7-8 6-8-13-3-11 1-1 7-4 10 3 5-14 5-13 1 9 6 8 9 14 1 23 7 14-13M782 877l8-11-14 1M1080 925l23-7M1080 925l5 10 4 8 18-6 8-5 11 17-12 5 13 13-28-2-9 15M1899 729l9 1 4-12-15-2M1469 694l11-7 2 11 12 6-1-12 12 3-2 6 6 5-15-2 9-3M1022 778l10-5 11-1 6 12 14 2 2-6-5-4 15-2-1 4 10 8 8 12 24 7-26 8 2-15-7 6 5 9-16 2 11-11M1022 778l2 7 1 4 4 7 9-7-13 0-8 10 12-3M1946 1027l-35 7-6-14M1311 1254l-35-30M1311 1254l17 2M1311 1254l-27 8 30 15M673 1132l-16 4M673 1132l-19-13 28 1 12-16-40 2M2143 588l28 1 26 12-7 13-24 3-17 14 30-3 0 13M1703 1203l6 3-9 4 7 4-12 5 7 9 5-14 2-8 2-8 19-4-3-9 7 2M1899 609l-9 7-24 6 0 12-21 2M1899 609l7 6-16 1-3-9 12 2 0-9 16-7 4 12-20 4M1861 1109l-17 14M1424 768l-12 11-3 11M1836 1174l15 0 11-9-17-5 6 14 8 5-10 10-11 14-16-3M1836 1174l-1-12-7 8-8-9-10 0-22 0M1836 1174l8 9 7-9-16-12-15-1-9 9-9 4-11 4 1-7-10 3-7-3-6 5 11 7 2-9 9 4-5 11 13 2 9 3M2184 868l6 16-24 18M1890 616l-12 13 7 6-7 18 1 6 17 11-12 7-19 16 0-17-17-5-20 4-6 15 12-2-7 14-5-12M1890 616l5 10-10 9M1339 997l-13 13-14-16M1339 997l7-16-15-12-21 2M1134 1274l-6-21 23-3 38-16M690 877l4-7 9 1M967 996l23 16-6 8-16-4-10-14 9-6-20-8-22-6-15-2-12-14-2-11 6-6-17-10 8-9M967 996l10-16-16 7-14 1-10 14-2 17 23-17-21 0-8 15 6 2M768 1313l-6-7M763 969l-12 12 24-1-24 7 27 2M763 969l0-9 16-6-19-5-10-8-10-5-16 10M1151 787l-5-5 9-5 6-9 13-3 3-6 17-4-4-6 4-9-4-9-11 0-7-6-15 5-3 9 4 6-16-3 12-3 17-1 2 10 2 2 2 9 7-9-5-10M692 901l14 6 0 10 5-5-5-5-13 10-12 3-4-4 16 1 7 11-14 6-4 2M692 901l17-3-9-6 5-1 2-4 16 6-2-12-15 2M2032 1295l43-16M735 1175l-27 8M1841 1033l29 14 9 18-20 5-26-14-30 5M849 1157l-28-2-18-18-17-14-7 11M849 1157l6 21 5-24-11 3M989 1266l-38 17-13-7-30 5-18 18M1505 1269l28 9-2-14 24 14-22 0M1505 1269l-7-12 7-5 15-3-5 12-10 8M1625 1270l-22-10 10-6 12 16M2220 698l17-6 22 2 23 0-10 7-13-7-18-9-4 7-4 13-13-7-6 8 4 9 7 10 5-8 7-5 5-5 10 9 12 9-10-1-9-5-4 8 13-3-2-8-15-4-4-7 9 2M2220 698l-12-5-17 11M1062 913l-21-2-27 9-13-3-14 12M1755 711l24 3-23 6-4 13 11 1 15 9M2230 760l22 1-10-6M2230 760l-9-5 7-4 2 9M884 1144l-24 10M1535 928l4-9 24-1-9 16 24 2 2 20 18-17M1535 928l-22-7 26-2 15 15-15 11 1 18-12 16 30 3 30-2 30 2-11-13-19 11M1535 928l-27 11-21 2-23-24 31 5 18-1-14-22-31-7 11-3 18-13-18 0 0-11 1-14-7-10 5-6 14 7 0-11M1596 748l-15 6-11 2-8-2-22 0 6-6 16 6-6 10 10 3 17-2-2-11-13-4 4-11-7-9-2 13-10-2M1596 748l23-4-21-2M1596 748l12 11-4 7 8 8 1 4M1066 740l1 6 14 7M2099 921l6-3 1-10 2-9-11 4M655 1336l43 7 24 11 34 9 27-6 35 16-9 12M1945 706l4-18 16-1M1977 1053l-8-6 7-6 24 4M1977 1053l-20 8 15 6-7 17 11 24-22-14 11-10-4-12-4-11 12-14M1396 704l-4-9M1679 1104l-16-15-3 19 19-4M1005 1039l26-3 24-12M1005 1039l-4-17-11-10M1099 1166l12 4-24 16M874 1004l-8 18-27 6M966 1196l-21-2M2377 906l21-2 56-18M1558 707l1-7 0-3M1558 707l-13-2-12-7 5-1 7 8 14-5 15 2 10 6 14-4 10 9-12 2-9-2 5 6 3 10-4 8M1521 701l2-4 12-8 7-6M1913 889l-1-15M928 771l-14 5 10 1-7 8-12-4-8 6 8 8-4 3M993 863l-4 18 10 8-5 11-10-3 15-8 21-4-2 8-24 7M993 863l25 4 12-15M856 1072l-15-10-6 9M1583 1251l-14-5 11-9 9-3 6-4 0-6-2-9 7 5 7 5 16 2 7-9 2 12 9-10-3-9 16 1 17 1M1410 1063l12 21-44-5M1410 1063l5-5 26 7 27-2M1324 1084l3-9-23-4 20 13M724 981l16 3 11 3 10 12 24 7 20 2 18 7M724 981l14 12 23 6M2318 683l-13-10M2318 683l18-14-9-16M1247 1083l-27 7 26 12 35-19 23-12-11-22M1873 1145l-19-7 22-14 0 14 13-4 17 6M1316 1444l21 17M1529 1093l-19-3M1175 807l9-14-6 0-6-6M2165 866l-8-14-8 11-22 5-7 15-15-3 22-12-10-3 3-7-9 4-17-14-4 16-10 13 3 9-25-12-14-5 1 12-14-10M2486 578l-1-29 28 19M2486 578l-54 10-1-19-20-8M1925 617l-6-12 20-8-5 16 7 15 29 1-11-15M891 811l-17-2-16 2M1728 999l-33-3-21-7M2320 822l-21 15M2070 956l14 1-3 15M2070 956l-8-7-6-4-13 4-4 19-15 5 8 7M1061 898l2-9-14-13M1901 813l17-13-16 1M1950 992l-3 20 12 4 20 4 20 6M1950 992l-3-19 24 3M1972 1067l-1-5-14-1M1783 748l-8-3-14 6-4 7-2 11-12-4 5 11-16 0-5-5-16-11M1217 748l18 9-17 1-9-6 8-4 20-3-2 12 12 10 10-2 8 4 19-3-15 8-4-5M2106 908l-10 9-5-6-14-1-3-10M1479 670l7 3-8 2-19-2 5 8M1151 1447l-32-7M1456 1232l7-22M1680 704l-14 4 0-11 0-7-9-9M2154 780l19 9 5 7-16 7-9 9-14 12-8-3-3 15 12 10 9 9 8-3-4-3M2563 889l-14-38M929 961l9-5-21-2 12 7M2102 950l15 3 11-11-18-2-8 10M926 792l-8 4 17 2M995 1204l-23-2M1629 1243l-16 11M2290 749l-26 3-12 9M1939 1128l1-23-19 0-15 11M898 966l12-2 16 12 37-4 21-14 23-7 10-20 24 14 17 19M2157 660l10 8 18 8 18-11 1 16 4 12 6 13-13 12 14 7 10 0 5 6 11-4 8 8 15-10M1477 1016l-36-14M1555 1235l-6 0 2-10M1555 1235l5 4 9 7 18-5 6-3M824 895l-11-2-14 0M1700 716l7-5 16 4 0 8 7 11 3-12-10 1-5 5-16-1 3 4 13-3 12 6-5 11-13 4-17 6M1700 716l-3-13 18-5-8 13-10-8 13-9-13 0 13-9M873 992l-10-7 7-16-12 6-8 12-19 8M2553 355l14-13 4-8-18 21 10 12 4-25M2181 837l-1-11-15-10 12-9 1-11-17 0 1 7-23 0-8 18M2181 837l-11-11-5-10M1499 749l-17 3-9-11-2-8-2 9-14 3M2013 1026l26-3M1733 700l2 10 14-4-16-6 13-4 3 10M1166 753l-6-6-15 3 10 9 6 9M1051 1279l-8-24-39-13 1 17M1051 1279l35 2 50 13 32-3-15 18M1531 1264l-16-3 15-7M1099 1055l-8-3 4-12 4 15M1999 1019l20-5 3-12 3-10 8 10M2127 931l-17 9-7-7M1446 1497l-70 0 11-22M954 1151l23 19M1838 1203l-12 27M1838 1203l59 24 37-2M1800 978l5 19 14-16M720 959l4 5-1 10 17 10 3-15-19-5-14-3 1 6-16 5 4 8-5 4 1-12M678 1360l20-17M1200 859l-24-1 18-13M1883 783l-19-1-13-11 7-14 24-10M1883 783l19 2-14 15M2213 767l1 16-13 4 9 11 4-15M2194 1042l19 28 68-2 44-2M1388 722l-3 7 10-4M994 820l-11-6 16-1 11-3-17-7-4-5-12-1 1 5 11-4M994 820l16 1 8 11 12-11M1044 733l6 0 11-8 4 11 11 1-9 9-6 10 15 6-6 5 5 7 15 1-16 3-9 2-16 4 3 9 10 7M1608 870l22-9 31-1 30-13 6-5 1-14M1053 745l-8 1-17-3M1578 676l-9-6-3 6 1 7M1578 676l7 9 1-12 4 13 9-3 5 8-14 3-11-7 6-2 5 9 0-8 9-9 12-2 5 2M1578 676l4-8 4 5M1299 751l-15 1-9-4-5-9 17-1-1 7 13 3 8-5 5 5-13 0-12-10-9 8M1299 751l-10 7 15-1 13 7 8 4 9 7-15 1 2 7-13-3-10 4-8-1 5-8M1463 811l8-15 14 9 8 6 22 7-10 7M692 966l-1-5-10-4-16-4-5 9M1354 1331l3 10M1061 725l13 6 19 0 15 5 0 8 13 12 14 0-8-6-6 6M900 817l-10 7-2 2 15 5 2-11 9-3 7-7 8 4 4 5-7 6 11 9M1277 1385l29-9 11 17-40-8M852 1009l-2-22 13-2M2296 1159l25 36M2296 1159l25-7M1440 829l-13 16 1 11-1 16-11 19-10-16 21-3M1440 829l16 3 22 3M704 1245l-41 7-1 24 22 7M1489 686l-9 1 13 5M2072 1008l-21-4-13-8M1392 795l-11 12-16-9M1519 1223l-6 2-21-6 7 12 6 7M1345 764l-5 5 15-1-1-8-7-10-15 9-2-6-8 3-10-8M1345 764l-17 4-3 0M821 1155l5-18-23 0M971 932l-5-9M971 932l-3 12 11 7M956 869l-8-13-6 4 3 9 11 0M1338 1043l-14-6-10 20 24-14M1322 1422l1 15-23-3-17-1M731 857l15-3-11-11M1924 832l-1-16-5-16-16-15M1924 832l23 16M1787 735l4-11 17 9-2 4-16 2 5 13 9-2 2-13M1787 735l-24-1-12 5-11 2 8 7M1190 789l-6 4 2 14 19 6 8 6M784 834l4-5M784 834l-1 5 12-3 16 0-6-8 3-7 15-5 16 2 8-1 8 0-8-6M754 966l9-6-3-11 4-11-14 3M1776 787l-9 5M1776 787l16 6 22 6-2 7 22-3 1 9 7 14 29-5M1666 697l-7 4-1 3 8 4 12 0M1666 697l14-5-2-9-12 7 14 2 17 2 0 9M849 1274l22-20 35-5 2 32 23-23 7 18M849 1274l-22-10 44-10M809 859l17 8 10-4-2 8 10 0 8-10 9-10 2-4 20 3 3-13-11-11-6 10-8 2M809 859l-11-4 3-4M1749 1148l-6-16 12-19M1643 730l-18 4-12 1M1643 730l16-1-7-7-14 3-2-9M1237 962l-16-7-4-11M2485 549l-32-1M1382 1212l-12-8M1350 909l-32-4-15-14M1350 909l-19 16 30 7M1350 909l31-8M1448 1266l-11-5-38 4M816 909l-3-16 15-5M2139 914l-16 4-7 9-6 13 7 13M996 793l7-7-7-2 14-7-7 9M752 898l7-8 22 3M752 898l-7-5-9-1-2 5 18 1M1116 805l20-8 10 0M1116 805l11 2 9-10-10-8-10 16M1599 683l12 5-7 3-14-5-5-1M1765 815l-8 14 13 6 17 12 36-2 14 0M1765 815l-12-6-22-7-14-7-7-11M1246 1102l-13 2-13-14 14-11 5-16-16-24-17 7-16 15M1246 1102l27 5 8-24M1693 931l-28 2-4-8-16-17 22-12 15 19-37-7M801 930l10 5-11 8 5 4 6-12 0-8M1645 1183l-15 8 16 6 22-13-23-1M1866 634l12-5-12-7M1195 886l24-5M863 873l14-7-16 3-9-8-2-11 11 1M863 873l12 4 14 13M1162 1038l14-5 30 13M1581 822l-8 16-23 10M732 899l-4 3 12 6M732 899l2-2-11-4-6 3-8 2-3 9-16 3 3 7 13 4 0-4M1759 1215l22 1M1759 1215l-7 6-2 30M939 788l9-1-6-4M1539 667l10 3 1 3-1 6M802 1214l-29 8M1515 740l16-5-6-9 5-12-6-4 11-2-2-10-10-1-7-8 19 0M1279 1188l23-3 17-20M1850 745l13 1-5 11-8-12M1030 849l-7-13-5-4-6 8-14-6M775 980l20-1M2202 748l7 10-11-2-11-11 2-5-12 2-30-13 8 17 22-4 10 3 8-1-6-4M968 833l-4-6-8-7-12 6M2100 674l-18 15 19 14M1399 767l4 6-20 4-5 13-25-4 1-12 1-6 10-5-11-3M1399 767l1-13 17 9 4-6 7 6 18 4 0-9 12 3 6-8 18-1-13-10-5 11M1342 733l-12 8 20 0-1-7 9-6-2 5M780 1195l-24-3-28 11-21 15M780 1195l23-12M1047 902l-6 9M1047 902l-29-9-19-4M901 982l9-2 16-4M1815 785l-8-19-7-8-25-3-14-4M1508 1232l-9-1-11 1M2010 901l-19-20M1308 780l2-5 9 1-2-12-12-2-16-4-5 8M1639 1118l-39-11-31-6M1639 1118l21-10M2236 790l5 27M1514 780l14-2-9-6M1223 1169l1-20-6-19 32-3 17 8 18-6 27-21 32 17M1145 899l22-10M1812 822l-2-4 2-12 23 6M1286 1278l-2-16M1125 728l-2 6 17 1 12-8 7-5-2 8 14 8-13 7 2 2 13 1 11 2 10 5 15-3 8-7M984 1020l17 2 22 2 8 12-26 11M1105 893l-17-10-13-3-12 9M1105 893l-19 6M902 949l15 5-21 1-17 7-9 7M1062 997l-19 7-5-7 9-14M1062 997l-6 13-13-6M1654 953l-29-4-45 7 27 13M1654 953l-3 12-33 17M1187 913l18 3-1 12 20 8M1187 913l-26-2M1245 920l-14-9 14-2M1661 1198l7-14 4 6 5 4M1015 964l-8-13-7-3M1596 823l-1-18-19 6-20-4-9-13-13 13 22 0 21-10 18 8 17 2M711 991l27 2 13-6 0-6-8-12M653 1492l87 17M1093 731l-2 5 17 0M700 945l-4-6 4-11 6 6 11 3 9 0 14-1-6-8-4-8M1298 1456l-1 8 1 15M1020 885l3-6-5-12-14-10M1021 738l-14 8 11 1M2039 940l4 9 13 6 6-6 9-3 9-5M930 903l12-5 10-13-18-2M930 903l-6 17 6 8M1556 1207l0-8 20 5 5 3 5-8 18-13 17-15M1169 981l23 14 6-21-29 7M1382 1157l10-22M1382 1157l30 6M1440 737l-9 0-11-2-23-3 0 5 13 5M908 1281l5 23M1184 714l-3 9 14-5-11-4-10 0M1038 1070l-9 24M1465 863l14 2 18 11 2 23 22-15 2-21-26 13M1463 668l-4 5-11 3 8 6 5 15-12 5-12-2-2-10 0-6-10 3 10 3 9 7 5 5M1417 709l15-3-3 6M1360 806l21 1-3-17M1360 806l-10 12-12-9 10-8-10-7 15-8-5 15M2371 630l-8 23-11 12-16 4M1216 1079l4 11M2238 751l4-10 7-6-6-2M2238 751l-10 0-7-6M1906 615l13-10-20-5M1906 615l-11 11-17 3M1887 691l-22 2M1887 691l15 6M1374 876l-4-16-17 8M1189 1213l-16-18M988 1230l16 12 8-7-24-5M1584 663l18 6 0 2 9 4-9-6-8-9M1584 663l-8 0-7 7 13-2 2-5M2377 612l16-5M1177 1108l-24 6-11-18M1177 1108l0 15-24-9-22 15M1983 759l-16 13 26 6-10-19M1993 963l21-4-12-18-9 22 16 12 5-16 10 14-15 2-8 11 17 7-9 9 10 12-27-4-21-2-24 4M1408 722l2-6 11 3 7 6 3-11-10 5M1864 782l7 8M1606 1234l16-1 10-3-9-3-1 6M2104 568l17 9M1038 1059l-4-6 7-10M1931 1042l-20-8-19 18-13 13M1788 956l-18 7M1751 890l-18 20-25 1-26 4M1751 890l18-3M1835 753l23 4 25 3 25 2M1563 918l5-20M669 910l-11 11 14 6-8 7-3 6 2 7 2-1M669 910l6 8-3 9 14 7-14-1M1381 715l-19-1-4 6-14 3-8-10 2 0 12 3 12-2 3 9-7 5 0-8M2360 768l-48 15M1963 714l-7-4M1963 714l17 18-24-2M1546 731l-11-5-4 9 15-4M1654 799l19 3-11-12-8 9M1487 801l-16-5 2-8M2197 937l36 14M931 1258l-25-9M886 804l-3-3-12 4-10-6 9-4 13 6 8-6M886 804l-12 5-3-4M679 998l5 9 12 4 1 9-8 10M679 998l-11-3-8-10 12 5M2246 1458l47-18M1107 937l19 12 1 18-2 9 9 5 9-16-16 2M1107 937l-22-2M1614 704l13 3 2-9-10 0-5 6M1943 673l2-15M1943 673l6 15M1047 741l3-8 6 4M1911 1093l-26 8M1192 995l28-1M1737 811l16-2M1487 941l-7 18M1265 824l16-5-4 10-19 1-13 15-18 4 7-12 13-16 18 3M1519 720l11-6 5 12M1157 730l-5 6 0-9M1876 1138l-22 0M858 897l-13-14-8 8M858 897l11-3M858 897l1 17-13 3-13-1M1096 1131l-33 5-7-23M2091 602l23-1-16 17M1205 916l26-5M1828 1170l-6 3-11-3 17 0M1187 1306l-19-15M953 832l-3 15-6-13M1295 806l-14 13-5-7-10-5 16-2-14-6-3-8 9-1 14 6-20 3 6-9M1834 859l-11-14M1186 807l10-10 13 9-23 1M1768 877l21-11-2-15M1681 793l17-1 4-14-16-2-17-3 3 9-10 8 19 3M2032 664l6-18M1329 980l17 1M1296 1500l17-4M958 1002l-11-14M1832 766l-25 0-5 6-15-3-12-14-18 3M2076 698l6-9-27 8 21 1M1253 779l-6-7 0-5-19-4 7-6M757 849l-11 5 6 11M757 849l5-9M1399 1236l16-12-3-23M1399 1236l-22 7M1567 773l16 7 12-7 17 1 23-3 5-8M1567 773l-1-6M1082 868l-14 1-15-5M1082 868l6 15M1842 912l15 7-33 15M2147 729l-22-5 8 17 14-12M1181 723l19 4 5-12-3-9M1181 723l9 8 10-4-5-9M1181 723l-9 2-13-3-10-1-20-1M1400 1045l15 13M862 882l-17 1-1-11 18 10 13-5 9-1M1413 1338l-11 27M795 836l0 6-12-3-9-5M2221 755l-12 3-13 2M944 797l-10 6 12 3M944 797l3-3 1-7M1517 841l-25 1-19-1-17-9 9-8M1115 1032l-20 8-1-15-7 5 8 10M684 922l2 12 10 5-14 3M1513 921l-5 18-13-17M2123 918l-9 2-9-2-9-1M1039 1220l-27 15M987 1118l-25 11M1283 961l-27-1M1761 696l-15 0-1-9-9-5M1761 696l9-6M2405 779l67-14M1629 670l-1 12 13 4 0 6M875 826l8-6-9 1M1823 667l5 8 6 13M2478 510l1-20M1499 899l-20-10M993 973l-16 7-14-8 30 1M1242 740l-6-10 24-5-2-6M1488 766l-10 4-20 1M2140 846l13-14 12 12 16 13-24-5 8-8M1094 764l-4 11 4 1 2-5-6 4-6 11 10-10M1094 764l-18-2-1 12M989 1066l5-7M1437 700l-5 6 7 9 13 3 1 10-1 4-2 13M1205 715l0-8M859 930l21 2 5 7-4 1 15 15 14 9 0 16M859 930l-3-11 3-5M863 847l-13 3-8-7M1686 776l11-11M662 1082l42-11 18-3M2190 614l-11 14-13-11M2097 740l21 8 15-7 22 5 3 14M2097 740l-7-13M1381 996l-41 4-14 10 29 4 26-18M954 883l-9-14M954 883l-2 2M966 749l18 4M1709 834l13-3 8 7 8 9M1709 834l-12 8M997 752l10-6-2-11M997 752l0 1-7 8 17-1-6 9 9 8M1084 842l33 3 10-11M906 803l12-7 16 7 4 8-9 3-15 3-13-10-9 6-15 2-3-6-14 0 1-10-15 2 0 4 15-6M1914 670l-18 0M665 1205l1 17M1581 1222l-8-5 9-2-1 7M1523 863l-11-16-20-5M2118 895l-10 4M2118 895l14 1 11-10 0-12-16-6M1476 1407l-27 6M974 1078l8 2M1941 628l3-14-10-1-15-8M1941 628l8 7 21-6-3 12-18-6M839 818l11 6-20-1-7-7-7-3M1266 738l-9 0 1-5 2-8M909 1013l20 4M905 781l9-5 13-12M905 781l-3 6-5 0-5-11M1266 710l9 2M1786 1189l17-8 13 4M768 855l13-1-1 11 10 1 8-11 8-3 10-5 4 10 6 10M829 829l19 1-10 4-9-5M1383 1310l-15 11M729 1033l-8 9M888 826l-5-6-6-5M2162 803l15 4M1954 1094l-14 11M1572 739l-9 4-17 5-15-13M1288 866l-14 15M2044 905l8 8-36 8 28-16 1-24 13-7 22 3M881 940l-12 10M1521 668l-2 10-6-3-14-1-10-6-3 5 13 1 14 6 6-2M1521 668l11-5-15 2M948 856l2-9M1791 695l15-2M1327 1075l-13-18-10 14M1237 795l7 15 2 4 1 7-16 3M827 1264l-25-17M1347 848l7-7 16 9-23-2-25 5M1347 848l23 12 0-10M905 820l-15 4 13 7-13 3M1934 921l16-15M1417 763l-14 10 9 6M1417 763l11 0 18-5M1979 1020l-8-12-12 8M1849 1189l-5-6 15-4 3-14M1053 722l-3 11 15 3 9-5 2 6 15-1-17-5M958 768l-2-7-13 5M2098 662l10-10-18-3M721 881l8-4M1780 1183l11-5 12 3-4 10M1205 813l4-7M1154 739l-2-3-10 6-15 8M1478 675l-5-9M1584 1229l11 1 12-5 8-6 0-7M786 1123l27-14 20-17M1625 728l0 6 9 8 6 0M1336 1415l22 4M1711 808l6-13-19-3M1711 808l19 11-8 12M962 771l-9 5-12-5M1215 731l3-8-18 4 3 8-13-4M1634 742l-15 2 6-10M1634 742l-8 5-7-3M1727 762l0 9 9-6-9-3M1023 836l-11 4-13 9M1980 571l-12 13M1657 1208l-3 4-13 8M1240 780l-3-6 10-2-7 8M844 871l17-2M844 871l0 1-10-1-16 0-2 4-1 3-21 4-13 5-22 3-9-3-5 6 14-3M1206 780l8 12-18 5-12-4M1305 762l5 13 7-11 15-5-10-3-5 8M1770 1189l-1-13 13-2M1764 867l10-11 15 10M1354 774l-14-5-6 6 20-1M1566 676l-16-3 4-3 12 6M1065 1304l-32-6M1650 1230l10 0M1627 707l-8-9-15-7M681 920l-6-2 2-2 13-6-10-5M1990 720l-10 12 22 2 23 9M700 928l6-7-2 9 2 4-10 5-7 8M1540 768l-12 10M1031 1036l3 17M1732 776l4-11M1568 750l-6 4 1-11 5 7M1260 770l9 4M1260 770l-13 2M1365 744l20 9 15 1 21 3M1365 744l27 3-7 6M1010 810l0 11-11-8-6-10 14-3 3 10 7-11-10 1M1330 1398l-13-5 9-15-20-2M754 909l2 11 21-4M1234 837l24-7-11-9M769 1070l-4-18M1326 725l5 9-16 7 15 0 1-7M1326 725l18-2 14 5M855 1178l-10 16M1237 774l-8-7-1-4M2161 796l12-7M1576 1048l-5-23M1576 1048l21 7M1668 731l10-3M1668 731l-9-2 5-13 2-8-7-7M1708 1166l-20-6 1-23 54-5M1810 1161l1 9M706 907l9-3-4 8M1038 752l-1 13-13-5 2-5-11 3-8 2-10-7M1038 752l7-6M1321 783l13-8-6-7 12 1M1321 783l11 7M740 984l11-3M740 984l-2 9M1678 1205l-10-4M1820 1161l12-6 13 5-10 2-3-7M1133 1176l-22-6M876 794l7 7-9 8M1602 669l-20-1-6-5M1340 1000l15 14M883 850l-14-14 17 1M2143 886l11 4M2180 826l-10 0-17 6-8-5-6-3M1498 1257l17 4-10-9M1787 769l20-3M1581 1207l1 8 11 0M2094 848l-36-1-31 7M1923 1357l-43-16M811 836l5 11 14 6M2025 992l-7 1M1740 733l0 8-15 4M781 887l-2-8-9-4M734 928l-8 9M1456 682l3-9M1214 1273l30-7M1598 704l-2 11-4 4 10 9-7 1-17-2M1516 689l-11 6 18 2M2254 724l-5 11M1278 1166l24 19M1461 697l-17 0M1493 712l-11-6 12-2-1 8M1813 708l4 11 6-9M848 830l2-6 5-7M1795 752l-20 3 0-10-12-11M1506 761l-14 10-14-1M1317 1393l-16 12M1332 759l-4 9M1669 773l-9-3-11 2-14-1M1669 773l-6-11-3 8M1669 773l4-12-10 1M1791 724l1-9-13-1M877 866l17-5M877 866l-2 11M1344 723l-6-10M1439 715l-8-1M717 896l-12-5 4 7 6 6 13-2M1229 722l-11 1 6 9 12-2M1229 722l-2-12M1515 818l20 5-1-16M975 807l3-5M975 807l8 7-16-3 8-4M1090 775l-14-13M888 1076l-10-12-2-9M1397 737l-12-8 12 3M1397 737l-5 10 8 7M1537 1170l36 2M974 782l-3-9M1175 750l9 0 6-1 19 3M1284 752l5 6M1743 1193l3-12 11 7 12-12M1980 816l32 4M1278 723l11-1M1611 688l8 10M2209 896l-19-12M1600 1220l15-1M860 809l-14-4M1042 767l-5-2-5 8 10-6M930 784l-13 1-12 10 13 1-1-11-3-9M826 1137l10-9M1638 725l-11-3-12 0-13 6M1755 769l-7 7M710 961l-19 0M1512 1231l13 3M1512 1231l1-6-14 6M1266 1295l44 7M1616 1195l14-4M1616 1195l-12-9M1627 669l-16 6M659 898l8-5M1203 735l-9 5M1636 757l-10-10M1556 823l-21 0M1745 1209l-12 3M1052 793l-14-4 11-5M1569 710l15-2M1663 1219l-9-7M1680 682l0 10M1458 804l13-8M821 884l-8 9M1827 702l21 7M1142 742l-2-7 12 1M1038 789l-14-4M847 817l3 7M1266 807l2-8M1037 765l-11-10M1171 738l-11 9-5 12M905 795l-3-8 15-2M892 813l-2 11-7-4 9-7M1580 1237l7 4 2-7M1580 1237l-20 2M1326 1010l-19 10M811 935l19 7M663 947l2 6M658 921l17-3M781 854l9 12M727 870l-14-6 14-5M1549 670l5 0M745 893l-11 4M816 875l18-4M1535 708l10-3M1535 708l-5 6" fill="none" stroke="#12233a" stroke-width="1.75"/></g>
<defs><linearGradient id="gH" x1="0" y1="0" x2="0" y2="1"><stop offset="0" stop-color="#12233a" stop-opacity="0.5"/><stop offset="1" stop-color="#12233a" stop-opacity="0"/></linearGradient><linearGradient id="gM" gradientUnits="userSpaceOnUse" x1="850" y1="0" x2="960" y2="0"><stop offset="0" stop-color="#fff"/><stop offset="1" stop-color="#000"/></linearGradient><mask id="mH" maskUnits="userSpaceOnUse" x="600" y="300" width="400" height="160"><rect x="600" y="300" width="400" height="160" fill="url(#gM)"/></mask></defs>
<polygon points="683.5,359.8 696.0,353.0 708.0,347.0 715.6,341.6 728.8,336.9 751.0,333.5 777.0,333.4 803.8,335.4 822.5,338.8 833.8,343.4 842.6,344.8 885.0,344.8 906.0,338.0 927.7,321.0 949.0,304.0 958.8,297.5 960.0,430.0 683.0,430.0" fill="url(#gH)" mask="url(#mH)"/>
<g fill="none" stroke="#12233a" stroke-linecap="round" stroke-linejoin="round"><path d="M1118 358L1098 384L1072 430L1047 458L1013 505L970 548L928 578L885 599L842 610L800 612L760 618" stroke-width="8" stroke-opacity="0.22"/><path d="M1098 384L1072 430L1047 458L1013 505L970 548L928 578L885 599L842 610" stroke-width="3" stroke-opacity="0.35"/><path d="M912 586L850 601L790 613L739 625L708 646L684 672L668 700L655 747" stroke-width="9" stroke-opacity="0.16"/></g>
<polygon points="628.8,388.5 639.7,380.8 673.7,377.5 683.6,412.6 674.8,425.8 629.9,423.6" fill="#4e4c4f" stroke="#15273d" stroke-width="0.8" stroke-linejoin="round"/>
<path d="M664.6 407.2L673.7 377.5M673.7 377.5L683.6 412.6M664.6 407.2L683.6 412.6M663.3 415.8L674.8 425.8M674.8 425.8L629.9 423.6M663.3 415.8L629.9 423.6M663.3 415.8L683.6 412.6M674.8 425.8L683.6 412.6M663.3 415.8L664.6 407.2M657.8 380.4L639.7 380.8M639.7 380.8L673.7 377.5M657.8 380.4L673.7 377.5M657.8 380.4L653.6 404.5M639.7 380.8L653.6 404.5M638.9 402.2L639.7 380.8M638.9 402.2L653.6 404.5M666.8 379.5L657.8 380.4M666.8 379.5L673.7 377.5M664.6 407.2L666.8 379.5M664.6 407.2L657.8 380.4M633.8 416.6L638.9 402.2M633.8 416.6L653.6 404.5M633.8 416.6L663.3 415.8M633.8 416.6L629.9 423.6M663.3 415.8L653.6 404.5M629.9 423.6L628.8 388.5M633.8 416.6L628.8 388.5M656.6 405.9L663.3 415.8M656.6 405.9L653.6 404.5M656.6 405.9L664.6 407.2M657.8 380.4L656.6 405.9M639.7 380.8L634.0 392.2M634.0 392.2L628.8 388.5M639.7 380.8L628.8 388.5M634.0 392.2L638.9 402.2M634.0 392.2L633.8 416.6" stroke="#15273d" stroke-width="0.7" fill="none"/>
<path d="M628.8 388.5L674 392L683.6 412.6M639.7 380.8L650 392M632 408L676 410M640 410V424M648 410V424M656 410V425M664 410V425" stroke="#15273d" stroke-width="0.8" fill="none"/>
<polygon points="729.6,372.0 782.3,372.0 782.3,418.0 753.8,418.0 729.6,410.4" fill="#4e4c4f" stroke="#15273d" stroke-width="0.8" stroke-linejoin="round"/>
<path d="M782.3 418.0L773.9 404.6M773.9 404.6L782.3 372.0M782.3 418.0L782.3 372.0M773.9 404.6L753.7 384.8M753.7 384.8L782.3 372.0M773.9 404.6L757.0 401.5M753.7 384.8L757.0 401.5M782.3 372.0L744.8 375.2M744.8 375.2L729.6 372.0M782.3 372.0L729.6 372.0M753.7 384.8L744.8 375.2M744.8 375.2L739.6 383.1M739.6 383.1L729.6 372.0M753.8 418.0L773.9 404.6M753.8 418.0L782.3 418.0M731.2 393.3L729.6 410.4M729.6 410.4L729.6 372.0M731.2 393.3L729.6 372.0M739.6 383.1L731.2 393.3M746.2 382.6L744.8 375.2M746.2 382.6L753.7 384.8M746.2 382.6L739.6 383.1M746.2 382.6L731.2 393.3M752.8 410.8L753.8 418.0M753.8 418.0L729.6 410.4M752.8 410.8L729.6 410.4M731.2 393.3L752.8 410.8M752.8 410.8L773.9 404.6M746.2 382.6L755.9 402.5M755.9 402.5L731.2 393.3M755.9 402.5L752.8 410.8M755.9 402.5L753.7 384.8M755.9 402.5L757.0 401.5M773.9 404.6L755.9 402.5" stroke="#15273d" stroke-width="0.7" fill="none"/>
<path d="M729.6 385L756 388L782.3 380M756 388L753.8 418M740 372L756 388" stroke="#15273d" stroke-width="0.8" fill="none"/>
<polygon points="805.3,392.9 821.8,383.0 841.5,392.9 850.3,408.2 852.0,432.0 806.0,432.0" fill="#4e4c4f" stroke="#15273d" stroke-width="0.8" stroke-linejoin="round"/>
<path d="M821.8 383.0L809.4 399.3M809.4 399.3L805.3 392.9M821.8 383.0L805.3 392.9M841.1 402.6L809.4 399.3M841.1 402.6L821.8 383.0M806.0 432.0L850.0 424.5M850.0 424.5L852.0 432.0M806.0 432.0L852.0 432.0M850.0 424.5L850.3 408.2M850.3 408.2L852.0 432.0M808.7 413.8L809.4 399.3M808.7 413.8L841.1 402.6M850.0 424.5L808.7 413.8M850.0 424.5L841.1 402.6M808.7 413.8L806.0 432.0M806.0 432.0L805.3 392.9M808.7 413.8L805.3 392.9M847.8 406.0L850.0 424.5M847.8 406.0L841.1 402.6M847.8 406.0L850.3 408.2M841.7 396.2L841.1 402.6M841.7 396.2L821.8 383.0M841.5 392.9L841.7 396.2M841.5 392.9L821.8 383.0M844.8 401.9L841.5 392.9M841.5 392.9L850.3 408.2M844.8 401.9L850.3 408.2M847.8 406.0L844.8 401.9M844.8 401.9L841.7 396.2M844.8 401.9L841.1 402.6" stroke="#15273d" stroke-width="0.7" fill="none"/>
<polygon points="803.0,432.4 837.0,410.4 852.5,432.4 850.3,465.3 835.0,476.2 803.0,469.6" fill="#4e4c4f" stroke="#15273d" stroke-width="0.8" stroke-linejoin="round"/>
<path d="M845.3 452.6L830.7 439.8M830.7 439.8L852.5 432.4M845.3 452.6L852.5 432.4M830.7 439.8L842.5 422.1M842.5 422.1L852.5 432.4M842.5 422.1L837.0 410.4M837.0 410.4L852.5 432.4M845.3 452.6L850.3 465.3M850.3 465.3L835.0 476.2M845.3 452.6L835.0 476.2M850.3 465.3L852.5 432.4M813.5 428.2L842.5 422.1M813.5 428.2L830.7 439.8M813.5 428.2L837.0 410.4M813.5 428.2L803.0 432.4M837.0 410.4L803.0 432.4M813.5 428.2L808.8 438.1M808.8 438.1L803.0 432.4M803.0 469.6L818.1 468.6M818.1 468.6L835.0 476.2M803.0 469.6L835.0 476.2M812.4 458.6L818.1 468.6M812.4 458.6L803.0 469.6M818.1 468.6L845.3 452.6M818.1 468.6L830.7 439.8M812.4 458.6L830.7 439.8M812.4 458.6L809.5 452.8M809.5 452.8L830.7 439.8M809.5 452.8L803.0 469.6M803.0 469.6L803.0 432.4M809.5 452.8L803.0 432.4M808.8 438.1L809.5 452.8M813.4 436.3L813.5 428.2M813.4 436.3L830.7 439.8M813.4 436.3L808.8 438.1M809.5 452.8L813.4 436.3" stroke="#15273d" stroke-width="0.7" fill="none"/>
<path d="M803 432.4L835 440L852.5 432.4M835 440V476.2M837 410.4L835 440" stroke="#15273d" stroke-width="0.8" fill="none"/>
<polygon points="727.5,454.3 773.5,443.3 802.0,458.7 802.0,500.4 742.8,513.5 727.5,500.4" fill="#4e4c4f" stroke="#15273d" stroke-width="0.8" stroke-linejoin="round"/>
<path d="M745.6 485.5L743.4 461.4M743.4 461.4L755.2 475.1M745.6 485.5L755.2 475.1M802.0 500.4L799.0 477.3M799.0 477.3L802.0 458.7M802.0 500.4L802.0 458.7M793.2 485.7L799.0 477.3M793.2 485.7L802.0 500.4M795.2 500.7L802.0 500.4M802.0 500.4L742.8 513.5M795.2 500.7L742.8 513.5M795.2 500.7L793.2 485.7M773.5 443.3L741.1 454.1M741.1 454.1L727.5 454.3M773.5 443.3L727.5 454.3M741.1 454.1L743.4 461.4M743.4 461.4L727.5 454.3M746.1 456.6L773.5 443.3M773.5 443.3L755.2 475.1M746.1 456.6L755.2 475.1M743.4 461.4L746.1 456.6M746.1 456.6L741.1 454.1M727.5 500.4L742.1 510.0M742.1 510.0L742.8 513.5M727.5 500.4L742.8 513.5M745.6 485.5L742.1 510.0M745.6 485.5L727.5 500.4M734.2 484.2L727.5 500.4M727.5 500.4L727.5 454.3M734.2 484.2L727.5 454.3M734.2 484.2L745.6 485.5M743.4 461.4L734.2 484.2M785.1 466.4L793.2 485.7M793.2 485.7L755.2 475.1M785.1 466.4L755.2 475.1M785.1 466.4L799.0 477.3M773.5 443.3L785.1 466.4M773.5 443.3L802.0 458.7M785.1 466.4L802.0 458.7M770.3 504.1L745.6 485.5M770.3 504.1L755.2 475.1M793.2 485.7L770.3 504.1M795.2 500.7L770.3 504.1M770.3 504.1L742.1 510.0M770.3 504.1L742.8 513.5" stroke="#15273d" stroke-width="0.7" fill="none"/>
<path d="M727.5 454.3L744 470L802 458.7M744 470L742.8 513.5M773.5 443.3L744 470" stroke="#15273d" stroke-width="0.8" fill="none"/>
<polygon points="633.0,452.0 677.0,456.5 685.8,474.0 688.0,511.3 657.3,515.7 633.0,500.4" fill="#4e4c4f" stroke="#15273d" stroke-width="0.8" stroke-linejoin="round"/>
<path d="M657.3 515.7L663.8 506.3M663.8 506.3L688.0 511.3M657.3 515.7L688.0 511.3M677.0 456.5L657.5 455.9M657.5 455.9L633.0 452.0M677.0 456.5L633.0 452.0M636.8 466.5L633.0 500.4M633.0 500.4L633.0 452.0M636.8 466.5L633.0 452.0M663.8 506.3L646.1 496.9M646.1 496.9L665.8 470.7M663.8 506.3L665.8 470.7M663.8 506.3L685.8 474.0M685.8 474.0L688.0 511.3M685.8 474.0L665.8 470.7M657.5 455.9L656.2 458.6M656.2 458.6L633.0 452.0M656.2 458.6L636.8 466.5M646.1 496.9L642.7 475.5M642.7 475.5L665.8 470.7M642.7 475.5L656.2 458.6M656.2 458.6L665.8 470.7M642.7 475.5L636.8 466.5M642.6 497.9L642.7 475.5M642.6 497.9L646.1 496.9M642.7 475.5L633.0 500.4M642.6 497.9L633.0 500.4M647.1 504.5L663.8 506.3M647.1 504.5L657.3 515.7M647.1 504.5L646.1 496.9M647.1 504.5L642.6 497.9M633.0 500.4L647.1 504.5M633.0 500.4L657.3 515.7M666.8 469.8L685.8 474.0M666.8 469.8L665.8 470.7M666.8 469.8L677.0 456.5M685.8 474.0L677.0 456.5M666.8 469.8L657.5 455.9M656.2 458.6L666.8 469.8" stroke="#15273d" stroke-width="0.7" fill="none"/>
<path d="M633 452L657 472L685.8 474M657 472L657.3 515.7" stroke="#15273d" stroke-width="0.8" fill="none"/>
<polygon points="679.0,480.6 696.8,478.4 699.0,511.3 681.4,513.5" fill="#454447" stroke="#15273d" stroke-width="0.8" stroke-linejoin="round"/>
<path d="M692.8 498.9L696.8 478.4M696.8 478.4L699.0 511.3M692.8 498.9L699.0 511.3M696.8 478.4L690.4 483.0M690.4 483.0L679.0 480.6M696.8 478.4L679.0 480.6M690.4 483.0L692.8 498.9M692.8 498.9L679.0 480.6M681.4 513.5L686.2 509.7M686.2 509.7L699.0 511.3M681.4 513.5L699.0 511.3M686.2 509.7L692.8 498.9M681.4 513.5L679.0 480.6M686.2 509.7L679.0 480.6" stroke="#15273d" stroke-width="0.7" fill="none"/>
<polygon points="566.0,424.0 582.0,410.0 606.0,424.0 606.0,472.0 572.0,476.0" fill="#4e4c4f" stroke="#15273d" stroke-width="0.8" stroke-linejoin="round"/>
<path d="M582.0 410.0L606.0 424.0M606.0 424.0L566.0 424.0M582.0 410.0L566.0 424.0M606.0 424.0L580.1 455.2M580.1 455.2L566.0 424.0M580.1 455.2L572.0 476.0M572.0 476.0L566.0 424.0M580.1 455.2L585.3 458.2M585.3 458.2L572.0 476.0M585.3 458.2L595.5 469.4M595.5 469.4L572.0 476.0M597.7 470.4L606.0 472.0M606.0 472.0L572.0 476.0M597.7 470.4L572.0 476.0M595.5 469.4L597.7 470.4M595.5 456.4L580.1 455.2M595.5 456.4L606.0 424.0M595.5 456.4L585.3 458.2M595.5 456.4L595.5 469.4M602.0 467.5L597.7 470.4M602.0 467.5L595.5 469.4M595.5 456.4L602.0 467.5M602.0 467.5L606.0 472.0M602.0 467.5L606.0 424.0M606.0 472.0L606.0 424.0" stroke="#15273d" stroke-width="0.7" fill="none"/>
<path d="M566 424L590 440L606 424M582 410L590 440L572 476M590 452L604 450V470" stroke="#15273d" stroke-width="0.8" fill="none"/>
<polygon points="700.0,470.0 716.0,462.0 730.0,468.0 730.0,508.0 704.0,512.0" fill="#454447" stroke="#15273d" stroke-width="0.8" stroke-linejoin="round"/>
<path d="M712.5 501.5L704.0 512.0M704.0 512.0L700.0 470.0M712.5 501.5L700.0 470.0M717.5 492.4L712.5 501.5M717.5 492.4L700.0 470.0M716.0 462.0L718.7 481.1M718.7 481.1L700.0 470.0M716.0 462.0L700.0 470.0M718.7 481.1L717.5 492.4M716.0 462.0L730.0 468.0M718.7 481.1L730.0 468.0M730.0 508.0L712.5 501.5M730.0 508.0L717.5 492.4M730.0 508.0L704.0 512.0M725.9 490.6L718.7 481.1M725.9 490.6L730.0 468.0M730.0 508.0L725.9 490.6M730.0 508.0L730.0 468.0M725.9 490.6L717.5 492.4" stroke="#15273d" stroke-width="0.7" fill="none"/>
<ellipse cx="724" cy="445" rx="29.6" ry="14.5" fill="#9499a2"/>
<path d="M754.0 445.0L731.9 446.9M754.0 445.0L731.9 443.1M753.7 447.1L731.2 447.4M753.7 447.1L732.4 443.6M752.8 449.1L730.4 447.8M752.8 449.1L732.8 444.1M751.3 451.0L729.4 448.2M751.3 451.0L733.0 444.7M749.2 452.8L728.3 448.5M749.2 452.8L733.0 445.3M746.7 454.5L727.1 448.7M746.7 454.5L732.8 445.8M743.6 456.0L725.9 448.9M743.6 456.0L732.4 446.4M740.2 457.2L724.6 449.0M740.2 457.2L731.9 446.9M736.5 458.2L723.4 449.0M736.5 458.2L731.2 447.4M732.5 458.9L722.1 448.9M732.5 458.9L730.4 447.8M728.3 459.4L720.9 448.7M728.3 459.4L729.4 448.2M724.0 459.5L719.7 448.5M724.0 459.5L728.3 448.5M719.7 459.4L718.6 448.2M719.7 459.4L727.1 448.7M715.5 458.9L717.6 447.8M715.5 458.9L725.9 448.9M711.5 458.2L716.8 447.4M711.5 458.2L724.6 449.0M707.8 457.2L716.1 446.9M707.8 457.2L723.4 449.0M704.4 456.0L715.6 446.4M704.4 456.0L722.1 448.9M701.3 454.5L715.2 445.8M701.3 454.5L720.9 448.7M698.8 452.8L715.0 445.3M698.8 452.8L719.7 448.5M696.7 451.0L715.0 444.7M696.7 451.0L718.6 448.2M695.2 449.1L715.2 444.1M695.2 449.1L717.6 447.8M694.3 447.1L715.6 443.6M694.3 447.1L716.8 447.4M694.0 445.0L716.1 443.1M694.0 445.0L716.1 446.9M694.3 442.9L716.8 442.6M694.3 442.9L715.6 446.4M695.2 440.9L717.6 442.2M695.2 440.9L715.2 445.9M696.7 439.0L718.6 441.8M696.7 439.0L715.0 445.3M698.8 437.2L719.7 441.5M698.8 437.2L715.0 444.7M701.3 435.5L720.9 441.3M701.3 435.5L715.2 444.2M704.4 434.0L722.1 441.1M704.4 434.0L715.6 443.6M707.8 432.8L723.4 441.0M707.8 432.8L716.1 443.1M711.5 431.8L724.6 441.0M711.5 431.8L716.8 442.6M715.5 431.1L725.9 441.1M715.5 431.1L717.6 442.2M719.7 430.6L727.1 441.3M719.7 430.6L718.6 441.8M724.0 430.5L728.3 441.5M724.0 430.5L719.7 441.5M728.3 430.6L729.4 441.8M728.3 430.6L720.9 441.3M732.4 431.1L730.4 442.2M732.4 431.1L722.1 441.1M736.5 431.8L731.2 442.6M736.5 431.8L723.4 441.0M740.2 432.8L731.9 443.1M740.2 432.8L724.6 441.0M743.6 434.0L732.4 443.6M743.6 434.0L725.9 441.1M746.7 435.5L732.8 444.1M746.7 435.5L727.1 441.3M749.2 437.2L733.0 444.7M749.2 437.2L728.3 441.5M751.3 439.0L733.0 445.3M751.3 439.0L729.4 441.8M752.8 440.9L732.8 445.9M752.8 440.9L730.4 442.2M753.7 442.9L732.4 446.4M753.7 442.9L731.2 442.6" stroke="#15273d" stroke-width="0.6" fill="none"/>
<ellipse cx="724" cy="445" rx="30.0" ry="14.5" stroke="#15273d" stroke-width="0.6" fill="none"/>
<ellipse cx="724" cy="445" rx="24.0" ry="11.6" stroke="#15273d" stroke-width="0.6" fill="none"/>
<ellipse cx="724" cy="445" rx="18.0" ry="8.7" stroke="#15273d" stroke-width="0.6" fill="none"/>
<ellipse cx="724" cy="445" rx="12.6" ry="6.1" stroke="#15273d" stroke-width="0.6" fill="none"/>
<ellipse cx="724" cy="445" rx="9" ry="4" fill="#34445c"/>
<path d="M722 446L723 430L721 424L724 418L727 424L725 430L726 446Z" fill="#16263e"/>
<g stroke="#15273d" stroke-width="0.5" stroke-linejoin="round">
<polygon points="453.0,533.6 445.8,540.9 439.7,528.0" fill="#75787f"/>
<polygon points="408.7,519.1 415.3,516.6 411.7,525.9" fill="#75787f"/>
<polygon points="447.8,515.9 439.9,521.7 438.9,517.0" fill="#75787f"/>
<polygon points="445.2,530.2 435.7,534.9 434.3,529.2" fill="#75787f"/>
<polygon points="414.7,508.8 426.2,508.1 423.4,520.7" fill="#75787f"/>
<polygon points="439.4,529.8 432.4,535.1 433.1,529.0" fill="#7c7f86"/>
<polygon points="454.4,514.6 464.1,515.8 454.8,525.9" fill="#7c7f86"/>
<polygon points="421.4,514.6 428.1,524.6 415.2,523.6" fill="#84878e"/>
<polygon points="453.4,513.1 464.2,508.6 466.3,520.2" fill="#6c6f77"/>
<polygon points="465.1,530.1 459.5,521.7 469.1,518.0" fill="#7c7f86"/>
<polygon points="458.7,513.2 450.2,516.6 449.7,510.9" fill="#7c7f86"/>
<polygon points="464.4,513.7 453.7,516.3 454.7,506.0" fill="#84878e"/>
<polygon points="436.2,539.6 435.2,548.1 429.4,544.6" fill="#7c7f86"/>
<polygon points="456.2,536.0 457.2,545.8 446.7,543.6" fill="#84878e"/>
<polygon points="458.0,503.1 466.4,509.6 449.0,515.6" fill="#84878e"/>
<polygon points="443.8,514.1 455.3,520.2 441.3,524.8" fill="#75787f"/>
<polygon points="466.7,529.9 459.1,540.4 455.1,525.0" fill="#3a4352"/>
<polygon points="408.2,525.8 416.5,531.5 408.8,537.2" fill="#84878e"/>
<polygon points="415.7,525.6 408.4,519.7 418.7,514.8" fill="#75787f"/>
<polygon points="431.3,527.5 430.3,519.9 440.9,524.4" fill="#84878e"/>
<polygon points="439.6,523.7 455.3,518.5 450.6,530.7" fill="#75787f"/>
<polygon points="428.2,544.3 429.0,530.8 437.1,542.5" fill="#84878e"/>
<polygon points="450.2,533.8 450.2,525.7 461.4,530.5" fill="#75787f"/>
<polygon points="429.7,522.9 434.6,513.7 442.2,521.6" fill="#7c7f86"/>
<polygon points="439.6,515.2 428.7,513.9 438.2,507.3" fill="#7c7f86"/>
<polygon points="447.3,510.1 434.7,511.5 437.1,501.9" fill="#7c7f86"/>
<polygon points="448.5,532.4 437.8,529.0 444.8,520.7" fill="#6c6f77"/>
<polygon points="434.8,533.8 420.5,531.6 430.2,526.4" fill="#6c6f77"/>
<polygon points="451.8,512.3 458.0,521.8 447.5,523.8" fill="#75787f"/>
<polygon points="461.4,527.7 455.0,514.4 466.9,518.9" fill="#75787f"/>
<polygon points="433.6,530.5 433.5,520.1 442.3,522.7" fill="#7c7f86"/>
<polygon points="414.8,524.2 424.6,533.5 412.6,533.8" fill="#75787f"/>
<polygon points="437.7,535.5 432.6,526.3 443.5,526.5" fill="#3a4352"/>
<polygon points="438.9,529.0 436.7,515.1 452.0,523.7" fill="#7c7f86"/>
<polygon points="437.9,511.2 435.4,503.6 443.8,506.4" fill="#6c6f77"/>
<polygon points="421.3,536.3 411.9,538.2 414.6,525.8" fill="#6c6f77"/>
<polygon points="443.2,521.6 438.8,530.2 430.6,526.3" fill="#6c6f77"/>
<polygon points="452.7,508.5 453.4,497.8 461.2,503.3" fill="#84878e"/>
<polygon points="449.0,533.2 447.3,543.7 439.7,537.8" fill="#7c7f86"/>
<polygon points="423.3,504.9 416.9,511.3 413.3,500.0" fill="#84878e"/>
<polygon points="437.2,504.5 429.7,499.9 435.0,497.2" fill="#75787f"/>
<polygon points="454.9,527.5 452.2,534.1 446.2,531.3" fill="#75787f"/>
<polygon points="411.9,526.7 417.5,529.8 411.7,534.6" fill="#6c6f77"/>
<polygon points="463.8,537.0 454.6,529.2 465.7,529.5" fill="#75787f"/>
<polygon points="466.5,527.0 458.7,533.8 456.4,527.2" fill="#7c7f86"/>
<polygon points="438.6,549.9 432.2,542.0 446.8,541.9" fill="#7c7f86"/>
<polygon points="440.2,524.8 430.4,534.9 423.7,525.5" fill="#7c7f86"/>
<polygon points="445.6,533.7 448.0,524.2 456.8,526.4" fill="#3a4352"/>
<polygon points="436.8,540.9 426.3,539.2 433.0,535.0" fill="#7c7f86"/>
<polygon points="441.4,532.0 432.2,537.9 429.7,525.5" fill="#84878e"/>
<polygon points="461.6,514.0 451.2,520.8 445.5,511.1" fill="#7c7f86"/>
<polygon points="451.0,528.5 454.0,534.4 443.7,534.4" fill="#84878e"/>
<polygon points="417.4,522.6 401.6,527.5 402.7,517.5" fill="#7c7f86"/>
<polygon points="419.8,523.8 418.4,512.5 425.6,516.1" fill="#75787f"/>
<polygon points="437.5,506.3 444.2,497.7 448.7,507.2" fill="#7c7f86"/>
<polygon points="441.9,551.2 432.0,552.1 435.5,540.4" fill="#6c6f77"/>
<polygon points="448.2,519.5 441.0,512.9 453.6,511.7" fill="#75787f"/>
<polygon points="462.1,533.0 451.0,535.8 453.2,525.0" fill="#6c6f77"/>
<polygon points="412.1,539.8 402.7,530.1 419.2,527.9" fill="#6c6f77"/>
<polygon points="444.7,497.3 454.9,500.7 445.6,507.3" fill="#7c7f86"/>
<polygon points="455.3,511.3 452.2,523.5 440.2,515.5" fill="#7c7f86"/>
<polygon points="419.9,506.1 420.5,514.5 414.7,510.6" fill="#3a4352"/>
<polygon points="455.1,491.8 446.7,499.5 440.1,492.6" fill="#7c7f86"/>
<polygon points="446.0,522.0 448.5,512.8 459.4,519.3" fill="#3a4352"/>
<polygon points="476.2,513.6 466.2,501.3 479.3,500.1" fill="#7c7f86"/>
<polygon points="467.8,513.2 455.7,512.1 460.7,506.1" fill="#7c7f86"/>
<polygon points="463.8,493.8 455.8,492.3 458.9,484.2" fill="#7c7f86"/>
<polygon points="438.5,481.5 448.1,484.4 436.2,493.2" fill="#84878e"/>
<polygon points="448.9,497.4 440.8,504.9 435.5,499.1" fill="#7c7f86"/>
<polygon points="463.1,476.7 468.7,489.1 452.9,485.3" fill="#7c7f86"/>
<polygon points="449.2,518.2 449.5,507.2 456.6,510.8" fill="#6c6f77"/>
<polygon points="444.6,488.2 452.2,477.4 458.5,483.5" fill="#3a4352"/>
<polygon points="468.8,493.2 462.2,487.4 466.9,482.8" fill="#7c7f86"/>
<polygon points="456.4,486.3 451.8,481.1 463.4,478.0" fill="#7c7f86"/>
<polygon points="467.5,516.6 473.6,510.8 473.3,517.5" fill="#7c7f86"/>
<polygon points="462.6,495.7 449.3,499.3 450.7,491.0" fill="#3a4352"/>
<polygon points="455.5,475.5 457.4,485.3 449.2,482.2" fill="#75787f"/>
<polygon points="460.2,509.7 449.8,523.0 443.1,513.7" fill="#6c6f77"/>
<polygon points="453.3,498.1 444.0,496.0 452.8,492.7" fill="#3a4352"/>
<polygon points="457.9,521.5 443.8,511.4 453.2,510.1" fill="#84878e"/>
<polygon points="441.4,491.5 447.9,498.1 435.7,497.3" fill="#7c7f86"/>
<polygon points="442.1,488.3 441.2,479.6 451.5,485.5" fill="#7c7f86"/>
<polygon points="454.0,509.0 461.2,505.9 461.4,513.1" fill="#84878e"/>
<polygon points="434.1,502.5 434.6,496.2 441.8,502.4" fill="#84878e"/>
<polygon points="453.1,488.4 466.4,490.3 457.1,497.3" fill="#7c7f86"/>
<polygon points="471.5,497.7 464.5,505.3 460.6,499.0" fill="#7c7f86"/>
<polygon points="456.3,498.1 463.2,504.0 454.1,503.8" fill="#75787f"/>
<polygon points="459.9,485.9 472.8,487.5 461.9,495.8" fill="#75787f"/>
<polygon points="457.8,509.3 458.4,495.2 468.7,505.0" fill="#7c7f86"/>
<polygon points="455.3,480.6 466.1,485.2 462.1,491.6" fill="#7c7f86"/>
<polygon points="453.8,497.6 451.7,505.2 440.7,501.9" fill="#84878e"/>
<polygon points="461.2,519.3 451.4,514.3 456.9,510.8" fill="#7c7f86"/>
<polygon points="457.4,503.3 459.0,492.3 466.5,501.4" fill="#7c7f86"/>
<polygon points="434.7,487.2 445.5,487.3 440.5,497.4" fill="#84878e"/>
<polygon points="464.9,483.4 462.4,492.1 454.6,485.5" fill="#7c7f86"/>
<polygon points="452.3,480.3 448.7,490.0 440.8,482.7" fill="#84878e"/>
<polygon points="469.3,480.0 470.4,475.3 478.5,475.9" fill="#3a4352"/>
<polygon points="471.7,483.5 474.8,477.2 479.7,481.7" fill="#84878e"/>
<polygon points="474.3,476.0 482.0,481.6 471.0,481.9" fill="#84878e"/>
<polygon points="468.5,485.2 456.9,487.0 456.5,475.4" fill="#3a4352"/>
<polygon points="470.1,472.8 463.0,478.3 462.2,472.2" fill="#3a4352"/>
<polygon points="464.0,475.7 475.7,481.7 462.6,482.8" fill="#75787f"/>
<polygon points="450.3,476.1 455.3,470.3 461.3,476.4" fill="#84878e"/>
<polygon points="462.8,484.3 473.7,481.1 466.7,491.5" fill="#7c7f86"/>
<polygon points="477.5,472.5 477.6,483.2 468.5,477.6" fill="#3a4352"/>
<polygon points="458.4,479.5 450.5,484.7 449.1,476.9" fill="#7c7f86"/>
<polygon points="464.7,478.7 473.0,487.0 456.6,484.6" fill="#7c7f86"/>
<polygon points="453.8,471.3 465.1,474.5 452.0,480.6" fill="#75787f"/>
<polygon points="392.4,527.2 404.6,522.6 402.9,533.8" fill="#6c6f77"/>
<polygon points="394.6,532.5 406.7,525.8 406.5,535.2" fill="#6c6f77"/>
<polygon points="409.6,528.0 399.5,526.5 405.2,518.9" fill="#7c7f86"/>
<polygon points="383.1,525.8 391.1,523.1 390.2,533.3" fill="#6c6f77"/>
<polygon points="392.2,536.9 386.2,529.6 394.1,525.7" fill="#6c6f77"/>
<polygon points="398.4,513.0 401.6,522.3 388.3,515.3" fill="#3a4352"/>
<polygon points="394.1,526.5 404.7,537.4 393.2,539.6" fill="#75787f"/>
<polygon points="390.8,520.4 388.6,511.9 398.8,515.8" fill="#7c7f86"/>
<polygon points="409.3,520.9 401.4,530.6 394.8,518.2" fill="#84878e"/>
<polygon points="393.3,523.7 403.3,519.0 407.8,528.5" fill="#7c7f86"/>
<polygon points="396.2,522.8 382.4,523.1 385.9,513.3" fill="#6c6f77"/>
<polygon points="397.1,524.3 380.0,524.2 388.8,513.5" fill="#3a4352"/>
<polygon points="393.5,515.2 399.7,508.3 405.8,516.6" fill="#75787f"/>
<polygon points="393.7,519.2 397.2,508.1 401.7,518.6" fill="#7c7f86"/>
<polygon points="479.7,538.5 483.5,527.8 491.7,531.3" fill="#84878e"/>
<polygon points="478.1,560.3 490.2,555.4 489.9,563.3" fill="#6c6f77"/>
<polygon points="473.6,531.5 477.0,526.3 487.7,533.6" fill="#7c7f86"/>
<polygon points="498.3,561.3 491.1,560.2 494.4,555.4" fill="#84878e"/>
<polygon points="481.6,565.7 483.3,557.3 492.2,567.3" fill="#7c7f86"/>
<polygon points="490.5,551.1 477.4,559.8 475.8,548.6" fill="#6c6f77"/>
<polygon points="488.8,537.4 479.2,541.7 480.7,528.3" fill="#7c7f86"/>
<polygon points="491.1,550.7 502.1,547.7 500.3,554.5" fill="#7c7f86"/>
<polygon points="484.3,559.9 475.0,557.7 485.0,555.7" fill="#84878e"/>
<polygon points="482.0,546.9 472.7,546.3 475.8,541.3" fill="#3a4352"/>
<polygon points="485.8,564.9 485.1,555.7 496.3,558.0" fill="#7c7f86"/>
<polygon points="500.4,548.1 490.3,546.1 495.0,541.1" fill="#6c6f77"/>
<polygon points="485.5,539.1 479.3,531.4 489.7,532.5" fill="#84878e"/>
<polygon points="486.0,546.5 480.5,539.9 490.7,538.7" fill="#7c7f86"/>
<polygon points="484.1,535.2 488.8,528.9 492.2,535.0" fill="#7c7f86"/>
<polygon points="481.2,550.6 492.7,548.4 495.2,556.5" fill="#7c7f86"/>
<polygon points="485.2,545.7 493.6,547.4 493.7,556.3" fill="#84878e"/>
<polygon points="475.8,554.0 490.1,554.4 478.7,563.7" fill="#7c7f86"/>
<polygon points="484.3,541.4 482.9,532.0 492.5,532.5" fill="#7c7f86"/>
<polygon points="470.0,543.0 477.8,533.2 482.9,544.9" fill="#6c6f77"/>
<polygon points="502.8,548.1 496.7,541.6 507.8,537.2" fill="#3a4352"/>
<polygon points="491.4,554.0 499.3,562.2 488.8,566.5" fill="#75787f"/>
<polygon points="484.4,552.2 474.4,545.0 485.4,539.6" fill="#3a4352"/>
<polygon points="464.4,551.1 474.9,549.2 473.2,561.7" fill="#7c7f86"/>
<polygon points="490.1,556.8 497.7,552.8 499.7,559.8" fill="#3a4352"/>
<polygon points="489.6,558.8 481.1,550.1 491.2,549.7" fill="#7c7f86"/>
<polygon points="408.2,559.7 402.7,556.3 410.6,551.8" fill="#7c7f86"/>
<polygon points="411.1,569.6 413.5,560.6 419.8,567.1" fill="#75787f"/>
<polygon points="428.7,557.0 425.5,550.5 435.1,550.6" fill="#7c7f86"/>
<polygon points="404.3,548.5 401.8,555.5 397.0,548.3" fill="#7c7f86"/>
<polygon points="430.6,560.7 414.8,566.3 415.4,556.0" fill="#7c7f86"/>
<polygon points="433.0,547.0 424.1,556.7 422.1,548.4" fill="#7c7f86"/>
<polygon points="403.5,558.4 400.7,552.0 410.6,552.3" fill="#84878e"/>
<polygon points="399.5,558.0 409.0,559.6 400.9,565.2" fill="#84878e"/>
<polygon points="412.6,564.6 399.4,567.1 405.2,560.1" fill="#6c6f77"/>
<polygon points="425.5,560.5 429.7,556.4 435.7,560.6" fill="#75787f"/>
<polygon points="435.5,555.6 434.5,563.9 426.4,558.8" fill="#6c6f77"/>
<polygon points="414.9,565.2 409.6,573.6 404.1,559.7" fill="#7c7f86"/>
<polygon points="427.4,547.3 426.2,559.1 417.6,550.5" fill="#75787f"/>
<polygon points="416.6,561.7 424.0,556.8 428.5,564.4" fill="#84878e"/>
<polygon points="428.3,557.3 424.0,550.0 436.2,552.7" fill="#6c6f77"/>
<polygon points="413.3,543.3 407.8,552.4 406.2,541.8" fill="#75787f"/>
<polygon points="439.0,552.3 427.9,561.5 423.8,552.6" fill="#75787f"/>
<polygon points="415.1,553.9 421.7,564.3 408.4,563.6" fill="#7c7f86"/>
<polygon points="503.7,582.6 490.2,576.0 507.1,569.0" fill="#75787f"/>
<polygon points="491.4,584.1 496.9,573.3 507.1,580.1" fill="#7c7f86"/>
<polygon points="504.2,581.6 491.7,584.0 498.6,575.3" fill="#75787f"/>
<polygon points="491.0,581.0 491.9,572.4 504.2,579.6" fill="#7c7f86"/>
<polygon points="509.5,580.5 494.5,582.1 497.2,574.1" fill="#6c6f77"/>
<polygon points="498.7,571.0 509.9,577.0 495.0,580.5" fill="#75787f"/>
<polygon points="493.4,586.4 501.4,579.7 501.6,590.8" fill="#7c7f86"/>
<polygon points="493.0,622.0 489.4,616.3 500.7,613.8" fill="#3a4352"/>
<polygon points="494.4,609.9 492.3,619.3 484.7,614.6" fill="#3a4352"/>
<polygon points="492.7,615.0 484.3,625.6 480.7,615.9" fill="#7c7f86"/>
<polygon points="499.9,615.0 494.3,620.1 491.2,614.5" fill="#75787f"/>
<polygon points="485.2,624.3 481.6,610.8 492.2,618.8" fill="#75787f"/>
<polygon points="594.5,502.5 603.1,502.3 597.2,507.4" fill="#7c7f86"/>
<polygon points="574.9,535.0 575.7,542.8 569.5,535.4" fill="#7c7f86"/>
<polygon points="601.3,507.8 594.0,512.7 591.5,504.3" fill="#75787f"/>
<polygon points="582.9,551.5 579.2,544.9 590.2,541.9" fill="#6c6f77"/>
<polygon points="624.4,522.8 617.5,524.7 618.8,517.5" fill="#7c7f86"/>
<polygon points="560.1,517.1 568.3,506.3 576.6,513.1" fill="#75787f"/>
<polygon points="605.6,549.7 596.1,553.3 592.7,542.1" fill="#7c7f86"/>
<polygon points="611.5,521.7 622.8,514.9 622.0,527.8" fill="#6c6f77"/>
<polygon points="588.5,505.4 584.0,511.9 577.6,506.1" fill="#7c7f86"/>
<polygon points="583.6,519.1 597.8,517.9 588.0,530.6" fill="#84878e"/>
<polygon points="560.9,513.0 571.3,509.1 571.9,520.4" fill="#75787f"/>
<polygon points="572.6,513.3 568.9,519.7 564.2,511.8" fill="#7c7f86"/>
<polygon points="576.8,517.2 583.7,510.5 593.1,521.8" fill="#75787f"/>
<polygon points="589.0,512.3 589.0,506.2 598.0,508.5" fill="#3a4352"/>
<polygon points="593.6,496.6 589.7,505.3 580.5,498.0" fill="#7c7f86"/>
<polygon points="598.2,524.2 603.2,517.6 604.3,525.1" fill="#75787f"/>
<polygon points="595.9,512.2 592.7,523.8 584.9,517.0" fill="#75787f"/>
<polygon points="601.4,499.2 611.5,503.8 601.6,508.8" fill="#84878e"/>
<polygon points="590.8,543.9 576.8,551.9 572.4,542.2" fill="#84878e"/>
<polygon points="610.5,505.6 605.2,508.8 604.8,499.0" fill="#3a4352"/>
<polygon points="599.7,511.1 608.4,509.3 606.0,518.6" fill="#84878e"/>
<polygon points="591.0,515.0 593.6,522.5 583.9,522.6" fill="#84878e"/>
<polygon points="572.9,540.8 583.5,540.4 578.8,550.3" fill="#6c6f77"/>
<polygon points="578.7,543.0 570.4,538.6 581.9,532.6" fill="#84878e"/>
<polygon points="608.6,523.1 594.1,520.4 607.7,513.6" fill="#75787f"/>
<polygon points="596.7,517.8 599.7,510.2 612.7,515.3" fill="#84878e"/>
<polygon points="590.7,502.5 590.7,513.8 580.2,509.7" fill="#7c7f86"/>
<polygon points="606.6,534.2 609.1,526.6 616.0,536.0" fill="#6c6f77"/>
<polygon points="570.0,538.1 577.1,535.6 576.9,542.6" fill="#84878e"/>
<polygon points="569.1,527.6 561.1,528.8 563.6,522.0" fill="#7c7f86"/>
<polygon points="617.4,516.9 605.4,511.3 613.5,503.3" fill="#7c7f86"/>
<polygon points="576.6,497.1 577.8,508.6 565.5,504.6" fill="#75787f"/>
<polygon points="574.6,508.7 578.6,496.5 588.9,504.2" fill="#7c7f86"/>
<polygon points="601.3,526.1 582.8,523.4 599.2,515.9" fill="#7c7f86"/>
<polygon points="617.6,508.7 615.7,518.1 605.2,511.4" fill="#84878e"/>
<polygon points="585.8,514.8 600.9,520.1 589.2,526.0" fill="#75787f"/>
<polygon points="617.7,509.1 607.4,503.2 616.6,498.9" fill="#3a4352"/>
<polygon points="582.5,522.1 589.9,527.2 584.4,531.3" fill="#6c6f77"/>
<polygon points="602.5,532.8 610.1,535.6 603.2,539.0" fill="#6c6f77"/>
<polygon points="567.5,542.5 570.5,532.3 577.8,539.3" fill="#7c7f86"/>
<polygon points="613.7,515.5 602.2,513.2 607.0,505.1" fill="#75787f"/>
<polygon points="601.5,540.1 589.9,547.2 589.9,538.0" fill="#7c7f86"/>
<polygon points="601.0,497.9 588.8,501.9 588.8,492.8" fill="#84878e"/>
<polygon points="587.2,518.4 589.9,531.0 577.4,523.2" fill="#6c6f77"/>
<polygon points="588.0,520.0 599.1,528.9 586.1,532.4" fill="#75787f"/>
<polygon points="606.3,510.9 606.1,501.1 620.3,505.2" fill="#6c6f77"/>
<polygon points="604.2,531.4 617.1,527.9 612.4,538.0" fill="#84878e"/>
<polygon points="598.4,530.5 595.2,539.9 581.8,538.1" fill="#75787f"/>
<polygon points="576.6,536.1 582.6,527.3 586.8,535.8" fill="#3a4352"/>
<polygon points="601.6,518.5 603.1,526.1 589.0,526.6" fill="#6c6f77"/>
<polygon points="559.9,533.1 567.8,521.4 575.2,528.0" fill="#75787f"/>
<polygon points="585.4,505.7 598.0,499.6 599.6,510.8" fill="#7c7f86"/>
<polygon points="588.9,506.2 588.2,493.9 597.2,498.8" fill="#7c7f86"/>
<polygon points="588.3,544.9 602.0,538.7 604.5,547.7" fill="#3a4352"/>
<polygon points="588.3,545.3 591.3,533.9 601.7,540.5" fill="#3a4352"/>
<polygon points="601.8,520.4 609.7,529.9 597.9,530.2" fill="#7c7f86"/>
<polygon points="594.9,538.5 585.0,543.4 583.5,533.4" fill="#6c6f77"/>
<polygon points="584.6,532.9 574.4,537.5 576.4,529.2" fill="#75787f"/>
<polygon points="596.0,496.3 602.1,501.4 592.7,505.8" fill="#6c6f77"/>
<polygon points="575.6,537.5 564.3,538.8 567.6,526.7" fill="#7c7f86"/>
<polygon points="577.7,516.2 587.8,509.7 590.0,519.8" fill="#6c6f77"/>
<polygon points="580.4,536.7 571.3,542.7 574.7,530.3" fill="#75787f"/>
<polygon points="613.0,522.6 598.7,521.7 606.0,512.1" fill="#7c7f86"/>
<polygon points="600.2,507.2 588.3,504.6 596.2,496.9" fill="#75787f"/>
<polygon points="571.3,538.6 581.4,533.6 585.7,539.8" fill="#3a4352"/>
<polygon points="572.9,514.6 569.0,508.9 578.5,509.7" fill="#6c6f77"/>
<polygon points="609.5,496.8 626.9,489.9 619.6,503.6" fill="#7c7f86"/>
<polygon points="651.6,496.8 642.5,493.4 654.3,486.6" fill="#6c6f77"/>
<polygon points="641.7,512.6 636.0,500.8 650.3,504.6" fill="#7c7f86"/>
<polygon points="658.5,512.1 648.5,516.8 649.6,509.5" fill="#3a4352"/>
<polygon points="635.4,508.1 621.4,507.3 628.9,500.9" fill="#6c6f77"/>
<polygon points="641.9,510.0 650.7,509.1 643.4,518.1" fill="#7c7f86"/>
<polygon points="659.1,498.1 644.4,501.7 649.4,492.8" fill="#84878e"/>
<polygon points="618.9,497.0 614.1,492.9 618.1,490.3" fill="#7c7f86"/>
<polygon points="619.9,504.5 621.5,495.9 630.6,504.0" fill="#7c7f86"/>
<polygon points="647.2,490.9 635.3,490.1 637.8,480.0" fill="#7c7f86"/>
<polygon points="635.4,515.7 636.1,508.4 646.4,513.8" fill="#7c7f86"/>
<polygon points="662.3,503.9 650.7,501.6 656.1,491.1" fill="#7c7f86"/>
<polygon points="621.4,500.7 615.9,486.1 629.2,491.6" fill="#75787f"/>
<polygon points="627.0,503.5 628.3,518.6 616.4,510.0" fill="#3a4352"/>
<polygon points="649.1,498.8 658.9,499.0 651.8,505.2" fill="#84878e"/>
<polygon points="654.0,509.1 655.2,498.4 664.0,502.7" fill="#7c7f86"/>
<polygon points="635.2,500.6 644.3,489.9 645.4,499.7" fill="#7c7f86"/>
<polygon points="627.6,488.9 617.2,497.1 613.5,485.1" fill="#7c7f86"/>
<polygon points="637.3,512.4 649.8,511.6 645.6,521.3" fill="#75787f"/>
<polygon points="630.5,506.5 621.8,500.1 630.2,494.7" fill="#7c7f86"/>
<polygon points="634.7,513.0 629.2,516.6 626.0,507.1" fill="#6c6f77"/>
<polygon points="641.7,485.6 650.5,488.5 643.0,493.3" fill="#6c6f77"/>
<polygon points="658.8,507.6 654.2,513.6 646.5,504.1" fill="#3a4352"/>
<polygon points="631.3,494.7 629.2,501.9 622.0,497.4" fill="#84878e"/>
<polygon points="640.2,497.5 635.0,503.7 632.6,498.3" fill="#7c7f86"/>
<polygon points="663.9,498.7 652.2,504.6 647.1,498.3" fill="#75787f"/>
<polygon points="618.2,513.7 628.9,508.8 626.5,517.9" fill="#7c7f86"/>
<polygon points="640.5,516.6 624.7,514.0 635.7,507.6" fill="#6c6f77"/>
<polygon points="652.6,487.9 658.1,493.3 648.3,494.1" fill="#75787f"/>
<polygon points="616.7,491.6 623.9,499.5 612.9,496.9" fill="#3a4352"/>
<polygon points="651.8,521.7 638.0,522.3 642.1,511.9" fill="#3a4352"/>
<polygon points="646.2,488.9 652.0,483.0 655.5,494.6" fill="#6c6f77"/>
<polygon points="646.4,486.4 643.2,493.5 636.0,489.2" fill="#7c7f86"/>
<polygon points="632.7,501.7 642.0,506.0 637.5,511.4" fill="#7c7f86"/>
<polygon points="634.9,506.0 647.2,510.3 639.0,516.7" fill="#3a4352"/>
<polygon points="651.8,507.1 639.5,508.0 643.9,500.2" fill="#84878e"/>
<polygon points="649.4,492.9 633.4,493.4 640.6,486.3" fill="#75787f"/>
<polygon points="655.1,516.3 647.3,519.8 648.7,510.6" fill="#6c6f77"/>
<polygon points="626.4,483.8 619.5,478.1 632.7,471.2" fill="#84878e"/>
<polygon points="624.7,478.1 619.6,472.7 631.9,472.4" fill="#84878e"/>
<polygon points="632.0,470.0 623.2,476.8 623.5,465.6" fill="#7c7f86"/>
<polygon points="632.7,479.0 645.5,478.3 639.9,486.8" fill="#3a4352"/>
<polygon points="630.1,475.8 638.3,463.7 645.2,470.9" fill="#7c7f86"/>
<polygon points="630.1,474.4 641.5,475.0 633.5,481.9" fill="#6c6f77"/>
<polygon points="637.0,478.9 647.2,474.2 642.5,486.3" fill="#6c6f77"/>
<polygon points="631.2,478.2 640.7,475.6 638.2,480.4" fill="#3a4352"/>
<polygon points="641.8,467.8 641.2,476.1 632.5,475.4" fill="#84878e"/>
<polygon points="645.7,482.6 636.8,487.1 636.2,476.8" fill="#6c6f77"/>
<polygon points="540.6,525.2 547.8,534.1 533.7,534.6" fill="#84878e"/>
<polygon points="556.8,546.4 553.4,539.7 562.4,541.0" fill="#7c7f86"/>
<polygon points="553.8,522.7 561.2,527.6 549.0,530.0" fill="#6c6f77"/>
<polygon points="542.3,534.0 547.0,541.9 537.5,539.8" fill="#7c7f86"/>
<polygon points="545.3,535.3 532.7,529.3 548.9,528.2" fill="#84878e"/>
<polygon points="542.3,523.3 540.5,536.4 531.0,530.1" fill="#75787f"/>
<polygon points="551.0,550.4 546.1,541.1 557.3,538.9" fill="#7c7f86"/>
<polygon points="557.2,527.4 565.6,538.3 550.3,539.5" fill="#7c7f86"/>
<polygon points="537.6,527.7 546.7,538.4 538.5,539.0" fill="#3a4352"/>
<polygon points="561.3,530.0 564.0,540.5 557.0,536.9" fill="#6c6f77"/>
<polygon points="542.6,535.9 541.4,522.8 552.9,526.6" fill="#75787f"/>
<polygon points="551.4,534.6 545.5,542.3 539.8,537.0" fill="#6c6f77"/>
<polygon points="541.0,539.7 551.8,541.3 541.6,546.3" fill="#84878e"/>
<polygon points="567.8,526.5 561.6,541.4 553.5,526.5" fill="#84878e"/>
<polygon points="571.6,543.7 559.5,540.0 568.4,533.5" fill="#7c7f86"/>
<polygon points="548.9,538.3 533.8,539.5 545.5,528.1" fill="#7c7f86"/>
<polygon points="547.5,535.7 552.4,523.8 560.9,533.8" fill="#6c6f77"/>
<polygon points="569.6,540.1 561.1,539.1 565.7,532.2" fill="#3a4352"/>
<polygon points="538.3,530.8 549.8,535.7 540.2,543.4" fill="#6c6f77"/>
<polygon points="542.7,532.7 545.0,523.8 556.8,529.5" fill="#7c7f86"/>
<polygon points="638.1,542.4 627.2,540.3 632.0,533.1" fill="#75787f"/>
<polygon points="621.2,545.0 624.1,550.2 616.0,549.9" fill="#6c6f77"/>
<polygon points="618.5,561.6 606.1,561.6 609.8,551.6" fill="#6c6f77"/>
<polygon points="605.8,552.3 594.0,552.0 601.8,545.4" fill="#7c7f86"/>
<polygon points="597.9,542.3 600.9,532.7 610.8,539.0" fill="#6c6f77"/>
<polygon points="619.2,552.9 629.5,554.1 618.9,562.0" fill="#75787f"/>
<polygon points="634.9,538.2 625.3,537.6 633.0,532.0" fill="#84878e"/>
<polygon points="642.6,532.8 629.1,538.2 634.1,526.3" fill="#6c6f77"/>
<polygon points="626.8,533.6 620.7,541.2 613.9,530.0" fill="#84878e"/>
<polygon points="636.3,549.9 627.2,559.3 623.3,551.2" fill="#7c7f86"/>
<polygon points="599.6,559.5 601.6,549.0 611.5,560.8" fill="#75787f"/>
<polygon points="642.7,544.9 635.7,551.4 633.6,545.7" fill="#7c7f86"/>
<polygon points="613.7,544.4 620.7,541.9 621.1,550.2" fill="#3a4352"/>
<polygon points="618.6,540.9 613.2,544.7 612.6,534.1" fill="#7c7f86"/>
<polygon points="616.5,558.2 626.2,558.4 619.3,563.8" fill="#3a4352"/>
<polygon points="606.4,544.3 609.2,538.6 617.5,540.6" fill="#3a4352"/>
<polygon points="639.8,535.3 625.7,535.7 630.3,528.8" fill="#7c7f86"/>
<polygon points="604.3,549.5 610.6,555.1 602.1,557.6" fill="#6c6f77"/>
<polygon points="622.3,544.7 610.0,539.7 621.9,532.0" fill="#84878e"/>
<polygon points="619.6,544.9 630.0,550.7 617.0,556.7" fill="#84878e"/>
<polygon points="629.5,528.1 635.5,533.5 625.3,539.2" fill="#6c6f77"/>
<polygon points="637.4,537.6 642.2,543.7 633.1,545.6" fill="#84878e"/>
<polygon points="625.4,538.8 630.0,530.5 638.4,533.3" fill="#84878e"/>
<polygon points="632.6,550.8 630.1,542.2 641.0,544.3" fill="#6c6f77"/>
<polygon points="633.5,547.8 636.7,560.1 624.0,555.3" fill="#7c7f86"/>
<polygon points="629.4,544.5 637.3,543.2 636.7,549.9" fill="#75787f"/>
<polygon points="631.7,542.6 627.4,556.1 621.7,548.7" fill="#7c7f86"/>
<polygon points="631.7,546.5 640.4,552.8 627.6,557.4" fill="#7c7f86"/>
<polygon points="580.4,565.7 580.8,552.5 590.6,563.2" fill="#6c6f77"/>
<polygon points="569.3,557.2 557.5,565.8 552.0,555.4" fill="#75787f"/>
<polygon points="578.1,556.9 571.1,565.7 569.6,559.1" fill="#75787f"/>
<polygon points="569.5,568.5 576.9,560.0 582.3,566.1" fill="#84878e"/>
<polygon points="563.0,555.7 566.5,562.5 556.6,561.4" fill="#75787f"/>
<polygon points="576.0,566.9 577.5,552.3 591.5,559.1" fill="#7c7f86"/>
<polygon points="571.8,555.8 561.3,557.7 565.8,549.9" fill="#7c7f86"/>
<polygon points="588.0,553.5 582.0,562.3 578.6,553.6" fill="#84878e"/>
<polygon points="563.9,550.7 578.3,551.3 570.2,558.6" fill="#7c7f86"/>
<polygon points="589.1,565.1 578.5,564.2 586.9,557.9" fill="#7c7f86"/>
<polygon points="574.0,569.7 572.8,558.0 583.3,559.4" fill="#84878e"/>
<polygon points="562.9,558.4 579.7,557.8 570.6,566.2" fill="#7c7f86"/>
<polygon points="649.4,535.2 649.5,529.4 657.9,532.7" fill="#7c7f86"/>
<polygon points="656.1,547.2 644.5,541.9 657.4,537.5" fill="#6c6f77"/>
<polygon points="653.8,545.0 650.6,538.4 661.5,538.7" fill="#84878e"/>
<polygon points="651.6,525.7 645.1,532.2 641.2,528.1" fill="#7c7f86"/>
<polygon points="661.5,546.4 652.6,553.0 655.4,541.6" fill="#6c6f77"/>
<polygon points="650.4,524.5 648.6,533.7 639.3,532.2" fill="#7c7f86"/>
<polygon points="641.7,540.7 646.8,534.1 655.1,539.3" fill="#7c7f86"/>
<polygon points="639.7,536.2 638.2,528.1 648.7,530.6" fill="#3a4352"/>
<polygon points="640.4,525.1 645.5,516.0 647.8,528.1" fill="#3a4352"/>
<polygon points="654.3,543.2 645.0,543.2 653.4,537.5" fill="#7c7f86"/>
</g>
<line x1="437" y1="646" x2="436" y2="630" stroke="#16263e" stroke-width="12.5" stroke-linecap="round"/>
<line x1="436" y1="630" x2="435.5" y2="614" stroke="#16263e" stroke-width="9.2" stroke-linecap="round"/>
<line x1="435.5" y1="614" x2="436" y2="603" stroke="#16263e" stroke-width="8.2" stroke-linecap="round"/>
<line x1="436" y1="603" x2="428" y2="590" stroke="#16263e" stroke-width="6.8" stroke-linecap="round"/>
<line x1="428" y1="590" x2="420" y2="578" stroke="#16263e" stroke-width="5.0" stroke-linecap="round"/>
<line x1="420" y1="578" x2="412.3" y2="568.8" stroke="#16263e" stroke-width="4.0" stroke-linecap="round"/>
<line x1="412.3" y1="568.8" x2="408" y2="562" stroke="#16263e" stroke-width="3.0" stroke-linecap="round"/>
<line x1="436" y1="603" x2="446" y2="594" stroke="#16263e" stroke-width="6.0" stroke-linecap="round"/>
<line x1="446" y1="594" x2="454.7" y2="587" stroke="#16263e" stroke-width="4.8" stroke-linecap="round"/>
<line x1="454.7" y1="587" x2="462.6" y2="571.4" stroke="#16263e" stroke-width="4.2" stroke-linecap="round"/>
<line x1="462.6" y1="571.4" x2="467.9" y2="555.5" stroke="#16263e" stroke-width="3.4" stroke-linecap="round"/>
<line x1="467.9" y1="555.5" x2="462" y2="543" stroke="#16263e" stroke-width="2.7" stroke-linecap="round"/>
<line x1="462" y1="543" x2="457" y2="534" stroke="#16263e" stroke-width="2.2" stroke-linecap="round"/>
<line x1="454.7" y1="587" x2="449" y2="566" stroke="#16263e" stroke-width="3.2" stroke-linecap="round"/>
<line x1="449" y1="566" x2="444" y2="552" stroke="#16263e" stroke-width="2.7" stroke-linecap="round"/>
<line x1="444" y1="552" x2="441" y2="542" stroke="#16263e" stroke-width="2.2" stroke-linecap="round"/>
<line x1="441" y1="542" x2="436" y2="521" stroke="#16263e" stroke-width="1.8" stroke-linecap="round"/>
<line x1="428" y1="590" x2="431" y2="575" stroke="#16263e" stroke-width="2.7" stroke-linecap="round"/>
<line x1="431" y1="575" x2="430" y2="556" stroke="#16263e" stroke-width="2.2" stroke-linecap="round"/>
<line x1="452" y1="592" x2="460" y2="603" stroke="#16263e" stroke-width="3.2" stroke-linecap="round"/>
<line x1="460" y1="603" x2="475.8" y2="611" stroke="#16263e" stroke-width="2.7" stroke-linecap="round"/>
<line x1="475.8" y1="611" x2="489" y2="616.4" stroke="#16263e" stroke-width="2.1" stroke-linecap="round"/>
<line x1="489" y1="616.4" x2="502" y2="616" stroke="#16263e" stroke-width="1.6" stroke-linecap="round"/>
<line x1="420" y1="578" x2="407" y2="570" stroke="#16263e" stroke-width="2.2" stroke-linecap="round"/>
<line x1="407" y1="570" x2="398" y2="560" stroke="#16263e" stroke-width="1.8" stroke-linecap="round"/>
<line x1="462.6" y1="571.4" x2="474" y2="562" stroke="#16263e" stroke-width="2.0" stroke-linecap="round"/>
<line x1="474" y1="562" x2="482" y2="550" stroke="#16263e" stroke-width="1.6" stroke-linecap="round"/>
<line x1="467.9" y1="555.5" x2="476" y2="545" stroke="#16263e" stroke-width="1.8" stroke-linecap="round"/>
<line x1="605" y1="640" x2="602" y2="628" stroke="#16263e" stroke-width="21.5" stroke-linecap="round"/>
<line x1="602" y1="628" x2="598" y2="614" stroke="#16263e" stroke-width="15.5" stroke-linecap="round"/>
<line x1="598" y1="614" x2="591" y2="600" stroke="#16263e" stroke-width="12.5" stroke-linecap="round"/>
<line x1="591" y1="600" x2="587" y2="587" stroke="#16263e" stroke-width="10.0" stroke-linecap="round"/>
<line x1="587" y1="587" x2="580" y2="572" stroke="#16263e" stroke-width="7.5" stroke-linecap="round"/>
<line x1="580" y1="572" x2="573.7" y2="555.5" stroke="#16263e" stroke-width="5.0" stroke-linecap="round"/>
<line x1="573.7" y1="555.5" x2="572" y2="545" stroke="#16263e" stroke-width="3.5" stroke-linecap="round"/>
<line x1="587" y1="587" x2="592" y2="575" stroke="#16263e" stroke-width="6.5" stroke-linecap="round"/>
<line x1="592" y1="575" x2="597.5" y2="566" stroke="#16263e" stroke-width="5.5" stroke-linecap="round"/>
<line x1="597.5" y1="566" x2="603" y2="555" stroke="#16263e" stroke-width="4.5" stroke-linecap="round"/>
<line x1="603" y1="555" x2="608" y2="545" stroke="#16263e" stroke-width="3.5" stroke-linecap="round"/>
<line x1="608" y1="545" x2="611" y2="535" stroke="#16263e" stroke-width="2.7" stroke-linecap="round"/>
<line x1="580" y1="572" x2="582" y2="556" stroke="#16263e" stroke-width="3.5" stroke-linecap="round"/>
<line x1="582" y1="556" x2="581.6" y2="542" stroke="#16263e" stroke-width="2.7" stroke-linecap="round"/>
<line x1="581.6" y1="542" x2="584" y2="530" stroke="#16263e" stroke-width="2.2" stroke-linecap="round"/>
<line x1="597.5" y1="566" x2="590" y2="552" stroke="#16263e" stroke-width="2.8" stroke-linecap="round"/>
<line x1="590" y1="552" x2="588" y2="540" stroke="#16263e" stroke-width="2.2" stroke-linecap="round"/>
<line x1="594" y1="590" x2="607" y2="588" stroke="#16263e" stroke-width="4.0" stroke-linecap="round"/>
<line x1="607" y1="588" x2="621.3" y2="584.6" stroke="#16263e" stroke-width="3.2" stroke-linecap="round"/>
<line x1="621.3" y1="584.6" x2="634.6" y2="576.7" stroke="#16263e" stroke-width="2.7" stroke-linecap="round"/>
<line x1="634.6" y1="576.7" x2="642" y2="572" stroke="#16263e" stroke-width="2.1" stroke-linecap="round"/>
<line x1="587" y1="587" x2="574" y2="582" stroke="#16263e" stroke-width="2.7" stroke-linecap="round"/>
<line x1="574" y1="582" x2="563" y2="574" stroke="#16263e" stroke-width="2.2" stroke-linecap="round"/>
<line x1="632" y1="562" x2="634" y2="548" stroke="#16263e" stroke-width="6.0" stroke-linecap="round"/>
<line x1="634" y1="548" x2="637" y2="529" stroke="#16263e" stroke-width="4.2" stroke-linecap="round"/>
<line x1="637" y1="529" x2="638" y2="515" stroke="#16263e" stroke-width="3.0" stroke-linecap="round"/>
<line x1="632" y1="562" x2="622" y2="558" stroke="#16263e" stroke-width="5.2" stroke-linecap="round"/>
<line x1="622" y1="558" x2="613.4" y2="553" stroke="#16263e" stroke-width="3.8" stroke-linecap="round"/>
<line x1="613.4" y1="553" x2="608" y2="548" stroke="#16263e" stroke-width="2.5" stroke-linecap="round"/>
<line x1="632" y1="562" x2="640" y2="566" stroke="#16263e" stroke-width="3.5" stroke-linecap="round"/>
<line x1="640" y1="566" x2="646" y2="562" stroke="#16263e" stroke-width="2.5" stroke-linecap="round"/>
<line x1="637" y1="529" x2="646" y2="520" stroke="#16263e" stroke-width="2.2" stroke-linecap="round"/>
<line x1="646" y1="520" x2="652" y2="508" stroke="#16263e" stroke-width="1.8" stroke-linecap="round"/>
<path d="M426.5 646Q431.5 638 431 626L442 626Q441.5 638 447 645.5Q443 649.5 437 648Q431 650.5 426.5 646Z" fill="#16263e"/>
<path d="M589 642Q596.5 633 595 618L611 616Q611 633 620.5 641.5Q613 646 605 644Q596 647 589 642Z" fill="#16263e"/>
<g stroke="#15273d" stroke-width="0.5" stroke-linejoin="round">
<polygon points="438.5,529.2 449.0,530.9 446.2,537.3" fill="#7c7f86"/>
<polygon points="431.4,510.2 437.7,513.5 428.8,518.5" fill="#7c7f86"/>
<polygon points="456.0,530.0 455.7,520.8 466.6,523.7" fill="#7c7f86"/>
<polygon points="430.7,517.3 443.4,520.2 436.4,526.2" fill="#3a4352"/>
<polygon points="433.8,509.7 421.9,512.8 427.4,506.8" fill="#7c7f86"/>
<polygon points="423.5,532.5 427.8,542.1 421.2,540.6" fill="#7c7f86"/>
<polygon points="447.8,515.6 438.7,512.3 443.8,507.7" fill="#75787f"/>
<polygon points="423.8,506.1 430.3,508.1 423.4,511.7" fill="#7c7f86"/>
<polygon points="422.4,505.8 414.2,519.5 407.1,510.4" fill="#3a4352"/>
<polygon points="435.0,526.8 436.8,533.7 429.4,529.3" fill="#84878e"/>
<polygon points="422.9,503.3 429.4,509.5 418.3,508.0" fill="#75787f"/>
<polygon points="413.6,526.7 422.5,527.1 419.9,534.6" fill="#6c6f77"/>
<polygon points="433.6,535.3 438.8,542.6 428.7,543.8" fill="#75787f"/>
<polygon points="443.1,544.1 450.2,530.5 457.6,537.7" fill="#84878e"/>
<polygon points="428.9,504.4 446.0,508.1 432.2,516.1" fill="#75787f"/>
<polygon points="438.6,523.2 431.8,514.8 439.1,515.4" fill="#6c6f77"/>
<polygon points="424.9,510.0 411.3,514.2 417.3,505.6" fill="#7c7f86"/>
<polygon points="425.4,515.1 413.4,508.7 425.7,503.9" fill="#7c7f86"/>
<polygon points="439.7,502.8 433.4,512.2 423.2,505.2" fill="#6c6f77"/>
<polygon points="424.5,503.6 431.3,513.4 418.5,512.2" fill="#84878e"/>
<polygon points="470.7,531.5 474.5,526.0 479.4,534.1" fill="#6c6f77"/>
<polygon points="471.4,535.1 463.9,528.6 473.5,522.4" fill="#84878e"/>
<polygon points="472.7,508.0 477.8,515.6 466.8,516.9" fill="#75787f"/>
<polygon points="465.6,539.2 466.0,531.8 473.9,534.8" fill="#6c6f77"/>
<polygon points="458.2,522.0 469.7,520.6 465.9,528.5" fill="#75787f"/>
<polygon points="465.8,530.8 466.7,536.7 456.6,535.8" fill="#6c6f77"/>
<polygon points="457.9,524.9 446.7,529.2 446.4,520.7" fill="#3a4352"/>
<polygon points="452.4,530.4 463.2,529.9 457.5,540.0" fill="#75787f"/>
<polygon points="474.9,529.5 484.5,530.0 482.0,540.6" fill="#3a4352"/>
<polygon points="466.8,536.5 477.4,534.7 475.7,540.8" fill="#3a4352"/>
<polygon points="471.9,514.5 464.5,512.9 470.3,507.1" fill="#75787f"/>
<polygon points="467.5,521.5 461.7,530.4 457.3,519.1" fill="#84878e"/>
<polygon points="473.0,536.1 465.8,529.3 478.3,529.0" fill="#6c6f77"/>
<polygon points="451.7,537.5 454.3,523.1 463.6,534.7" fill="#7c7f86"/>
<polygon points="598.8,506.9 612.4,506.3 606.1,512.2" fill="#6c6f77"/>
<polygon points="596.0,508.2 603.5,509.0 596.1,515.6" fill="#3a4352"/>
<polygon points="607.1,511.4 596.4,512.1 600.7,503.5" fill="#7c7f86"/>
<polygon points="596.0,527.4 585.4,514.8 597.9,516.9" fill="#84878e"/>
<polygon points="593.4,531.9 605.3,533.5 596.7,543.5" fill="#75787f"/>
<polygon points="581.2,530.4 571.4,540.6 568.5,529.1" fill="#6c6f77"/>
<polygon points="573.3,525.7 576.9,537.6 563.6,534.2" fill="#6c6f77"/>
<polygon points="605.4,515.5 613.9,520.6 606.2,525.4" fill="#6c6f77"/>
<polygon points="605.2,498.9 601.8,508.1 590.7,493.7" fill="#7c7f86"/>
<polygon points="609.2,529.8 618.8,526.9 615.5,535.3" fill="#6c6f77"/>
<polygon points="580.0,521.8 579.8,512.9 588.0,518.8" fill="#6c6f77"/>
<polygon points="579.1,530.3 571.2,539.3 570.5,526.2" fill="#6c6f77"/>
<polygon points="585.2,535.4 577.3,543.9 571.4,531.9" fill="#84878e"/>
<polygon points="583.3,521.9 582.7,531.5 574.5,524.5" fill="#6c6f77"/>
<polygon points="573.3,516.6 581.6,514.9 576.6,521.4" fill="#75787f"/>
<polygon points="578.8,502.3 586.9,507.7 576.8,513.3" fill="#6c6f77"/>
<polygon points="605.5,512.2 603.3,519.9 593.0,512.2" fill="#84878e"/>
<polygon points="579.9,535.1 572.4,522.9 585.7,523.9" fill="#3a4352"/>
<polygon points="583.1,543.7 584.8,530.6 593.4,533.5" fill="#7c7f86"/>
<polygon points="598.1,516.1 608.6,508.2 611.7,515.4" fill="#84878e"/>
<polygon points="622.3,492.7 631.3,490.7 628.3,497.5" fill="#7c7f86"/>
<polygon points="617.5,507.3 612.8,498.4 628.1,500.5" fill="#3a4352"/>
<polygon points="620.3,507.3 624.3,515.1 617.0,513.7" fill="#84878e"/>
<polygon points="627.1,518.2 627.4,512.5 635.3,512.8" fill="#75787f"/>
<polygon points="641.9,497.0 652.8,490.6 654.1,499.5" fill="#6c6f77"/>
<polygon points="637.9,493.1 633.8,504.0 624.7,499.0" fill="#75787f"/>
<polygon points="627.3,492.5 621.7,497.3 620.5,488.9" fill="#75787f"/>
<polygon points="623.3,520.1 637.2,517.3 625.8,527.8" fill="#3a4352"/>
<polygon points="626.3,501.6 626.2,493.7 638.6,499.2" fill="#6c6f77"/>
<polygon points="627.2,503.2 637.2,506.9 632.3,512.7" fill="#7c7f86"/>
<polygon points="615.0,516.9 612.4,503.9 624.9,505.5" fill="#84878e"/>
<polygon points="645.5,499.9 643.4,508.4 632.1,504.3" fill="#7c7f86"/>
<polygon points="644.8,502.9 640.5,494.5 650.7,499.5" fill="#6c6f77"/>
<polygon points="656.7,513.2 646.0,510.2 652.4,505.3" fill="#75787f"/>
</g>
<path d="M846 392L848 372L846 362L842 352M848 372L853 360L856 348M846 362L850 350M842 352L838 344M853 360L858 356" stroke="#16263e" stroke-width="2.2" fill="none" stroke-linecap="round"/>
<path d="M843 392L846 378L850 378L852 392Z" fill="#16263e"/>
<g stroke="#15273d" stroke-width="0.5">
<polygon points="843.0,338.8 840.8,336.3 844.8,335.0" fill="#2a3a50"/>
<polygon points="850.9,331.3 845.4,333.4 844.8,329.4" fill="#2a3a50"/>
<polygon points="845.7,343.7 849.6,343.9 849.4,346.0" fill="#2a3a50"/>
<polygon points="854.1,335.0 858.9,334.8 856.3,339.2" fill="#4c586a"/>
<polygon points="849.1,342.3 852.5,344.7 847.4,344.9" fill="#4c586a"/>
<polygon points="838.4,346.9 839.2,343.4 842.1,345.3" fill="#39465a"/>
<polygon points="841.9,332.8 848.5,334.2 845.3,336.4" fill="#2a3a50"/>
<polygon points="857.0,343.4 855.9,346.3 854.5,344.2" fill="#39465a"/>
<polygon points="849.9,346.9 849.6,349.5 846.2,347.5" fill="#39465a"/>
<polygon points="852.2,343.5 857.9,342.1 858.2,346.1" fill="#39465a"/>
<polygon points="837.9,334.0 842.8,334.2 841.8,337.4" fill="#2a3a50"/>
<polygon points="842.2,337.3 837.6,339.5 838.3,335.8" fill="#39465a"/>
<polygon points="839.2,335.6 844.0,336.4 840.7,339.4" fill="#4c586a"/>
<polygon points="846.7,338.0 848.1,341.1 843.6,341.9" fill="#4c586a"/>
<polygon points="839.6,334.1 840.7,331.9 843.9,334.1" fill="#2a3a50"/>
<polygon points="853.1,337.0 857.4,335.3 856.6,340.0" fill="#2a3a50"/>
<polygon points="854.2,339.9 857.4,343.3 854.6,343.5" fill="#2a3a50"/>
<polygon points="838.3,335.6 838.8,338.9 835.8,336.7" fill="#2a3a50"/>
<polygon points="843.8,340.5 846.3,343.7 841.2,343.0" fill="#4c586a"/>
<polygon points="839.2,341.5 834.5,337.0 839.5,336.2" fill="#4c586a"/>
<polygon points="834.4,335.1 841.6,337.4 836.1,338.7" fill="#4c586a"/>
<polygon points="845.9,345.3 851.5,346.9 848.2,349.6" fill="#4c586a"/>
<polygon points="847.3,333.6 849.8,337.9 844.9,337.5" fill="#2a3a50"/>
<polygon points="852.0,343.5 845.6,342.8 850.4,339.2" fill="#4c586a"/>
<polygon points="842.5,342.9 846.4,340.3 846.2,344.9" fill="#2a3a50"/>
<polygon points="853.9,342.9 854.0,339.8 858.0,341.6" fill="#4c586a"/>
</g>
<defs><linearGradient id="gR" gradientUnits="userSpaceOnUse" x1="0" y1="104" x2="0" y2="620"><stop offset="0" stop-color="#8989d6"/><stop offset="0.5" stop-color="#9896df"/><stop offset="1" stop-color="#aaa7ea"/></linearGradient></defs>
<polygon points="604.0,104.2 737.6,624.7 740.4,623.9 606.0,103.8" fill="url(#gR)"/>
<polygon points="679.0,104.1 737.6,624.5 740.4,624.1 681.0,103.9" fill="url(#gR)"/>
<polygon points="725.6,572.3 733.1,583.3 724.3,585.6" fill="#a8a5ea"/>
<polygon points="732.8,569.5 738.7,581.4 729.7,582.5" fill="#a8a5ea"/>
<polygon points="778.3,104.7 1193.7,478.5 1195.5,476.5 779.7,103.3" fill="url(#gR)"/>
<polygon points="883.2,104.6 1193.5,478.4 1195.7,476.6 884.8,103.4" fill="url(#gR)"/>
<polygon points="1147.1,434.8 1159.4,439.8 1153.3,446.5" fill="#a8a5ea"/>
<polygon points="1152.2,426.5 1163.7,433.2 1156.7,439.0" fill="#a8a5ea"/>
<line x1="739" y1="624.3" x2="1048" y2="458.3" stroke="#a8a5ea" stroke-width="2.6" stroke-linecap="round"/>
<polygon points="790.9,596.4 782.0,606.4 777.7,598.3" fill="#a8a5ea"/>
<path d="M1043.5 458.3h9.0M1048 453.8v9.0" stroke="#a8a5ea" stroke-width="1.8" fill="none"/>
<line x1="739" y1="624.3" x2="910.7" y2="583.3" stroke="#a8a5ea" stroke-width="2.6" stroke-linecap="round"/>
<polygon points="793.1,611.4 782.0,618.7 779.9,609.8" fill="#a8a5ea"/>
<path d="M906.2 583.3h9.0M910.7 578.8v9.0" stroke="#a8a5ea" stroke-width="1.8" fill="none"/>
<line x1="1194.6" y1="477.5" x2="1290" y2="407" stroke="#a8a5ea" stroke-width="2.6" stroke-linecap="round"/>
<polygon points="1242.1,442.4 1234.7,453.5 1229.3,446.2" fill="#a8a5ea"/>
<line x1="1194.6" y1="477.5" x2="1036.3" y2="572" stroke="#a8a5ea" stroke-width="2.6" stroke-linecap="round"/>
<polygon points="1143.4,508.1 1151.8,497.7 1156.5,505.6" fill="#a8a5ea"/>
<path d="M1031.8 572h9.0M1036.3 567.5v9.0" stroke="#a8a5ea" stroke-width="1.8" fill="none"/>
<line x1="739" y1="624.3" x2="1194.6" y2="477.5" stroke="#1f9a46" stroke-width="2.6" stroke-linecap="round"/>
<polygon points="786.7,608.9 777.5,616.1 775.0,608.5" fill="#1f9a46"/>
<path d="M1189.6 477.5h10M1194.6 472.5v10" stroke="#1f9a46" stroke-width="2" fill="none"/>
<line x1="369.0" y1="553.8" x2="415.2" y2="562.6" stroke="#f4d53c" stroke-width="6.2" stroke-dasharray="6 3.5"/>
<line x1="369.0" y1="553.8" x2="415.2" y2="562.6" stroke="#1f9a46" stroke-width="2.4" stroke-dasharray="6 3.5"/>
<line x1="415.2" y1="562.6" x2="472.6" y2="573.5" stroke="#f4d53c" stroke-width="6.2"/>
<line x1="415.2" y1="562.6" x2="472.6" y2="573.5" stroke="#1f9a46" stroke-width="2.4"/>
<line x1="472.6" y1="573.5" x2="511.5" y2="580.9" stroke="#f4d53c" stroke-width="6.2" stroke-dasharray="6 3.5"/>
<line x1="472.6" y1="573.5" x2="511.5" y2="580.9" stroke="#1f9a46" stroke-width="2.4" stroke-dasharray="6 3.5"/>
<line x1="511.5" y1="580.9" x2="739.0" y2="624.3" stroke="#f4d53c" stroke-width="6.2"/>
<line x1="511.5" y1="580.9" x2="739.0" y2="624.3" stroke="#1f9a46" stroke-width="2.4"/>
<circle cx="369" cy="553.75" r="4.3" fill="#22a34a"/>
<circle cx="415" cy="562.6" r="3.6" fill="#22a34a"/>
<path d="M734 624.3h10M739 619.3v10" stroke="#1f9a46" stroke-width="2" fill="none"/>
<circle cx="1255.2" cy="131.7" r="5.3" fill="#c4808e" fill-opacity="0.62"/>
<circle cx="1268.9" cy="141.6" r="5.3" fill="#6f9fe0" fill-opacity="0.62"/>
<circle cx="1246.7" cy="161.2" r="5.3" fill="#a6cf78" fill-opacity="0.62"/>
<line x1="1246.5" y1="138.7" x2="1246.9" y2="116" stroke="#82b61c" stroke-width="1.1"/>
<line x1="1246.5" y1="138.7" x2="1224.7" y2="136.1" stroke="#2a7fdc" stroke-width="1.1"/>
<line x1="1246.5" y1="138.7" x2="1238.4" y2="146.5" stroke="#dc2a4a" stroke-width="1.1"/>
<circle cx="1246.9" cy="116" r="5.6" fill="#82b61c"/>
<text x="1246.9" y="118.9" font-family="'Liberation Sans',sans-serif" font-size="8" font-weight="bold" fill="#fff" text-anchor="middle">Y</text>
<circle cx="1224.7" cy="136.1" r="5.6" fill="#2079da"/>
<text x="1224.7" y="139.0" font-family="'Liberation Sans',sans-serif" font-size="8" font-weight="bold" fill="#fff" text-anchor="middle">Z</text>
<circle cx="1238.4" cy="146.5" r="5.6" fill="#dc2a4a"/>
<text x="1238.4" y="149.4" font-family="'Liberation Sans',sans-serif" font-size="8" font-weight="bold" fill="#fff" text-anchor="middle">X</text>
</g>
<rect x="333.9" y="104" width="947.9" height="642.7" fill="none" stroke="#3872bd" stroke-width="1.7"/>
</svg>
</body></html>
